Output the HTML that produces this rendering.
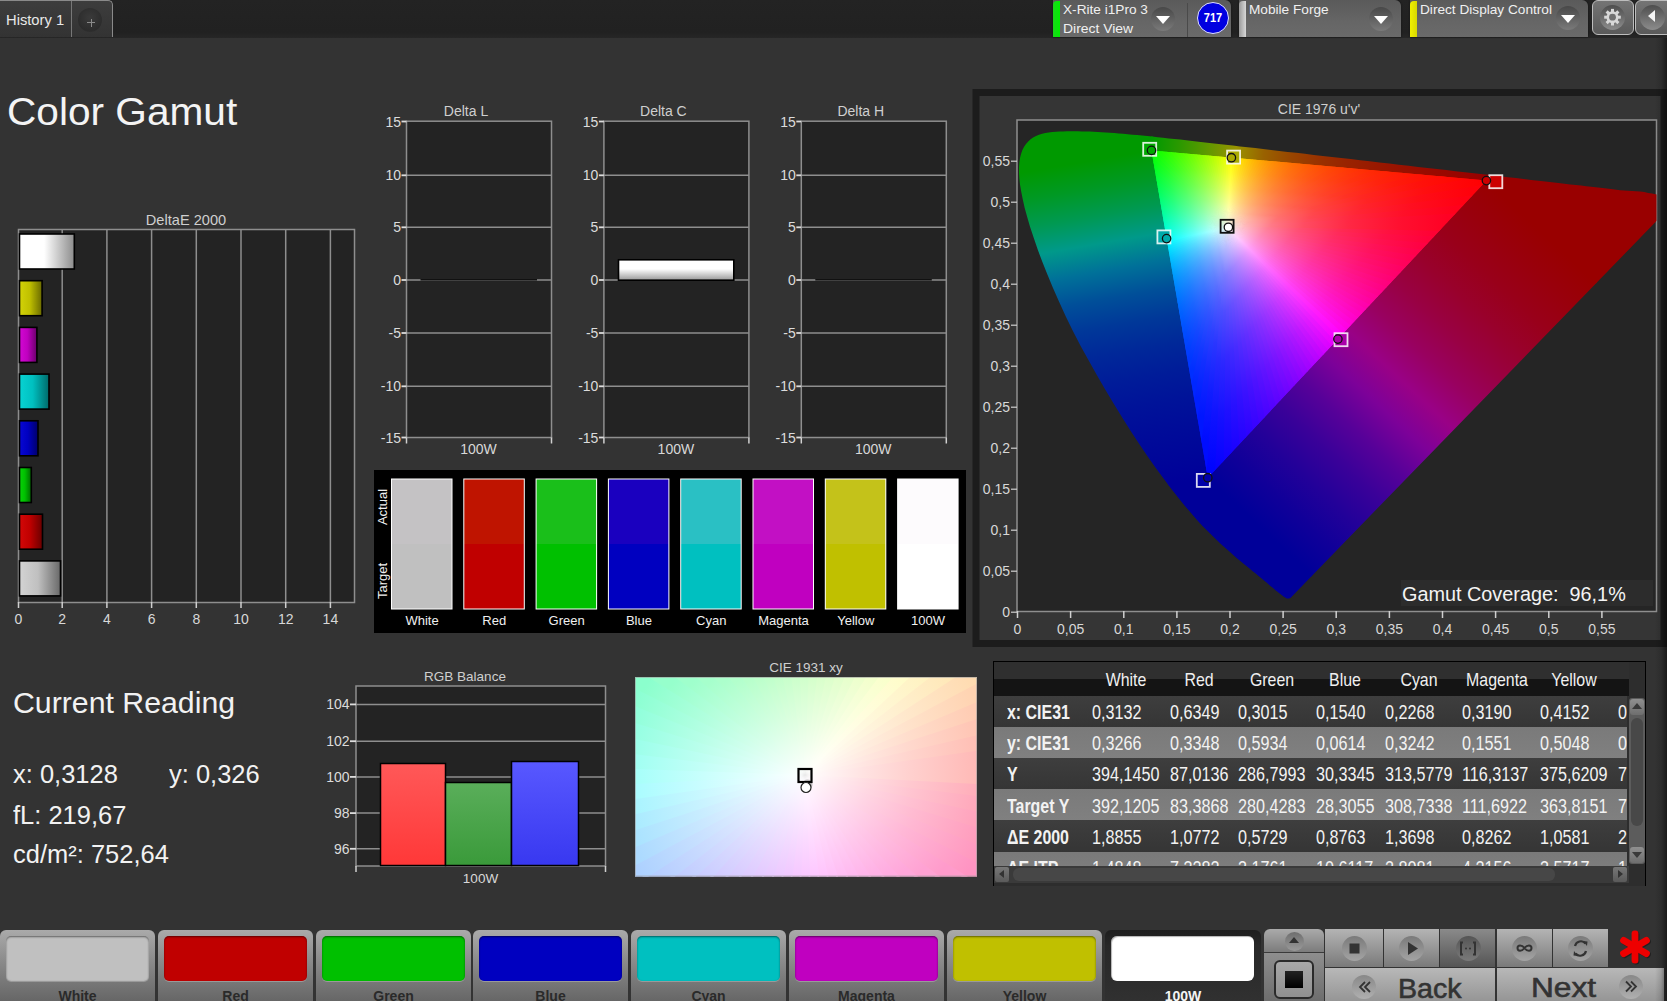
<!DOCTYPE html><html><head><meta charset="utf-8"><style>
*{margin:0;padding:0;box-sizing:border-box}
html,body{width:1667px;height:1001px;overflow:hidden;background:#333;font-family:"Liberation Sans",sans-serif;color:#eee}
.a{position:absolute}
.t{position:absolute;white-space:nowrap;line-height:1}
svg text{font-family:"Liberation Sans",sans-serif}
</style></head><body><div class="a" style="left:0;top:0;width:1667px;height:38px;background:linear-gradient(#232323,#212121 85%,#262626)"></div><div class="a" style="left:0;top:0;width:113px;height:37px;border-radius:0 5px 0 0;background:linear-gradient(#3d3d3d,#333);border-top:1px solid #8a8a8a;border-right:1px solid #8a8a8a"></div><div class="a" style="left:71px;top:1px;width:1px;height:36px;background:#777"></div><div class="a" style="left:78px;top:8px;width:24px;height:24px;border-radius:50%;background:radial-gradient(circle at 50% 40%,#3a3a3a,#2c2c2c 70%,#353535)"></div><div class="t" style="left:87px;top:22px;width:8px;height:1px;background:#8a8a8a"></div><div class="t" style="left:90.5px;top:18.5px;width:1px;height:8px;background:#8a8a8a"></div><div class="t" style="left:5.5px;top:13.3px;font-size:14.1px;color:#e8e8e8;transform:scaleX(1.045);transform-origin:0 0">History 1</div><div class="a" style="left:1053px;top:0;width:178px;height:37px;border-radius:0 6px 0 0;background:linear-gradient(#5a5a5a,#666 60%,#6a6a6a);box-shadow:0 0 2px #111"></div><div class="a" style="left:1053px;top:1px;width:7px;height:36px;border-radius:4px 0 0 0;background:linear-gradient(90deg,#1ad81a,#00f000)"></div><div class="t" style="left:1063px;top:3.3px;font-size:13px;color:#f0f0f0;transform:scaleX(1.05);transform-origin:0 0">X-Rite i1Pro 3</div><div class="t" style="left:1063px;top:22.3px;font-size:13px;color:#f0f0f0;transform:scaleX(1.07);transform-origin:0 0">Direct View</div><div class="a" style="left:1151px;top:7px;width:24px;height:24px;border-radius:50%;background:linear-gradient(#484848,#7a7a7a)"></div><div class="a" style="left:1156px;top:16px;width:0;height:0;border-left:7px solid transparent;border-right:7px solid transparent;border-top:8px solid #fff"></div><div class="a" style="left:1187px;top:3px;width:1px;height:34px;background:#4a4a4a"></div><div class="a" style="left:1197px;top:2px;width:32px;height:32px;border-radius:50%;background:#0000e0;border:1px solid #e0e0ff"></div><div class="t" style="left:1197px;top:12px;width:32px;text-align:center;font-size:12px;font-weight:bold;color:#fff;transform:scaleX(.92)">717</div><div class="a" style="left:1239px;top:0;width:162px;height:37px;border-radius:0 6px 0 0;background:linear-gradient(#5a5a5a,#666 60%,#6a6a6a);box-shadow:0 0 2px #111"></div><div class="a" style="left:1239px;top:1px;width:7px;height:36px;border-radius:4px 0 0 0;background:linear-gradient(90deg,#9a9a9a,#d8d8d8)"></div><div class="t" style="left:1249px;top:3.3px;font-size:13px;color:#f0f0f0;transform:scaleX(1.05);transform-origin:0 0">Mobile Forge</div><div class="a" style="left:1369px;top:7px;width:24px;height:24px;border-radius:50%;background:linear-gradient(#484848,#7a7a7a)"></div><div class="a" style="left:1374px;top:16px;width:0;height:0;border-left:7px solid transparent;border-right:7px solid transparent;border-top:8px solid #fff"></div><div class="a" style="left:1410px;top:0;width:178px;height:37px;border-radius:0 6px 0 0;background:linear-gradient(#5a5a5a,#666 60%,#6a6a6a);box-shadow:0 0 2px #111"></div><div class="a" style="left:1410px;top:1px;width:7px;height:36px;border-radius:4px 0 0 0;background:linear-gradient(90deg,#f0f000,#d8d800)"></div><div class="t" style="left:1420px;top:3.3px;font-size:13px;color:#f0f0f0;transform:scaleX(1.05);transform-origin:0 0">Direct Display Control</div><div class="a" style="left:1556px;top:6px;width:24px;height:24px;border-radius:50%;background:linear-gradient(#484848,#7a7a7a)"></div><div class="a" style="left:1561px;top:15px;width:0;height:0;border-left:7px solid transparent;border-right:7px solid transparent;border-top:8px solid #fff"></div><div class="a" style="left:1592px;top:0;width:42px;height:35px;border-radius:6px;border:1px solid #bdbdbd;background:linear-gradient(#747474,#5a5a5a)"></div><div class="a" style="left:1600px;top:5px;width:25px;height:25px;border-radius:50%;background:linear-gradient(#4e4e4e,#8c8c8c)"></div><svg class="a" style="left:1592px;top:0" width="41" height="35"><g transform="translate(20.5,17.2)" fill="#d8d8d8"><rect x="-1.5" y="-8.3" width="3" height="4" transform="rotate(0)"/><rect x="-1.5" y="-8.3" width="3" height="4" transform="rotate(45)"/><rect x="-1.5" y="-8.3" width="3" height="4" transform="rotate(90)"/><rect x="-1.5" y="-8.3" width="3" height="4" transform="rotate(135)"/><rect x="-1.5" y="-8.3" width="3" height="4" transform="rotate(180)"/><rect x="-1.5" y="-8.3" width="3" height="4" transform="rotate(225)"/><rect x="-1.5" y="-8.3" width="3" height="4" transform="rotate(270)"/><rect x="-1.5" y="-8.3" width="3" height="4" transform="rotate(315)"/><circle r="6"/><circle r="3.4" fill="#707070"/></g></svg><div class="a" style="left:1635px;top:0;width:40px;height:35px;border-radius:6px;border:1px solid #bdbdbd;background:linear-gradient(#747474,#5a5a5a)"></div><div class="a" style="left:1640px;top:5px;width:25px;height:25px;border-radius:50%;background:linear-gradient(#4e4e4e,#8c8c8c)"></div><div class="a" style="left:1648px;top:10px;width:0;height:0;border-top:6.5px solid transparent;border-bottom:6.5px solid transparent;border-right:7.5px solid #f4f4f4"></div><div class="t" style="left:7px;top:93px;font-size:38.5px;color:#f4f4f4;transform:scaleX(1.055);transform-origin:0 0">Color Gamut</div><svg class="a" style="left:0;top:0" width="1667" height="1001"><defs><linearGradient id="db0"><stop offset="0" stop-color="rgb(255, 255, 255)"/><stop offset=".45" stop-color="rgb(255, 255, 255)"/><stop offset="1" stop-color="rgb(140, 140, 140)"/></linearGradient><linearGradient id="db1"><stop offset="0" stop-color="rgb(211, 211, 8)"/><stop offset=".45" stop-color="rgb(192, 192, 0)"/><stop offset="1" stop-color="rgb(105, 105, 0)"/></linearGradient><linearGradient id="db2"><stop offset="0" stop-color="rgb(211, 8, 211)"/><stop offset=".45" stop-color="rgb(192, 0, 192)"/><stop offset="1" stop-color="rgb(105, 0, 105)"/></linearGradient><linearGradient id="db3"><stop offset="0" stop-color="rgb(8, 211, 211)"/><stop offset=".45" stop-color="rgb(0, 192, 192)"/><stop offset="1" stop-color="rgb(0, 105, 105)"/></linearGradient><linearGradient id="db4"><stop offset="0" stop-color="rgb(8, 8, 211)"/><stop offset=".45" stop-color="rgb(0, 0, 192)"/><stop offset="1" stop-color="rgb(0, 0, 105)"/></linearGradient><linearGradient id="db5"><stop offset="0" stop-color="rgb(8, 211, 8)"/><stop offset=".45" stop-color="rgb(0, 192, 0)"/><stop offset="1" stop-color="rgb(0, 105, 0)"/></linearGradient><linearGradient id="db6"><stop offset="0" stop-color="rgb(211, 8, 8)"/><stop offset=".45" stop-color="rgb(192, 0, 0)"/><stop offset="1" stop-color="rgb(105, 0, 0)"/></linearGradient><linearGradient id="db7"><stop offset="0" stop-color="rgb(211, 211, 211)"/><stop offset=".45" stop-color="rgb(192, 192, 192)"/><stop offset="1" stop-color="rgb(105, 105, 105)"/></linearGradient><linearGradient id="dcg" x1="0" y1="0" x2="0" y2="1"><stop offset="0" stop-color="#fff"/><stop offset=".45" stop-color="#fff"/><stop offset="1" stop-color="#999"/></linearGradient><linearGradient id="rb" x1="0" y1="0" x2="0" y2="1"><stop offset="0" stop-color="#ff5858"/><stop offset="1" stop-color="#ff3838"/></linearGradient><linearGradient id="gb" x1="0" y1="0" x2="0" y2="1"><stop offset="0" stop-color="#5aae5a"/><stop offset="1" stop-color="#3a9a3a"/></linearGradient><linearGradient id="bb" x1="0" y1="0" x2="0" y2="1"><stop offset="0" stop-color="#5858ff"/><stop offset="1" stop-color="#3838f0"/></linearGradient></defs><rect x="18.5" y="229.5" width="336" height="373" fill="#232323" stroke="#8e8e8e" stroke-width="1.5"/><line x1="62.2" y1="230" x2="62.2" y2="602" stroke="#8e8e8e" stroke-width="1.5"/><line x1="106.9" y1="230" x2="106.9" y2="602" stroke="#8e8e8e" stroke-width="1.5"/><line x1="151.6" y1="230" x2="151.6" y2="602" stroke="#8e8e8e" stroke-width="1.5"/><line x1="196.3" y1="230" x2="196.3" y2="602" stroke="#8e8e8e" stroke-width="1.5"/><line x1="241" y1="230" x2="241" y2="602" stroke="#8e8e8e" stroke-width="1.5"/><line x1="285.7" y1="230" x2="285.7" y2="602" stroke="#8e8e8e" stroke-width="1.5"/><line x1="330.4" y1="230" x2="330.4" y2="602" stroke="#8e8e8e" stroke-width="1.5"/><line x1="18.5" y1="602" x2="18.5" y2="608" stroke="#d0d0d0" stroke-width="1.5"/><text x="18.5" y="624" font-size="14" fill="#d8d8d8" text-anchor="middle" >0</text><line x1="62.2" y1="602" x2="62.2" y2="608" stroke="#d0d0d0" stroke-width="1.5"/><text x="62.2" y="624" font-size="14" fill="#d8d8d8" text-anchor="middle" >2</text><line x1="106.9" y1="602" x2="106.9" y2="608" stroke="#d0d0d0" stroke-width="1.5"/><text x="106.9" y="624" font-size="14" fill="#d8d8d8" text-anchor="middle" >4</text><line x1="151.6" y1="602" x2="151.6" y2="608" stroke="#d0d0d0" stroke-width="1.5"/><text x="151.6" y="624" font-size="14" fill="#d8d8d8" text-anchor="middle" >6</text><line x1="196.3" y1="602" x2="196.3" y2="608" stroke="#d0d0d0" stroke-width="1.5"/><text x="196.3" y="624" font-size="14" fill="#d8d8d8" text-anchor="middle" >8</text><line x1="241" y1="602" x2="241" y2="608" stroke="#d0d0d0" stroke-width="1.5"/><text x="241" y="624" font-size="14" fill="#d8d8d8" text-anchor="middle" >10</text><line x1="285.7" y1="602" x2="285.7" y2="608" stroke="#d0d0d0" stroke-width="1.5"/><text x="285.7" y="624" font-size="14" fill="#d8d8d8" text-anchor="middle" >12</text><line x1="330.4" y1="602" x2="330.4" y2="608" stroke="#d0d0d0" stroke-width="1.5"/><text x="330.4" y="624" font-size="14" fill="#d8d8d8" text-anchor="middle" >14</text><text x="186" y="225" font-size="14.6" fill="#cfcfcf" text-anchor="middle" >DeltaE 2000</text><rect x="19.5" y="234" width="54.8" height="35" fill="url(#db0)" stroke="#000" stroke-width="1.6"/><rect x="19.5" y="280.7" width="22.6" height="35" fill="url(#db1)" stroke="#000" stroke-width="1.6"/><rect x="19.5" y="327.4" width="17.4" height="35" fill="url(#db2)" stroke="#000" stroke-width="1.6"/><rect x="19.5" y="374.1" width="29.5" height="35" fill="url(#db3)" stroke="#000" stroke-width="1.6"/><rect x="19.5" y="420.8" width="18.5" height="35" fill="url(#db4)" stroke="#000" stroke-width="1.6"/><rect x="19.5" y="467.5" width="11.8" height="35" fill="url(#db5)" stroke="#000" stroke-width="1.6"/><rect x="19.5" y="514.2" width="23" height="35" fill="url(#db6)" stroke="#000" stroke-width="1.6"/><rect x="19.5" y="560.9" width="41" height="35" fill="url(#db7)" stroke="#000" stroke-width="1.6"/><rect x="406.5" y="121.2" width="145" height="316.3" fill="#232323" stroke="#8e8e8e" stroke-width="1.5"/><line x1="401.5" y1="121.5" x2="406.5" y2="121.5" stroke="#dcdcdc" stroke-width="1.8"/><text x="401" y="126.5" font-size="14" fill="#dcdcdc" text-anchor="end" >15</text><line x1="406.5" y1="175.3" x2="551.5" y2="175.3" stroke="#8e8e8e" stroke-width="1.5"/><line x1="401.5" y1="175.3" x2="406.5" y2="175.3" stroke="#dcdcdc" stroke-width="1.8"/><text x="401" y="180.3" font-size="14" fill="#dcdcdc" text-anchor="end" >10</text><line x1="406.5" y1="227.3" x2="551.5" y2="227.3" stroke="#8e8e8e" stroke-width="1.5"/><line x1="401.5" y1="227.3" x2="406.5" y2="227.3" stroke="#dcdcdc" stroke-width="1.8"/><text x="401" y="232.3" font-size="14" fill="#dcdcdc" text-anchor="end" >5</text><line x1="406.5" y1="280" x2="551.5" y2="280" stroke="#8e8e8e" stroke-width="1.5"/><line x1="401.5" y1="280" x2="406.5" y2="280" stroke="#dcdcdc" stroke-width="1.8"/><text x="401" y="285" font-size="14" fill="#dcdcdc" text-anchor="end" >0</text><line x1="406.5" y1="333" x2="551.5" y2="333" stroke="#8e8e8e" stroke-width="1.5"/><line x1="401.5" y1="333" x2="406.5" y2="333" stroke="#dcdcdc" stroke-width="1.8"/><text x="401" y="338" font-size="14" fill="#dcdcdc" text-anchor="end" >-5</text><line x1="406.5" y1="386.3" x2="551.5" y2="386.3" stroke="#8e8e8e" stroke-width="1.5"/><line x1="401.5" y1="386.3" x2="406.5" y2="386.3" stroke="#dcdcdc" stroke-width="1.8"/><text x="401" y="391.3" font-size="14" fill="#dcdcdc" text-anchor="end" >-10</text><line x1="401.5" y1="437.5" x2="406.5" y2="437.5" stroke="#dcdcdc" stroke-width="1.8"/><text x="401" y="442.5" font-size="14" fill="#dcdcdc" text-anchor="end" >-15</text><line x1="406.5" y1="437.5" x2="406.5" y2="443.5" stroke="#d0d0d0" stroke-width="1.5"/><line x1="551.5" y1="437.5" x2="551.5" y2="443.5" stroke="#d0d0d0" stroke-width="1.5"/><text x="466" y="116" font-size="14" fill="#cfcfcf" text-anchor="middle" >Delta L</text><text x="478.5" y="454" font-size="14" fill="#d8d8d8" text-anchor="middle" >100W</text><line x1="420.5" y1="279.8" x2="537" y2="279.8" stroke="#111" stroke-width="1.5"/><rect x="603.9" y="121.2" width="145" height="316.3" fill="#232323" stroke="#8e8e8e" stroke-width="1.5"/><line x1="598.9" y1="121.5" x2="603.9" y2="121.5" stroke="#dcdcdc" stroke-width="1.8"/><text x="598.4" y="126.5" font-size="14" fill="#dcdcdc" text-anchor="end" >15</text><line x1="603.9" y1="175.3" x2="748.9" y2="175.3" stroke="#8e8e8e" stroke-width="1.5"/><line x1="598.9" y1="175.3" x2="603.9" y2="175.3" stroke="#dcdcdc" stroke-width="1.8"/><text x="598.4" y="180.3" font-size="14" fill="#dcdcdc" text-anchor="end" >10</text><line x1="603.9" y1="227.3" x2="748.9" y2="227.3" stroke="#8e8e8e" stroke-width="1.5"/><line x1="598.9" y1="227.3" x2="603.9" y2="227.3" stroke="#dcdcdc" stroke-width="1.8"/><text x="598.4" y="232.3" font-size="14" fill="#dcdcdc" text-anchor="end" >5</text><line x1="603.9" y1="280" x2="748.9" y2="280" stroke="#8e8e8e" stroke-width="1.5"/><line x1="598.9" y1="280" x2="603.9" y2="280" stroke="#dcdcdc" stroke-width="1.8"/><text x="598.4" y="285" font-size="14" fill="#dcdcdc" text-anchor="end" >0</text><line x1="603.9" y1="333" x2="748.9" y2="333" stroke="#8e8e8e" stroke-width="1.5"/><line x1="598.9" y1="333" x2="603.9" y2="333" stroke="#dcdcdc" stroke-width="1.8"/><text x="598.4" y="338" font-size="14" fill="#dcdcdc" text-anchor="end" >-5</text><line x1="603.9" y1="386.3" x2="748.9" y2="386.3" stroke="#8e8e8e" stroke-width="1.5"/><line x1="598.9" y1="386.3" x2="603.9" y2="386.3" stroke="#dcdcdc" stroke-width="1.8"/><text x="598.4" y="391.3" font-size="14" fill="#dcdcdc" text-anchor="end" >-10</text><line x1="598.9" y1="437.5" x2="603.9" y2="437.5" stroke="#dcdcdc" stroke-width="1.8"/><text x="598.4" y="442.5" font-size="14" fill="#dcdcdc" text-anchor="end" >-15</text><line x1="603.9" y1="437.5" x2="603.9" y2="443.5" stroke="#d0d0d0" stroke-width="1.5"/><line x1="748.9" y1="437.5" x2="748.9" y2="443.5" stroke="#d0d0d0" stroke-width="1.5"/><text x="663.4" y="116" font-size="14" fill="#cfcfcf" text-anchor="middle" >Delta C</text><text x="675.9" y="454" font-size="14" fill="#d8d8d8" text-anchor="middle" >100W</text><rect x="618.5" y="259.8" width="115.3" height="20.4" fill="url(#dcg)" stroke="#000" stroke-width="1.6"/><rect x="801.3" y="121.2" width="145" height="316.3" fill="#232323" stroke="#8e8e8e" stroke-width="1.5"/><line x1="796.3" y1="121.5" x2="801.3" y2="121.5" stroke="#dcdcdc" stroke-width="1.8"/><text x="795.8" y="126.5" font-size="14" fill="#dcdcdc" text-anchor="end" >15</text><line x1="801.3" y1="175.3" x2="946.3" y2="175.3" stroke="#8e8e8e" stroke-width="1.5"/><line x1="796.3" y1="175.3" x2="801.3" y2="175.3" stroke="#dcdcdc" stroke-width="1.8"/><text x="795.8" y="180.3" font-size="14" fill="#dcdcdc" text-anchor="end" >10</text><line x1="801.3" y1="227.3" x2="946.3" y2="227.3" stroke="#8e8e8e" stroke-width="1.5"/><line x1="796.3" y1="227.3" x2="801.3" y2="227.3" stroke="#dcdcdc" stroke-width="1.8"/><text x="795.8" y="232.3" font-size="14" fill="#dcdcdc" text-anchor="end" >5</text><line x1="801.3" y1="280" x2="946.3" y2="280" stroke="#8e8e8e" stroke-width="1.5"/><line x1="796.3" y1="280" x2="801.3" y2="280" stroke="#dcdcdc" stroke-width="1.8"/><text x="795.8" y="285" font-size="14" fill="#dcdcdc" text-anchor="end" >0</text><line x1="801.3" y1="333" x2="946.3" y2="333" stroke="#8e8e8e" stroke-width="1.5"/><line x1="796.3" y1="333" x2="801.3" y2="333" stroke="#dcdcdc" stroke-width="1.8"/><text x="795.8" y="338" font-size="14" fill="#dcdcdc" text-anchor="end" >-5</text><line x1="801.3" y1="386.3" x2="946.3" y2="386.3" stroke="#8e8e8e" stroke-width="1.5"/><line x1="796.3" y1="386.3" x2="801.3" y2="386.3" stroke="#dcdcdc" stroke-width="1.8"/><text x="795.8" y="391.3" font-size="14" fill="#dcdcdc" text-anchor="end" >-10</text><line x1="796.3" y1="437.5" x2="801.3" y2="437.5" stroke="#dcdcdc" stroke-width="1.8"/><text x="795.8" y="442.5" font-size="14" fill="#dcdcdc" text-anchor="end" >-15</text><line x1="801.3" y1="437.5" x2="801.3" y2="443.5" stroke="#d0d0d0" stroke-width="1.5"/><line x1="946.3" y1="437.5" x2="946.3" y2="443.5" stroke="#d0d0d0" stroke-width="1.5"/><text x="860.8" y="116" font-size="14" fill="#cfcfcf" text-anchor="middle" >Delta H</text><text x="873.3" y="454" font-size="14" fill="#d8d8d8" text-anchor="middle" >100W</text><line x1="815.3" y1="279.8" x2="931.8" y2="279.8" stroke="#111" stroke-width="1.5"/><rect x="374" y="470" width="592" height="163" fill="#000"/><rect x="391" y="478.5" width="61.5" height="131" fill="#fff"/><rect x="392" y="479.5" width="59.5" height="64.5" fill="rgb(196, 194, 196)"/><rect x="392" y="544" width="59.5" height="64.5" fill="rgb(192, 192, 192)"/><text x="422" y="625" font-size="13" fill="#f0f0f0" text-anchor="middle" >White</text><rect x="463.3" y="478.5" width="61.5" height="131" fill="#fff"/><rect x="464.3" y="479.5" width="59.5" height="64.5" fill="rgb(191, 20, 0)"/><rect x="464.3" y="544" width="59.5" height="64.5" fill="rgb(192, 0, 0)"/><text x="494.3" y="625" font-size="13" fill="#f0f0f0" text-anchor="middle" >Red</text><rect x="535.6" y="478.5" width="61.5" height="131" fill="#fff"/><rect x="536.6" y="479.5" width="59.5" height="64.5" fill="rgb(26, 191, 26)"/><rect x="536.6" y="544" width="59.5" height="64.5" fill="rgb(0, 192, 0)"/><text x="566.6" y="625" font-size="13" fill="#f0f0f0" text-anchor="middle" >Green</text><rect x="607.9" y="478.5" width="61.5" height="131" fill="#fff"/><rect x="608.9" y="479.5" width="59.5" height="64.5" fill="rgb(26, 0, 191)"/><rect x="608.9" y="544" width="59.5" height="64.5" fill="rgb(0, 0, 192)"/><text x="638.9" y="625" font-size="13" fill="#f0f0f0" text-anchor="middle" >Blue</text><rect x="680.2" y="478.5" width="61.5" height="131" fill="#fff"/><rect x="681.2" y="479.5" width="59.5" height="64.5" fill="rgb(42, 192, 196)"/><rect x="681.2" y="544" width="59.5" height="64.5" fill="rgb(0, 192, 192)"/><text x="711.2" y="625" font-size="13" fill="#f0f0f0" text-anchor="middle" >Cyan</text><rect x="752.5" y="478.5" width="61.5" height="131" fill="#fff"/><rect x="753.5" y="479.5" width="59.5" height="64.5" fill="rgb(194, 16, 196)"/><rect x="753.5" y="544" width="59.5" height="64.5" fill="rgb(192, 0, 192)"/><text x="783.5" y="625" font-size="13" fill="#f0f0f0" text-anchor="middle" >Magenta</text><rect x="824.8" y="478.5" width="61.5" height="131" fill="#fff"/><rect x="825.8" y="479.5" width="59.5" height="64.5" fill="rgb(196, 194, 26)"/><rect x="825.8" y="544" width="59.5" height="64.5" fill="rgb(192, 192, 0)"/><text x="855.8" y="625" font-size="13" fill="#f0f0f0" text-anchor="middle" >Yellow</text><rect x="897.1" y="478.5" width="61.5" height="131" fill="#fff"/><rect x="898.1" y="479.5" width="59.5" height="64.5" fill="rgb(253, 251, 253)"/><rect x="898.1" y="544" width="59.5" height="64.5" fill="rgb(255, 255, 255)"/><text x="928.1" y="625" font-size="13" fill="#f0f0f0" text-anchor="middle" >100W</text><text transform="translate(387,507) rotate(-90)" font-size="13" fill="#f0f0f0" text-anchor="middle">Actual</text><text transform="translate(387,581) rotate(-90)" font-size="13" fill="#f0f0f0" text-anchor="middle">Target</text><rect x="976" y="92.5" width="688" height="551" fill="#353535" stroke="#1c1c1c" stroke-width="7"/><rect x="1017" y="120" width="639.5" height="491.5" fill="#252525" stroke="#8e8e8e" stroke-width="1.5"/><defs><clipPath id="cl"><path d="M1290.4 597.9 L1290.3 597.9 L1290.3 597.9 L1290.2 597.9 L1290.2 597.9 L1290.1 598 L1290.1 598.1 L1290 598.1 L1289.9 598.2 L1289.9 598.2 L1289.8 598.2 L1289.7 598.2 L1289.6 598.2 L1289.5 598.2 L1289.4 598.3 L1289.3 598.4 L1289.2 598.5 L1289.1 598.5 L1288.9 598.5 L1288.8 598.5 L1288.6 598.5 L1288.5 598.5 L1288.3 598.5 L1288.1 598.5 L1287.9 598.5 L1287.8 598.5 L1287.6 598.5 L1287.3 598.5 L1287.1 598.5 L1286.7 598.4 L1286.4 598.2 L1286 598 L1285.5 597.7 L1284.9 597.3 L1284.2 596.9 L1283.5 596.4 L1282.7 595.8 L1281.9 595.2 L1281 594.6 L1280.1 593.8 L1279 593 L1277.8 592 L1276.5 591 L1275.1 589.9 L1273.6 588.6 L1272.1 587.3 L1270.4 585.9 L1268.7 584.4 L1266.9 582.8 L1264.9 581.2 L1262.9 579.5 L1260.7 577.7 L1258.3 575.8 L1255.7 573.6 L1253 571.4 L1250.1 569 L1247.1 566.5 L1243.9 563.9 L1240.6 561.2 L1237.2 558.4 L1233.5 555.2 L1229.7 551.8 L1225.7 548.3 L1221.4 544.4 L1217 540.2 L1212.4 535.8 L1207.6 531.1 L1202.5 525.9 L1197 519.9 L1191 513 L1184.5 505.4 L1177.7 497 L1170.6 487.9 L1163.2 478.1 L1155.4 467.5 L1147.5 456.2 L1139.4 444.2 L1131 431.5 L1122.5 418 L1113.9 404 L1105.5 389.9 L1097.1 375.4 L1088.7 360.6 L1080.5 345.7 L1072.9 331 L1065.8 316.6 L1059.2 302.1 L1053 288 L1047.4 274.6 L1042.3 261.8 L1037.7 249.5 L1033.7 237.8 L1030.1 227 L1027.2 217 L1024.7 207.9 L1022.8 199.4 L1021.2 191.6 L1020 184.5 L1019.3 178.1 L1019 172.3 L1019 167 L1019.4 162.1 L1020.1 157.6 L1021.1 153.7 L1022.4 150.1 L1024.1 146.8 L1026 144 L1028.2 141.5 L1030.6 139.3 L1033.1 137.5 L1036 136 L1039 134.8 L1042.1 133.8 L1045.3 133 L1048.7 132.5 L1052.2 132.1 L1055.8 131.8 L1059.4 131.6 L1063.1 131.4 L1066.9 131.3 L1070.7 131.3 L1074.4 131.3 L1078.2 131.3 L1082 131.4 L1085.9 131.5 L1089.7 131.6 L1093.6 131.8 L1097.6 132 L1101.7 132.2 L1105.8 132.5 L1110 132.8 L1114.3 133.1 L1118.7 133.5 L1123.2 133.8 L1127.8 134.2 L1132.5 134.7 L1137.2 135.1 L1142.2 135.6 L1147.2 136.1 L1152.3 136.6 L1157.6 137.2 L1163 137.8 L1168.6 138.4 L1174.3 139 L1180.2 139.6 L1186.2 140.3 L1192.3 141 L1198.6 141.7 L1205.1 142.4 L1211.8 143.2 L1218.6 143.9 L1225.6 144.7 L1232.8 145.5 L1240.1 146.4 L1247.6 147.2 L1255.3 148.1 L1263.1 149 L1271.1 149.9 L1279.3 150.9 L1287.7 151.9 L1296.2 152.8 L1304.9 153.8 L1313.8 154.9 L1322.8 155.9 L1332 157 L1341.2 158 L1350.7 159.1 L1360.2 160.2 L1369.7 161.3 L1379.4 162.4 L1389.2 163.5 L1398.9 164.7 L1408.6 165.8 L1418.1 166.9 L1427.5 168 L1436.9 169 L1446.2 170.1 L1455.5 171.2 L1464.8 172.2 L1473.9 173.3 L1482.8 174.3 L1491.4 175.3 L1499.9 176.3 L1508.1 177.2 L1516 178.1 L1523.7 179 L1531.2 179.9 L1538.4 180.7 L1545.3 181.5 L1552 182.3 L1558.3 183 L1564.4 183.7 L1570.3 184.4 L1575.9 185 L1581.2 185.6 L1586.3 186.2 L1591.2 186.8 L1595.9 187.3 L1600.3 187.8 L1604.6 188.3 L1608.8 188.8 L1612.7 189.3 L1616.5 189.8 L1620.2 190.2 L1624.1 190.6 L1628.1 190.8 L1632.1 191 L1636.2 191.2 L1640.2 191.6 L1644.2 192.1 L1648.2 192.9 L1652 193.6 L1655.5 194.2 L1658.6 194.6 L1661.4 194.9 L1664 195.2 L1666.6 195.5 L1669.2 195.8 L1671.8 196.1 L1674.2 196.3 L1676.1 196.6 L1677.6 196.7 L1678.6 196.8 L1679.3 196.9 L1679.9 197Z"/></clipPath><clipPath id="ct"><path d="M1486.4 180.6 L1151.5 150.4 L1207.8 477.7Z"/></clipPath><clipPath id="cp"><rect x="1017.5" y="120.5" width="639" height="491"/></clipPath><linearGradient id="i0" gradientUnits="userSpaceOnUse" x1="1227.1" y1="226.3" x2="1440" y2="230"><stop offset="0" stop-color="#fbfff5"/><stop offset="0.08" stop-color="#ffbbc0"/><stop offset="0.2" stop-color="#ff7c8d"/><stop offset="0.35" stop-color="#ff4d69"/><stop offset="0.55" stop-color="#ff294c"/><stop offset="0.78" stop-color="#ff1038"/><stop offset="1" stop-color="#ff012c"/></linearGradient><linearGradient id="i1" gradientUnits="userSpaceOnUse" x1="1227.1" y1="226.3" x2="1433.3" y2="237.1"><stop offset="0" stop-color="#fbfff5"/><stop offset="0.08" stop-color="#ffbdc4"/><stop offset="0.2" stop-color="#ff7d93"/><stop offset="0.35" stop-color="#ff4f6f"/><stop offset="0.55" stop-color="#ff2a53"/><stop offset="0.78" stop-color="#ff1140"/><stop offset="1" stop-color="#ff0134"/></linearGradient><linearGradient id="i2" gradientUnits="userSpaceOnUse" x1="1227.1" y1="226.3" x2="1427.1" y2="243.8"><stop offset="0" stop-color="#fbfff5"/><stop offset="0.08" stop-color="#ffbec7"/><stop offset="0.2" stop-color="#ff7f98"/><stop offset="0.35" stop-color="#ff5076"/><stop offset="0.55" stop-color="#ff2b5b"/><stop offset="0.78" stop-color="#ff1147"/><stop offset="1" stop-color="#ff013b"/></linearGradient><linearGradient id="i3" gradientUnits="userSpaceOnUse" x1="1227.1" y1="226.3" x2="1421.1" y2="250.1"><stop offset="0" stop-color="#fbfff5"/><stop offset="0.08" stop-color="#ffc0ca"/><stop offset="0.2" stop-color="#ff819e"/><stop offset="0.35" stop-color="#ff527d"/><stop offset="0.55" stop-color="#ff2c62"/><stop offset="0.78" stop-color="#ff124f"/><stop offset="1" stop-color="#ff0143"/></linearGradient><linearGradient id="i4" gradientUnits="userSpaceOnUse" x1="1227.1" y1="226.3" x2="1415.5" y2="256.2"><stop offset="0" stop-color="#fbfff5"/><stop offset="0.08" stop-color="#ffc1cd"/><stop offset="0.2" stop-color="#ff83a3"/><stop offset="0.35" stop-color="#ff5383"/><stop offset="0.55" stop-color="#ff2d69"/><stop offset="0.78" stop-color="#ff1257"/><stop offset="1" stop-color="#ff014b"/></linearGradient><linearGradient id="i5" gradientUnits="userSpaceOnUse" x1="1227.1" y1="226.3" x2="1410.1" y2="261.9"><stop offset="0" stop-color="#fbfff5"/><stop offset="0.08" stop-color="#ffc2d0"/><stop offset="0.2" stop-color="#ff85a8"/><stop offset="0.35" stop-color="#ff5589"/><stop offset="0.55" stop-color="#ff2e70"/><stop offset="0.78" stop-color="#ff125f"/><stop offset="1" stop-color="#ff0153"/></linearGradient><linearGradient id="i6" gradientUnits="userSpaceOnUse" x1="1227.1" y1="226.3" x2="1405" y2="267.4"><stop offset="0" stop-color="#fbfff5"/><stop offset="0.08" stop-color="#ffc4d3"/><stop offset="0.2" stop-color="#ff86ad"/><stop offset="0.35" stop-color="#ff5690"/><stop offset="0.55" stop-color="#ff2f78"/><stop offset="0.78" stop-color="#ff1366"/><stop offset="1" stop-color="#ff015b"/></linearGradient><linearGradient id="i7" gradientUnits="userSpaceOnUse" x1="1227.1" y1="226.3" x2="1400" y2="272.7"><stop offset="0" stop-color="#fbfff5"/><stop offset="0.08" stop-color="#ffc5d5"/><stop offset="0.2" stop-color="#ff88b2"/><stop offset="0.35" stop-color="#ff5896"/><stop offset="0.55" stop-color="#ff307f"/><stop offset="0.78" stop-color="#ff136e"/><stop offset="1" stop-color="#ff0164"/></linearGradient><linearGradient id="i8" gradientUnits="userSpaceOnUse" x1="1227.1" y1="226.3" x2="1395.3" y2="277.7"><stop offset="0" stop-color="#fbfff5"/><stop offset="0.08" stop-color="#ffc6d8"/><stop offset="0.2" stop-color="#ff89b7"/><stop offset="0.35" stop-color="#ff599c"/><stop offset="0.55" stop-color="#ff3186"/><stop offset="0.78" stop-color="#ff1476"/><stop offset="1" stop-color="#ff016c"/></linearGradient><linearGradient id="i9" gradientUnits="userSpaceOnUse" x1="1227.1" y1="226.3" x2="1390.7" y2="282.6"><stop offset="0" stop-color="#fbfff5"/><stop offset="0.08" stop-color="#ffc7da"/><stop offset="0.2" stop-color="#ff8bbb"/><stop offset="0.35" stop-color="#ff5ba3"/><stop offset="0.55" stop-color="#ff328e"/><stop offset="0.78" stop-color="#ff147e"/><stop offset="1" stop-color="#ff0174"/></linearGradient><linearGradient id="i10" gradientUnits="userSpaceOnUse" x1="1227.1" y1="226.3" x2="1386.2" y2="287.4"><stop offset="0" stop-color="#fbfff5"/><stop offset="0.08" stop-color="#ffc8dd"/><stop offset="0.2" stop-color="#ff8dc0"/><stop offset="0.35" stop-color="#ff5ca9"/><stop offset="0.55" stop-color="#ff3395"/><stop offset="0.78" stop-color="#ff1586"/><stop offset="1" stop-color="#ff017d"/></linearGradient><linearGradient id="i11" gradientUnits="userSpaceOnUse" x1="1227.1" y1="226.3" x2="1381.9" y2="292"><stop offset="0" stop-color="#fbfff5"/><stop offset="0.08" stop-color="#ffc9df"/><stop offset="0.2" stop-color="#ff8ec5"/><stop offset="0.35" stop-color="#ff5eaf"/><stop offset="0.55" stop-color="#ff349c"/><stop offset="0.78" stop-color="#ff158f"/><stop offset="1" stop-color="#ff0185"/></linearGradient><linearGradient id="i12" gradientUnits="userSpaceOnUse" x1="1227.1" y1="226.3" x2="1377.6" y2="296.5"><stop offset="0" stop-color="#fbfff5"/><stop offset="0.08" stop-color="#ffcae2"/><stop offset="0.2" stop-color="#ff90ca"/><stop offset="0.35" stop-color="#ff5fb5"/><stop offset="0.55" stop-color="#ff35a4"/><stop offset="0.78" stop-color="#ff1697"/><stop offset="1" stop-color="#ff018e"/></linearGradient><linearGradient id="i13" gradientUnits="userSpaceOnUse" x1="1227.1" y1="226.3" x2="1373.5" y2="300.9"><stop offset="0" stop-color="#fbfff5"/><stop offset="0.08" stop-color="#ffcce4"/><stop offset="0.2" stop-color="#ff91ce"/><stop offset="0.35" stop-color="#ff61bc"/><stop offset="0.55" stop-color="#ff36ac"/><stop offset="0.78" stop-color="#ff16a0"/><stop offset="1" stop-color="#ff0198"/></linearGradient><linearGradient id="i14" gradientUnits="userSpaceOnUse" x1="1227.1" y1="226.3" x2="1369.5" y2="305.2"><stop offset="0" stop-color="#fbfff5"/><stop offset="0.08" stop-color="#ffcde7"/><stop offset="0.2" stop-color="#ff93d3"/><stop offset="0.35" stop-color="#ff62c2"/><stop offset="0.55" stop-color="#ff37b4"/><stop offset="0.78" stop-color="#ff17a8"/><stop offset="1" stop-color="#ff01a1"/></linearGradient><linearGradient id="i15" gradientUnits="userSpaceOnUse" x1="1227.1" y1="226.3" x2="1365.5" y2="309.5"><stop offset="0" stop-color="#fbfff5"/><stop offset="0.08" stop-color="#ffcee9"/><stop offset="0.2" stop-color="#ff95d8"/><stop offset="0.35" stop-color="#ff64c9"/><stop offset="0.55" stop-color="#ff38bc"/><stop offset="0.78" stop-color="#ff17b2"/><stop offset="1" stop-color="#ff01ab"/></linearGradient><linearGradient id="i16" gradientUnits="userSpaceOnUse" x1="1227.1" y1="226.3" x2="1361.6" y2="313.7"><stop offset="0" stop-color="#fbfff5"/><stop offset="0.08" stop-color="#ffcfeb"/><stop offset="0.2" stop-color="#ff96dc"/><stop offset="0.35" stop-color="#ff65cf"/><stop offset="0.55" stop-color="#ff3ac4"/><stop offset="0.78" stop-color="#ff18bb"/><stop offset="1" stop-color="#ff01b5"/></linearGradient><linearGradient id="i17" gradientUnits="userSpaceOnUse" x1="1227.1" y1="226.3" x2="1357.7" y2="317.8"><stop offset="0" stop-color="#fbfff5"/><stop offset="0.08" stop-color="#ffd0ee"/><stop offset="0.2" stop-color="#ff98e1"/><stop offset="0.35" stop-color="#ff67d6"/><stop offset="0.55" stop-color="#ff3bcc"/><stop offset="0.78" stop-color="#ff18c5"/><stop offset="1" stop-color="#ff01bf"/></linearGradient><linearGradient id="i18" gradientUnits="userSpaceOnUse" x1="1227.1" y1="226.3" x2="1353.9" y2="321.9"><stop offset="0" stop-color="#fbfff5"/><stop offset="0.08" stop-color="#ffd1f0"/><stop offset="0.2" stop-color="#ff99e6"/><stop offset="0.35" stop-color="#ff69dd"/><stop offset="0.55" stop-color="#ff3cd5"/><stop offset="0.78" stop-color="#ff19cf"/><stop offset="1" stop-color="#ff01ca"/></linearGradient><linearGradient id="i19" gradientUnits="userSpaceOnUse" x1="1227.1" y1="226.3" x2="1350.1" y2="325.9"><stop offset="0" stop-color="#fbfff5"/><stop offset="0.08" stop-color="#ffd2f3"/><stop offset="0.2" stop-color="#ff9beb"/><stop offset="0.35" stop-color="#ff6ae4"/><stop offset="0.55" stop-color="#ff3dde"/><stop offset="0.78" stop-color="#ff1ad9"/><stop offset="1" stop-color="#ff01d6"/></linearGradient><linearGradient id="i20" gradientUnits="userSpaceOnUse" x1="1227.1" y1="226.3" x2="1346.3" y2="330"><stop offset="0" stop-color="#fbfff5"/><stop offset="0.08" stop-color="#ffd3f5"/><stop offset="0.2" stop-color="#ff9df0"/><stop offset="0.35" stop-color="#ff6ceb"/><stop offset="0.55" stop-color="#ff3ee7"/><stop offset="0.78" stop-color="#ff1ae4"/><stop offset="1" stop-color="#ff01e2"/></linearGradient><linearGradient id="i21" gradientUnits="userSpaceOnUse" x1="1227.1" y1="226.3" x2="1342.5" y2="334"><stop offset="0" stop-color="#fbfff5"/><stop offset="0.08" stop-color="#ffd4f7"/><stop offset="0.2" stop-color="#ff9ef5"/><stop offset="0.35" stop-color="#ff6ef3"/><stop offset="0.55" stop-color="#ff40f1"/><stop offset="0.78" stop-color="#ff1bef"/><stop offset="1" stop-color="#ff01ee"/></linearGradient><linearGradient id="i22" gradientUnits="userSpaceOnUse" x1="1227.1" y1="226.3" x2="1338.8" y2="338"><stop offset="0" stop-color="#fbfff5"/><stop offset="0.08" stop-color="#ffd5fa"/><stop offset="0.2" stop-color="#ffa0fa"/><stop offset="0.35" stop-color="#ff6ffb"/><stop offset="0.55" stop-color="#ff41fb"/><stop offset="0.78" stop-color="#ff1cfb"/><stop offset="1" stop-color="#ff01fc"/></linearGradient><linearGradient id="i23" gradientUnits="userSpaceOnUse" x1="1227.1" y1="226.3" x2="1335" y2="342"><stop offset="0" stop-color="#fbfff5"/><stop offset="0.08" stop-color="#ffd6fc"/><stop offset="0.2" stop-color="#fea2ff"/><stop offset="0.35" stop-color="#fb70ff"/><stop offset="0.55" stop-color="#f841ff"/><stop offset="0.78" stop-color="#f61bff"/><stop offset="1" stop-color="#f501ff"/></linearGradient><linearGradient id="i24" gradientUnits="userSpaceOnUse" x1="1227.1" y1="226.3" x2="1331.2" y2="346.1"><stop offset="0" stop-color="#fbfff5"/><stop offset="0.08" stop-color="#ffd7ff"/><stop offset="0.2" stop-color="#f9a0ff"/><stop offset="0.35" stop-color="#f46eff"/><stop offset="0.55" stop-color="#ee40ff"/><stop offset="0.78" stop-color="#ea1bff"/><stop offset="1" stop-color="#e701ff"/></linearGradient><linearGradient id="i25" gradientUnits="userSpaceOnUse" x1="1227.1" y1="226.3" x2="1327.4" y2="350.2"><stop offset="0" stop-color="#fbfff5"/><stop offset="0.08" stop-color="#fdd7ff"/><stop offset="0.2" stop-color="#f49fff"/><stop offset="0.35" stop-color="#ec6dff"/><stop offset="0.55" stop-color="#e53eff"/><stop offset="0.78" stop-color="#df1aff"/><stop offset="1" stop-color="#db01ff"/></linearGradient><linearGradient id="i26" gradientUnits="userSpaceOnUse" x1="1227.1" y1="226.3" x2="1323.5" y2="354.3"><stop offset="0" stop-color="#fbfff5"/><stop offset="0.08" stop-color="#fad6ff"/><stop offset="0.2" stop-color="#ef9dff"/><stop offset="0.35" stop-color="#e46bff"/><stop offset="0.55" stop-color="#db3dff"/><stop offset="0.78" stop-color="#d41aff"/><stop offset="1" stop-color="#cf01ff"/></linearGradient><linearGradient id="i27" gradientUnits="userSpaceOnUse" x1="1227.1" y1="226.3" x2="1319.6" y2="358.4"><stop offset="0" stop-color="#fbfff5"/><stop offset="0.08" stop-color="#f8d5ff"/><stop offset="0.2" stop-color="#e99bff"/><stop offset="0.35" stop-color="#dd69ff"/><stop offset="0.55" stop-color="#d23cff"/><stop offset="0.78" stop-color="#c919ff"/><stop offset="1" stop-color="#c301ff"/></linearGradient><linearGradient id="i28" gradientUnits="userSpaceOnUse" x1="1227.1" y1="226.3" x2="1315.6" y2="362.7"><stop offset="0" stop-color="#fbfff5"/><stop offset="0.08" stop-color="#f5d4ff"/><stop offset="0.2" stop-color="#e49aff"/><stop offset="0.35" stop-color="#d668ff"/><stop offset="0.55" stop-color="#c93bff"/><stop offset="0.78" stop-color="#be18ff"/><stop offset="1" stop-color="#b801ff"/></linearGradient><linearGradient id="i29" gradientUnits="userSpaceOnUse" x1="1227.1" y1="226.3" x2="1311.6" y2="367"><stop offset="0" stop-color="#fbfff5"/><stop offset="0.08" stop-color="#f3d3ff"/><stop offset="0.2" stop-color="#df98ff"/><stop offset="0.35" stop-color="#cf66ff"/><stop offset="0.55" stop-color="#c03aff"/><stop offset="0.78" stop-color="#b418ff"/><stop offset="1" stop-color="#ad01ff"/></linearGradient><linearGradient id="i30" gradientUnits="userSpaceOnUse" x1="1227.1" y1="226.3" x2="1307.5" y2="371.4"><stop offset="0" stop-color="#fbfff5"/><stop offset="0.08" stop-color="#f0d2ff"/><stop offset="0.2" stop-color="#da97ff"/><stop offset="0.35" stop-color="#c765ff"/><stop offset="0.55" stop-color="#b739ff"/><stop offset="0.78" stop-color="#aa17ff"/><stop offset="1" stop-color="#a201ff"/></linearGradient><linearGradient id="i31" gradientUnits="userSpaceOnUse" x1="1227.1" y1="226.3" x2="1303.3" y2="375.8"><stop offset="0" stop-color="#fbfff5"/><stop offset="0.08" stop-color="#eed1ff"/><stop offset="0.2" stop-color="#d595ff"/><stop offset="0.35" stop-color="#c064ff"/><stop offset="0.55" stop-color="#ae38ff"/><stop offset="0.78" stop-color="#a117ff"/><stop offset="1" stop-color="#9701ff"/></linearGradient><linearGradient id="i32" gradientUnits="userSpaceOnUse" x1="1227.1" y1="226.3" x2="1299" y2="380.4"><stop offset="0" stop-color="#fbfff5"/><stop offset="0.08" stop-color="#ebd0ff"/><stop offset="0.2" stop-color="#d094ff"/><stop offset="0.35" stop-color="#b962ff"/><stop offset="0.55" stop-color="#a637ff"/><stop offset="0.78" stop-color="#9716ff"/><stop offset="1" stop-color="#8d01ff"/></linearGradient><linearGradient id="i33" gradientUnits="userSpaceOnUse" x1="1227.1" y1="226.3" x2="1294.5" y2="385.2"><stop offset="0" stop-color="#fbfff5"/><stop offset="0.08" stop-color="#e8ceff"/><stop offset="0.2" stop-color="#cb92ff"/><stop offset="0.35" stop-color="#b261ff"/><stop offset="0.55" stop-color="#9d36ff"/><stop offset="0.78" stop-color="#8e16ff"/><stop offset="1" stop-color="#8301ff"/></linearGradient><linearGradient id="i34" gradientUnits="userSpaceOnUse" x1="1227.1" y1="226.3" x2="1289.9" y2="390.1"><stop offset="0" stop-color="#fbfff5"/><stop offset="0.08" stop-color="#e5cdff"/><stop offset="0.2" stop-color="#c591ff"/><stop offset="0.35" stop-color="#ab5fff"/><stop offset="0.55" stop-color="#9535ff"/><stop offset="0.78" stop-color="#8415ff"/><stop offset="1" stop-color="#7901ff"/></linearGradient><linearGradient id="i35" gradientUnits="userSpaceOnUse" x1="1227.1" y1="226.3" x2="1285.2" y2="395.1"><stop offset="0" stop-color="#fbfff5"/><stop offset="0.08" stop-color="#e3ccff"/><stop offset="0.2" stop-color="#c08fff"/><stop offset="0.35" stop-color="#a45eff"/><stop offset="0.55" stop-color="#8c34ff"/><stop offset="0.78" stop-color="#7b15ff"/><stop offset="1" stop-color="#7001ff"/></linearGradient><linearGradient id="i36" gradientUnits="userSpaceOnUse" x1="1227.1" y1="226.3" x2="1280.3" y2="400.4"><stop offset="0" stop-color="#fbfff5"/><stop offset="0.08" stop-color="#e0cbff"/><stop offset="0.2" stop-color="#bb8dff"/><stop offset="0.35" stop-color="#9d5cff"/><stop offset="0.55" stop-color="#8433ff"/><stop offset="0.78" stop-color="#7215ff"/><stop offset="1" stop-color="#6601ff"/></linearGradient><linearGradient id="i37" gradientUnits="userSpaceOnUse" x1="1227.1" y1="226.3" x2="1275.2" y2="405.8"><stop offset="0" stop-color="#fbfff5"/><stop offset="0.08" stop-color="#ddcaff"/><stop offset="0.2" stop-color="#b58cff"/><stop offset="0.35" stop-color="#965bff"/><stop offset="0.55" stop-color="#7c32ff"/><stop offset="0.78" stop-color="#6914ff"/><stop offset="1" stop-color="#5d01ff"/></linearGradient><linearGradient id="i38" gradientUnits="userSpaceOnUse" x1="1227.1" y1="226.3" x2="1269.8" y2="411.5"><stop offset="0" stop-color="#fbfff5"/><stop offset="0.08" stop-color="#dac9ff"/><stop offset="0.2" stop-color="#b08aff"/><stop offset="0.35" stop-color="#8f59ff"/><stop offset="0.55" stop-color="#7331ff"/><stop offset="0.78" stop-color="#6014ff"/><stop offset="1" stop-color="#5301ff"/></linearGradient><linearGradient id="i39" gradientUnits="userSpaceOnUse" x1="1227.1" y1="226.3" x2="1264.2" y2="417.5"><stop offset="0" stop-color="#fbfff5"/><stop offset="0.08" stop-color="#d6c7ff"/><stop offset="0.2" stop-color="#aa88ff"/><stop offset="0.35" stop-color="#8758ff"/><stop offset="0.55" stop-color="#6b30ff"/><stop offset="0.78" stop-color="#5713ff"/><stop offset="1" stop-color="#4a01ff"/></linearGradient><linearGradient id="i40" gradientUnits="userSpaceOnUse" x1="1227.1" y1="226.3" x2="1258.4" y2="423.8"><stop offset="0" stop-color="#fbfff5"/><stop offset="0.08" stop-color="#d3c6ff"/><stop offset="0.2" stop-color="#a487ff"/><stop offset="0.35" stop-color="#8056ff"/><stop offset="0.55" stop-color="#622fff"/><stop offset="0.78" stop-color="#4e13ff"/><stop offset="1" stop-color="#4001ff"/></linearGradient><linearGradient id="i41" gradientUnits="userSpaceOnUse" x1="1227.1" y1="226.3" x2="1252.1" y2="430.4"><stop offset="0" stop-color="#fbfff5"/><stop offset="0.08" stop-color="#d0c5ff"/><stop offset="0.2" stop-color="#9e85ff"/><stop offset="0.35" stop-color="#7855ff"/><stop offset="0.55" stop-color="#5a2eff"/><stop offset="0.78" stop-color="#4412ff"/><stop offset="1" stop-color="#3701ff"/></linearGradient><linearGradient id="i42" gradientUnits="userSpaceOnUse" x1="1227.1" y1="226.3" x2="1245.6" y2="437.4"><stop offset="0" stop-color="#fbfff5"/><stop offset="0.08" stop-color="#ccc3ff"/><stop offset="0.2" stop-color="#9883ff"/><stop offset="0.35" stop-color="#7053ff"/><stop offset="0.55" stop-color="#512dff"/><stop offset="0.78" stop-color="#3b12ff"/><stop offset="1" stop-color="#2d01ff"/></linearGradient><linearGradient id="i43" gradientUnits="userSpaceOnUse" x1="1227.1" y1="226.3" x2="1238.5" y2="444.9"><stop offset="0" stop-color="#fbfff5"/><stop offset="0.08" stop-color="#c8c2ff"/><stop offset="0.2" stop-color="#9181ff"/><stop offset="0.35" stop-color="#6851ff"/><stop offset="0.55" stop-color="#482cff"/><stop offset="0.78" stop-color="#3211ff"/><stop offset="1" stop-color="#2401ff"/></linearGradient><linearGradient id="i44" gradientUnits="userSpaceOnUse" x1="1227.1" y1="226.3" x2="1231" y2="452.9"><stop offset="0" stop-color="#fbfff5"/><stop offset="0.08" stop-color="#c4c0ff"/><stop offset="0.2" stop-color="#8b7fff"/><stop offset="0.35" stop-color="#6050ff"/><stop offset="0.55" stop-color="#3f2aff"/><stop offset="0.78" stop-color="#2911ff"/><stop offset="1" stop-color="#1a01ff"/></linearGradient><linearGradient id="i45" gradientUnits="userSpaceOnUse" x1="1227.1" y1="226.3" x2="1223" y2="461.5"><stop offset="0" stop-color="#fbfff5"/><stop offset="0.08" stop-color="#c0bfff"/><stop offset="0.2" stop-color="#847dff"/><stop offset="0.35" stop-color="#584eff"/><stop offset="0.55" stop-color="#3629ff"/><stop offset="0.78" stop-color="#1f10ff"/><stop offset="1" stop-color="#1101ff"/></linearGradient><linearGradient id="i46" gradientUnits="userSpaceOnUse" x1="1227.1" y1="226.3" x2="1214.3" y2="470.8"><stop offset="0" stop-color="#fbfff5"/><stop offset="0.08" stop-color="#bcbdff"/><stop offset="0.2" stop-color="#7c7bff"/><stop offset="0.35" stop-color="#4f4cff"/><stop offset="0.55" stop-color="#2d28ff"/><stop offset="0.78" stop-color="#1510ff"/><stop offset="1" stop-color="#0701ff"/></linearGradient><linearGradient id="i47" gradientUnits="userSpaceOnUse" x1="1227.1" y1="226.3" x2="1206" y2="467.4"><stop offset="0" stop-color="#fbfff5"/><stop offset="0.08" stop-color="#babeff"/><stop offset="0.2" stop-color="#797dff"/><stop offset="0.35" stop-color="#4b4fff"/><stop offset="0.55" stop-color="#272bff"/><stop offset="0.78" stop-color="#0f13ff"/><stop offset="1" stop-color="#0004ff"/></linearGradient><linearGradient id="i48" gradientUnits="userSpaceOnUse" x1="1227.1" y1="226.3" x2="1201" y2="438.5"><stop offset="0" stop-color="#fbfff5"/><stop offset="0.08" stop-color="#bfc6ff"/><stop offset="0.2" stop-color="#7f88ff"/><stop offset="0.35" stop-color="#505bff"/><stop offset="0.55" stop-color="#2a36ff"/><stop offset="0.78" stop-color="#101dff"/><stop offset="1" stop-color="#000dff"/></linearGradient><linearGradient id="i49" gradientUnits="userSpaceOnUse" x1="1227.1" y1="226.3" x2="1197.1" y2="415.6"><stop offset="0" stop-color="#fbfff5"/><stop offset="0.08" stop-color="#c3ccff"/><stop offset="0.2" stop-color="#8592ff"/><stop offset="0.35" stop-color="#5565ff"/><stop offset="0.55" stop-color="#2e41ff"/><stop offset="0.78" stop-color="#1227ff"/><stop offset="1" stop-color="#0016ff"/></linearGradient><linearGradient id="i50" gradientUnits="userSpaceOnUse" x1="1227.1" y1="226.3" x2="1193.9" y2="397"><stop offset="0" stop-color="#fbfff5"/><stop offset="0.08" stop-color="#c7d1ff"/><stop offset="0.2" stop-color="#8a9bff"/><stop offset="0.35" stop-color="#596fff"/><stop offset="0.55" stop-color="#304bff"/><stop offset="0.78" stop-color="#1330ff"/><stop offset="1" stop-color="#001fff"/></linearGradient><linearGradient id="i51" gradientUnits="userSpaceOnUse" x1="1227.1" y1="226.3" x2="1191.3" y2="381.6"><stop offset="0" stop-color="#fbfff5"/><stop offset="0.08" stop-color="#cad6ff"/><stop offset="0.2" stop-color="#8ea2ff"/><stop offset="0.35" stop-color="#5d78ff"/><stop offset="0.55" stop-color="#3354ff"/><stop offset="0.78" stop-color="#1439ff"/><stop offset="1" stop-color="#0027ff"/></linearGradient><linearGradient id="i52" gradientUnits="userSpaceOnUse" x1="1227.1" y1="226.3" x2="1189" y2="368.5"><stop offset="0" stop-color="#fbfff5"/><stop offset="0.08" stop-color="#cddaff"/><stop offset="0.2" stop-color="#92a9ff"/><stop offset="0.35" stop-color="#6080ff"/><stop offset="0.55" stop-color="#355cff"/><stop offset="0.78" stop-color="#1541ff"/><stop offset="1" stop-color="#002fff"/></linearGradient><linearGradient id="i53" gradientUnits="userSpaceOnUse" x1="1227.1" y1="226.3" x2="1187.1" y2="357.2"><stop offset="0" stop-color="#fbfff5"/><stop offset="0.08" stop-color="#cfddff"/><stop offset="0.2" stop-color="#95afff"/><stop offset="0.35" stop-color="#6487ff"/><stop offset="0.55" stop-color="#3864ff"/><stop offset="0.78" stop-color="#1649ff"/><stop offset="1" stop-color="#0037ff"/></linearGradient><linearGradient id="i54" gradientUnits="userSpaceOnUse" x1="1227.1" y1="226.3" x2="1185.4" y2="347.4"><stop offset="0" stop-color="#fbfff5"/><stop offset="0.08" stop-color="#d1e1ff"/><stop offset="0.2" stop-color="#98b5ff"/><stop offset="0.35" stop-color="#678eff"/><stop offset="0.55" stop-color="#3a6bff"/><stop offset="0.78" stop-color="#1751ff"/><stop offset="1" stop-color="#003eff"/></linearGradient><linearGradient id="i55" gradientUnits="userSpaceOnUse" x1="1227.1" y1="226.3" x2="1183.9" y2="338.8"><stop offset="0" stop-color="#fbfff5"/><stop offset="0.08" stop-color="#d3e3ff"/><stop offset="0.2" stop-color="#9bbaff"/><stop offset="0.35" stop-color="#6995ff"/><stop offset="0.55" stop-color="#3c73ff"/><stop offset="0.78" stop-color="#1858ff"/><stop offset="1" stop-color="#0045ff"/></linearGradient><linearGradient id="i56" gradientUnits="userSpaceOnUse" x1="1227.1" y1="226.3" x2="1182.6" y2="331.2"><stop offset="0" stop-color="#fbfff5"/><stop offset="0.08" stop-color="#d4e6ff"/><stop offset="0.2" stop-color="#9ebeff"/><stop offset="0.35" stop-color="#6c9bff"/><stop offset="0.55" stop-color="#3e79ff"/><stop offset="0.78" stop-color="#195fff"/><stop offset="1" stop-color="#004cff"/></linearGradient><linearGradient id="i57" gradientUnits="userSpaceOnUse" x1="1227.1" y1="226.3" x2="1181.4" y2="324.3"><stop offset="0" stop-color="#fbfff5"/><stop offset="0.08" stop-color="#d6e8ff"/><stop offset="0.2" stop-color="#a0c3ff"/><stop offset="0.35" stop-color="#6fa0ff"/><stop offset="0.55" stop-color="#4080ff"/><stop offset="0.78" stop-color="#1a65ff"/><stop offset="1" stop-color="#0053ff"/></linearGradient><linearGradient id="i58" gradientUnits="userSpaceOnUse" x1="1227.1" y1="226.3" x2="1180.3" y2="318.1"><stop offset="0" stop-color="#fbfff5"/><stop offset="0.08" stop-color="#d7eaff"/><stop offset="0.2" stop-color="#a2c7ff"/><stop offset="0.35" stop-color="#71a6ff"/><stop offset="0.55" stop-color="#4286ff"/><stop offset="0.78" stop-color="#1b6cff"/><stop offset="1" stop-color="#005aff"/></linearGradient><linearGradient id="i59" gradientUnits="userSpaceOnUse" x1="1227.1" y1="226.3" x2="1179.4" y2="312.4"><stop offset="0" stop-color="#fbfff5"/><stop offset="0.08" stop-color="#d9ecff"/><stop offset="0.2" stop-color="#a4cbff"/><stop offset="0.35" stop-color="#73abff"/><stop offset="0.55" stop-color="#438cff"/><stop offset="0.78" stop-color="#1c72ff"/><stop offset="1" stop-color="#0060ff"/></linearGradient><linearGradient id="i60" gradientUnits="userSpaceOnUse" x1="1227.1" y1="226.3" x2="1178.5" y2="307.2"><stop offset="0" stop-color="#fbfff5"/><stop offset="0.08" stop-color="#daeeff"/><stop offset="0.2" stop-color="#a6ceff"/><stop offset="0.35" stop-color="#75b0ff"/><stop offset="0.55" stop-color="#4591ff"/><stop offset="0.78" stop-color="#1d78ff"/><stop offset="1" stop-color="#0066ff"/></linearGradient><linearGradient id="i61" gradientUnits="userSpaceOnUse" x1="1227.1" y1="226.3" x2="1177.7" y2="302.4"><stop offset="0" stop-color="#fbfff5"/><stop offset="0.08" stop-color="#dbf0ff"/><stop offset="0.2" stop-color="#a8d1ff"/><stop offset="0.35" stop-color="#77b4ff"/><stop offset="0.55" stop-color="#4797ff"/><stop offset="0.78" stop-color="#1d7eff"/><stop offset="1" stop-color="#006dff"/></linearGradient><linearGradient id="i62" gradientUnits="userSpaceOnUse" x1="1227.1" y1="226.3" x2="1176.9" y2="298"><stop offset="0" stop-color="#fbfff5"/><stop offset="0.08" stop-color="#dcf1ff"/><stop offset="0.2" stop-color="#aad5ff"/><stop offset="0.35" stop-color="#79b9ff"/><stop offset="0.55" stop-color="#489cff"/><stop offset="0.78" stop-color="#1e84ff"/><stop offset="1" stop-color="#0073ff"/></linearGradient><linearGradient id="i63" gradientUnits="userSpaceOnUse" x1="1227.1" y1="226.3" x2="1176.2" y2="293.9"><stop offset="0" stop-color="#fbfff5"/><stop offset="0.08" stop-color="#ddf3ff"/><stop offset="0.2" stop-color="#acd8ff"/><stop offset="0.35" stop-color="#7bbdff"/><stop offset="0.55" stop-color="#4aa1ff"/><stop offset="0.78" stop-color="#1f8aff"/><stop offset="1" stop-color="#0079ff"/></linearGradient><linearGradient id="i64" gradientUnits="userSpaceOnUse" x1="1227.1" y1="226.3" x2="1175.5" y2="290"><stop offset="0" stop-color="#fbfff5"/><stop offset="0.08" stop-color="#def4ff"/><stop offset="0.2" stop-color="#addbff"/><stop offset="0.35" stop-color="#7dc1ff"/><stop offset="0.55" stop-color="#4ba7ff"/><stop offset="0.78" stop-color="#2090ff"/><stop offset="1" stop-color="#007fff"/></linearGradient><linearGradient id="i65" gradientUnits="userSpaceOnUse" x1="1227.1" y1="226.3" x2="1174.9" y2="286.4"><stop offset="0" stop-color="#fbfff5"/><stop offset="0.08" stop-color="#dff6ff"/><stop offset="0.2" stop-color="#afddff"/><stop offset="0.35" stop-color="#7fc5ff"/><stop offset="0.55" stop-color="#4cabff"/><stop offset="0.78" stop-color="#2095ff"/><stop offset="1" stop-color="#0085ff"/></linearGradient><linearGradient id="i66" gradientUnits="userSpaceOnUse" x1="1227.1" y1="226.3" x2="1174.3" y2="282.9"><stop offset="0" stop-color="#fbfff5"/><stop offset="0.08" stop-color="#e0f7ff"/><stop offset="0.2" stop-color="#b0e0ff"/><stop offset="0.35" stop-color="#80c9ff"/><stop offset="0.55" stop-color="#4eb0ff"/><stop offset="0.78" stop-color="#219bff"/><stop offset="1" stop-color="#008aff"/></linearGradient><linearGradient id="i67" gradientUnits="userSpaceOnUse" x1="1227.1" y1="226.3" x2="1173.7" y2="279.7"><stop offset="0" stop-color="#fbfff5"/><stop offset="0.08" stop-color="#e0f8ff"/><stop offset="0.2" stop-color="#b2e3ff"/><stop offset="0.35" stop-color="#82ccff"/><stop offset="0.55" stop-color="#4fb5ff"/><stop offset="0.78" stop-color="#22a0ff"/><stop offset="1" stop-color="#0090ff"/></linearGradient><linearGradient id="i68" gradientUnits="userSpaceOnUse" x1="1227.1" y1="226.3" x2="1173.2" y2="276.6"><stop offset="0" stop-color="#fbfff5"/><stop offset="0.08" stop-color="#e1f9ff"/><stop offset="0.2" stop-color="#b3e5ff"/><stop offset="0.35" stop-color="#84d0ff"/><stop offset="0.55" stop-color="#51baff"/><stop offset="0.78" stop-color="#23a6ff"/><stop offset="1" stop-color="#0096ff"/></linearGradient><linearGradient id="i69" gradientUnits="userSpaceOnUse" x1="1227.1" y1="226.3" x2="1172.7" y2="273.6"><stop offset="0" stop-color="#fbfff5"/><stop offset="0.08" stop-color="#e2faff"/><stop offset="0.2" stop-color="#b5e7ff"/><stop offset="0.35" stop-color="#85d4ff"/><stop offset="0.55" stop-color="#52beff"/><stop offset="0.78" stop-color="#23abff"/><stop offset="1" stop-color="#009cff"/></linearGradient><linearGradient id="i70" gradientUnits="userSpaceOnUse" x1="1227.1" y1="226.3" x2="1172.2" y2="270.8"><stop offset="0" stop-color="#fbfff5"/><stop offset="0.08" stop-color="#e3fbff"/><stop offset="0.2" stop-color="#b6eaff"/><stop offset="0.35" stop-color="#87d7ff"/><stop offset="0.55" stop-color="#53c3ff"/><stop offset="0.78" stop-color="#24b0ff"/><stop offset="1" stop-color="#00a2ff"/></linearGradient><linearGradient id="i71" gradientUnits="userSpaceOnUse" x1="1227.1" y1="226.3" x2="1171.7" y2="268"><stop offset="0" stop-color="#fbfff5"/><stop offset="0.08" stop-color="#e3fcff"/><stop offset="0.2" stop-color="#b7ecff"/><stop offset="0.35" stop-color="#88dbff"/><stop offset="0.55" stop-color="#55c8ff"/><stop offset="0.78" stop-color="#25b6ff"/><stop offset="1" stop-color="#00a8ff"/></linearGradient><linearGradient id="i72" gradientUnits="userSpaceOnUse" x1="1227.1" y1="226.3" x2="1171.3" y2="265.4"><stop offset="0" stop-color="#fbfff5"/><stop offset="0.08" stop-color="#e4fdff"/><stop offset="0.2" stop-color="#b8eeff"/><stop offset="0.35" stop-color="#8adeff"/><stop offset="0.55" stop-color="#56ccff"/><stop offset="0.78" stop-color="#26bbff"/><stop offset="1" stop-color="#00aeff"/></linearGradient><linearGradient id="i73" gradientUnits="userSpaceOnUse" x1="1227.1" y1="226.3" x2="1170.9" y2="262.8"><stop offset="0" stop-color="#fbfff5"/><stop offset="0.08" stop-color="#e5feff"/><stop offset="0.2" stop-color="#baf1ff"/><stop offset="0.35" stop-color="#8be1ff"/><stop offset="0.55" stop-color="#57d1ff"/><stop offset="0.78" stop-color="#26c1ff"/><stop offset="1" stop-color="#00b4ff"/></linearGradient><linearGradient id="i74" gradientUnits="userSpaceOnUse" x1="1227.1" y1="226.3" x2="1170.4" y2="260.4"><stop offset="0" stop-color="#fbfff5"/><stop offset="0.08" stop-color="#e5ffff"/><stop offset="0.2" stop-color="#bbf3ff"/><stop offset="0.35" stop-color="#8de5ff"/><stop offset="0.55" stop-color="#59d5ff"/><stop offset="0.78" stop-color="#27c6ff"/><stop offset="1" stop-color="#00baff"/></linearGradient><linearGradient id="i75" gradientUnits="userSpaceOnUse" x1="1227.1" y1="226.3" x2="1170" y2="258"><stop offset="0" stop-color="#fbfff5"/><stop offset="0.08" stop-color="#e5fffe"/><stop offset="0.2" stop-color="#bcf5ff"/><stop offset="0.35" stop-color="#8ee8ff"/><stop offset="0.55" stop-color="#5adaff"/><stop offset="0.78" stop-color="#28ccff"/><stop offset="1" stop-color="#00c1ff"/></linearGradient><linearGradient id="i76" gradientUnits="userSpaceOnUse" x1="1227.1" y1="226.3" x2="1169.6" y2="255.6"><stop offset="0" stop-color="#fbfff5"/><stop offset="0.08" stop-color="#e4fffd"/><stop offset="0.2" stop-color="#bdf7ff"/><stop offset="0.35" stop-color="#90ebff"/><stop offset="0.55" stop-color="#5bdeff"/><stop offset="0.78" stop-color="#29d2ff"/><stop offset="1" stop-color="#00c7ff"/></linearGradient><linearGradient id="i77" gradientUnits="userSpaceOnUse" x1="1227.1" y1="226.3" x2="1169.2" y2="253.3"><stop offset="0" stop-color="#fbfff5"/><stop offset="0.08" stop-color="#e4fffc"/><stop offset="0.2" stop-color="#bef9ff"/><stop offset="0.35" stop-color="#91efff"/><stop offset="0.55" stop-color="#5de3ff"/><stop offset="0.78" stop-color="#29d7ff"/><stop offset="1" stop-color="#00ceff"/></linearGradient><linearGradient id="i78" gradientUnits="userSpaceOnUse" x1="1227.1" y1="226.3" x2="1168.8" y2="251.1"><stop offset="0" stop-color="#fbfff5"/><stop offset="0.08" stop-color="#e4fffb"/><stop offset="0.2" stop-color="#bffbff"/><stop offset="0.35" stop-color="#92f2ff"/><stop offset="0.55" stop-color="#5ee8ff"/><stop offset="0.78" stop-color="#2addff"/><stop offset="1" stop-color="#00d5ff"/></linearGradient><linearGradient id="i79" gradientUnits="userSpaceOnUse" x1="1227.1" y1="226.3" x2="1168.5" y2="248.8"><stop offset="0" stop-color="#fbfff5"/><stop offset="0.08" stop-color="#e4fffa"/><stop offset="0.2" stop-color="#c1fdff"/><stop offset="0.35" stop-color="#94f5ff"/><stop offset="0.55" stop-color="#5fecff"/><stop offset="0.78" stop-color="#2be3ff"/><stop offset="1" stop-color="#00dcff"/></linearGradient><linearGradient id="i80" gradientUnits="userSpaceOnUse" x1="1227.1" y1="226.3" x2="1168.1" y2="246.6"><stop offset="0" stop-color="#fbfff5"/><stop offset="0.08" stop-color="#e4fff9"/><stop offset="0.2" stop-color="#c2ffff"/><stop offset="0.35" stop-color="#95f9ff"/><stop offset="0.55" stop-color="#61f1ff"/><stop offset="0.78" stop-color="#2ce9ff"/><stop offset="1" stop-color="#00e3ff"/></linearGradient><linearGradient id="i81" gradientUnits="userSpaceOnUse" x1="1227.1" y1="226.3" x2="1167.7" y2="244.5"><stop offset="0" stop-color="#fbfff5"/><stop offset="0.08" stop-color="#e3fff8"/><stop offset="0.2" stop-color="#c1fffd"/><stop offset="0.35" stop-color="#97fcff"/><stop offset="0.55" stop-color="#62f6ff"/><stop offset="0.78" stop-color="#2df0ff"/><stop offset="1" stop-color="#00eaff"/></linearGradient><linearGradient id="i82" gradientUnits="userSpaceOnUse" x1="1227.1" y1="226.3" x2="1167.3" y2="242.3"><stop offset="0" stop-color="#fbfff5"/><stop offset="0.08" stop-color="#e3fff8"/><stop offset="0.2" stop-color="#c1fffb"/><stop offset="0.35" stop-color="#98ffff"/><stop offset="0.55" stop-color="#64fbff"/><stop offset="0.78" stop-color="#2df6ff"/><stop offset="1" stop-color="#00f2ff"/></linearGradient><linearGradient id="i83" gradientUnits="userSpaceOnUse" x1="1227.1" y1="226.3" x2="1167" y2="240.2"><stop offset="0" stop-color="#fbfff5"/><stop offset="0.08" stop-color="#e3fff7"/><stop offset="0.2" stop-color="#c0fff9"/><stop offset="0.35" stop-color="#98fffb"/><stop offset="0.55" stop-color="#65fffe"/><stop offset="0.78" stop-color="#2efdff"/><stop offset="1" stop-color="#00faff"/></linearGradient><linearGradient id="i84" gradientUnits="userSpaceOnUse" x1="1227.1" y1="226.3" x2="1166.6" y2="238.1"><stop offset="0" stop-color="#fbfff5"/><stop offset="0.08" stop-color="#e3fff6"/><stop offset="0.2" stop-color="#c0fff7"/><stop offset="0.35" stop-color="#97fff8"/><stop offset="0.55" stop-color="#64fff9"/><stop offset="0.78" stop-color="#2efffa"/><stop offset="1" stop-color="#00fffb"/></linearGradient><linearGradient id="i85" gradientUnits="userSpaceOnUse" x1="1227.1" y1="226.3" x2="1166.2" y2="236"><stop offset="0" stop-color="#fbfff5"/><stop offset="0.08" stop-color="#e3fff5"/><stop offset="0.2" stop-color="#c0fff5"/><stop offset="0.35" stop-color="#96fff5"/><stop offset="0.55" stop-color="#64fff4"/><stop offset="0.78" stop-color="#2efff4"/><stop offset="1" stop-color="#00fff3"/></linearGradient><linearGradient id="i86" gradientUnits="userSpaceOnUse" x1="1227.1" y1="226.3" x2="1165.9" y2="233.8"><stop offset="0" stop-color="#fbfff5"/><stop offset="0.08" stop-color="#e2fff4"/><stop offset="0.2" stop-color="#bffff3"/><stop offset="0.35" stop-color="#96fff1"/><stop offset="0.55" stop-color="#63ffef"/><stop offset="0.78" stop-color="#2effed"/><stop offset="1" stop-color="#00ffeb"/></linearGradient><linearGradient id="i87" gradientUnits="userSpaceOnUse" x1="1227.1" y1="226.3" x2="1165.5" y2="231.7"><stop offset="0" stop-color="#fbfff5"/><stop offset="0.08" stop-color="#e2fff4"/><stop offset="0.2" stop-color="#bffff1"/><stop offset="0.35" stop-color="#95ffee"/><stop offset="0.55" stop-color="#63ffea"/><stop offset="0.78" stop-color="#2dffe6"/><stop offset="1" stop-color="#00ffe3"/></linearGradient><linearGradient id="i88" gradientUnits="userSpaceOnUse" x1="1227.1" y1="226.3" x2="1165.1" y2="229.6"><stop offset="0" stop-color="#fbfff5"/><stop offset="0.08" stop-color="#e2fff3"/><stop offset="0.2" stop-color="#beffef"/><stop offset="0.35" stop-color="#95ffeb"/><stop offset="0.55" stop-color="#62ffe5"/><stop offset="0.78" stop-color="#2dffe0"/><stop offset="1" stop-color="#00ffdb"/></linearGradient><linearGradient id="i89" gradientUnits="userSpaceOnUse" x1="1227.1" y1="226.3" x2="1164.8" y2="227.4"><stop offset="0" stop-color="#fbfff5"/><stop offset="0.08" stop-color="#e2fff2"/><stop offset="0.2" stop-color="#beffed"/><stop offset="0.35" stop-color="#94ffe7"/><stop offset="0.55" stop-color="#62ffe0"/><stop offset="0.78" stop-color="#2dffd9"/><stop offset="1" stop-color="#00ffd3"/></linearGradient><linearGradient id="i90" gradientUnits="userSpaceOnUse" x1="1227.1" y1="226.3" x2="1164.4" y2="225.2"><stop offset="0" stop-color="#fbfff5"/><stop offset="0.08" stop-color="#e2fff1"/><stop offset="0.2" stop-color="#beffeb"/><stop offset="0.35" stop-color="#94ffe4"/><stop offset="0.55" stop-color="#61ffdb"/><stop offset="0.78" stop-color="#2cffd3"/><stop offset="1" stop-color="#00ffcb"/></linearGradient><linearGradient id="i91" gradientUnits="userSpaceOnUse" x1="1227.1" y1="226.3" x2="1164" y2="223"><stop offset="0" stop-color="#fbfff5"/><stop offset="0.08" stop-color="#e2fff0"/><stop offset="0.2" stop-color="#bdffe9"/><stop offset="0.35" stop-color="#93ffe1"/><stop offset="0.55" stop-color="#60ffd7"/><stop offset="0.78" stop-color="#2cffcc"/><stop offset="1" stop-color="#00ffc3"/></linearGradient><linearGradient id="i92" gradientUnits="userSpaceOnUse" x1="1227.1" y1="226.3" x2="1163.6" y2="220.8"><stop offset="0" stop-color="#fbfff5"/><stop offset="0.08" stop-color="#e1fff0"/><stop offset="0.2" stop-color="#bdffe7"/><stop offset="0.35" stop-color="#93ffdd"/><stop offset="0.55" stop-color="#60ffd2"/><stop offset="0.78" stop-color="#2cffc6"/><stop offset="1" stop-color="#00ffbb"/></linearGradient><linearGradient id="i93" gradientUnits="userSpaceOnUse" x1="1227.1" y1="226.3" x2="1163.2" y2="218.5"><stop offset="0" stop-color="#fbfff5"/><stop offset="0.08" stop-color="#e1ffef"/><stop offset="0.2" stop-color="#bcffe5"/><stop offset="0.35" stop-color="#92ffda"/><stop offset="0.55" stop-color="#5fffcd"/><stop offset="0.78" stop-color="#2cffbf"/><stop offset="1" stop-color="#00ffb4"/></linearGradient><linearGradient id="i94" gradientUnits="userSpaceOnUse" x1="1227.1" y1="226.3" x2="1162.8" y2="216.1"><stop offset="0" stop-color="#fbfff5"/><stop offset="0.08" stop-color="#e1ffee"/><stop offset="0.2" stop-color="#bcffe3"/><stop offset="0.35" stop-color="#92ffd7"/><stop offset="0.55" stop-color="#5fffc8"/><stop offset="0.78" stop-color="#2bffb9"/><stop offset="1" stop-color="#00ffac"/></linearGradient><linearGradient id="i95" gradientUnits="userSpaceOnUse" x1="1227.1" y1="226.3" x2="1162.4" y2="213.8"><stop offset="0" stop-color="#fbfff5"/><stop offset="0.08" stop-color="#e1ffed"/><stop offset="0.2" stop-color="#bcffe1"/><stop offset="0.35" stop-color="#91ffd3"/><stop offset="0.55" stop-color="#5effc3"/><stop offset="0.78" stop-color="#2bffb2"/><stop offset="1" stop-color="#00ffa4"/></linearGradient><linearGradient id="i96" gradientUnits="userSpaceOnUse" x1="1227.1" y1="226.3" x2="1162" y2="211.3"><stop offset="0" stop-color="#fbfff5"/><stop offset="0.08" stop-color="#e0ffec"/><stop offset="0.2" stop-color="#bbffdf"/><stop offset="0.35" stop-color="#91ffd0"/><stop offset="0.55" stop-color="#5effbd"/><stop offset="0.78" stop-color="#2bffab"/><stop offset="1" stop-color="#00ff9c"/></linearGradient><linearGradient id="i97" gradientUnits="userSpaceOnUse" x1="1227.1" y1="226.3" x2="1161.6" y2="208.8"><stop offset="0" stop-color="#fbfff5"/><stop offset="0.08" stop-color="#e0ffeb"/><stop offset="0.2" stop-color="#bbffdc"/><stop offset="0.35" stop-color="#90ffcc"/><stop offset="0.55" stop-color="#5dffb8"/><stop offset="0.78" stop-color="#2affa4"/><stop offset="1" stop-color="#00ff94"/></linearGradient><linearGradient id="i98" gradientUnits="userSpaceOnUse" x1="1227.1" y1="226.3" x2="1161.1" y2="206.2"><stop offset="0" stop-color="#fbfff5"/><stop offset="0.08" stop-color="#e0ffea"/><stop offset="0.2" stop-color="#baffda"/><stop offset="0.35" stop-color="#8fffc8"/><stop offset="0.55" stop-color="#5dffb3"/><stop offset="0.78" stop-color="#2aff9d"/><stop offset="1" stop-color="#00ff8c"/></linearGradient><linearGradient id="i99" gradientUnits="userSpaceOnUse" x1="1227.1" y1="226.3" x2="1160.6" y2="203.4"><stop offset="0" stop-color="#fbfff5"/><stop offset="0.08" stop-color="#e0ffe9"/><stop offset="0.2" stop-color="#baffd8"/><stop offset="0.35" stop-color="#8fffc4"/><stop offset="0.55" stop-color="#5cffad"/><stop offset="0.78" stop-color="#2aff96"/><stop offset="1" stop-color="#00ff83"/></linearGradient><linearGradient id="i100" gradientUnits="userSpaceOnUse" x1="1227.1" y1="226.3" x2="1160.2" y2="200.6"><stop offset="0" stop-color="#fbfff5"/><stop offset="0.08" stop-color="#e0ffe8"/><stop offset="0.2" stop-color="#b9ffd5"/><stop offset="0.35" stop-color="#8effc0"/><stop offset="0.55" stop-color="#5cffa8"/><stop offset="0.78" stop-color="#29ff8f"/><stop offset="1" stop-color="#00ff7b"/></linearGradient><linearGradient id="i101" gradientUnits="userSpaceOnUse" x1="1227.1" y1="226.3" x2="1159.7" y2="197.7"><stop offset="0" stop-color="#fbfff5"/><stop offset="0.08" stop-color="#dfffe7"/><stop offset="0.2" stop-color="#b9ffd3"/><stop offset="0.35" stop-color="#8effbc"/><stop offset="0.55" stop-color="#5bffa2"/><stop offset="0.78" stop-color="#29ff88"/><stop offset="1" stop-color="#00ff72"/></linearGradient><linearGradient id="i102" gradientUnits="userSpaceOnUse" x1="1227.1" y1="226.3" x2="1159.1" y2="194.6"><stop offset="0" stop-color="#fbfff5"/><stop offset="0.08" stop-color="#dfffe6"/><stop offset="0.2" stop-color="#b8ffd0"/><stop offset="0.35" stop-color="#8dffb8"/><stop offset="0.55" stop-color="#5aff9c"/><stop offset="0.78" stop-color="#28ff80"/><stop offset="1" stop-color="#00ff69"/></linearGradient><linearGradient id="i103" gradientUnits="userSpaceOnUse" x1="1227.1" y1="226.3" x2="1158.6" y2="191.4"><stop offset="0" stop-color="#fbfff5"/><stop offset="0.08" stop-color="#dfffe5"/><stop offset="0.2" stop-color="#b8ffce"/><stop offset="0.35" stop-color="#8cffb4"/><stop offset="0.55" stop-color="#5aff96"/><stop offset="0.78" stop-color="#28ff78"/><stop offset="1" stop-color="#00ff60"/></linearGradient><linearGradient id="i104" gradientUnits="userSpaceOnUse" x1="1227.1" y1="226.3" x2="1158" y2="188"><stop offset="0" stop-color="#fbfff5"/><stop offset="0.08" stop-color="#deffe3"/><stop offset="0.2" stop-color="#b7ffcb"/><stop offset="0.35" stop-color="#8cffaf"/><stop offset="0.55" stop-color="#59ff8f"/><stop offset="0.78" stop-color="#28ff70"/><stop offset="1" stop-color="#00ff57"/></linearGradient><linearGradient id="i105" gradientUnits="userSpaceOnUse" x1="1227.1" y1="226.3" x2="1157.4" y2="184.4"><stop offset="0" stop-color="#fbfff5"/><stop offset="0.08" stop-color="#deffe2"/><stop offset="0.2" stop-color="#b7ffc8"/><stop offset="0.35" stop-color="#8bffaa"/><stop offset="0.55" stop-color="#58ff89"/><stop offset="0.78" stop-color="#27ff68"/><stop offset="1" stop-color="#00ff4d"/></linearGradient><linearGradient id="i106" gradientUnits="userSpaceOnUse" x1="1227.1" y1="226.3" x2="1156.7" y2="180.6"><stop offset="0" stop-color="#fbfff5"/><stop offset="0.08" stop-color="#deffe1"/><stop offset="0.2" stop-color="#b6ffc4"/><stop offset="0.35" stop-color="#8affa5"/><stop offset="0.55" stop-color="#58ff82"/><stop offset="0.78" stop-color="#27ff5f"/><stop offset="1" stop-color="#00ff43"/></linearGradient><linearGradient id="i107" gradientUnits="userSpaceOnUse" x1="1227.1" y1="226.3" x2="1156" y2="176.6"><stop offset="0" stop-color="#fbfff5"/><stop offset="0.08" stop-color="#ddffdf"/><stop offset="0.2" stop-color="#b5ffc1"/><stop offset="0.35" stop-color="#89ffa0"/><stop offset="0.55" stop-color="#57ff7a"/><stop offset="0.78" stop-color="#26ff56"/><stop offset="1" stop-color="#00ff39"/></linearGradient><linearGradient id="i108" gradientUnits="userSpaceOnUse" x1="1227.1" y1="226.3" x2="1155.3" y2="172.2"><stop offset="0" stop-color="#fbfff5"/><stop offset="0.08" stop-color="#ddffde"/><stop offset="0.2" stop-color="#b5ffbe"/><stop offset="0.35" stop-color="#88ff9a"/><stop offset="0.55" stop-color="#56ff73"/><stop offset="0.78" stop-color="#26ff4d"/><stop offset="1" stop-color="#00ff2e"/></linearGradient><linearGradient id="i109" gradientUnits="userSpaceOnUse" x1="1227.1" y1="226.3" x2="1154.5" y2="167.5"><stop offset="0" stop-color="#fbfff5"/><stop offset="0.08" stop-color="#ddffdc"/><stop offset="0.2" stop-color="#b4ffba"/><stop offset="0.35" stop-color="#87ff94"/><stop offset="0.55" stop-color="#55ff6b"/><stop offset="0.78" stop-color="#26ff43"/><stop offset="1" stop-color="#00ff23"/></linearGradient><linearGradient id="i110" gradientUnits="userSpaceOnUse" x1="1227.1" y1="226.3" x2="1153.6" y2="162.4"><stop offset="0" stop-color="#fbfff5"/><stop offset="0.08" stop-color="#dcffda"/><stop offset="0.2" stop-color="#b3ffb6"/><stop offset="0.35" stop-color="#86ff8e"/><stop offset="0.55" stop-color="#54ff62"/><stop offset="0.78" stop-color="#25ff38"/><stop offset="1" stop-color="#00ff17"/></linearGradient><linearGradient id="i111" gradientUnits="userSpaceOnUse" x1="1227.1" y1="226.3" x2="1152.7" y2="156.9"><stop offset="0" stop-color="#fbfff5"/><stop offset="0.08" stop-color="#dcffd8"/><stop offset="0.2" stop-color="#b2ffb1"/><stop offset="0.35" stop-color="#85ff87"/><stop offset="0.55" stop-color="#53ff59"/><stop offset="0.78" stop-color="#24ff2d"/><stop offset="1" stop-color="#00ff0a"/></linearGradient><linearGradient id="i112" gradientUnits="userSpaceOnUse" x1="1227.1" y1="226.3" x2="1151.6" y2="150.8"><stop offset="0" stop-color="#fbfff5"/><stop offset="0.08" stop-color="#dbffd6"/><stop offset="0.2" stop-color="#b1ffac"/><stop offset="0.35" stop-color="#84ff80"/><stop offset="0.55" stop-color="#52ff4f"/><stop offset="0.78" stop-color="#24ff21"/><stop offset="1" stop-color="#00ff00"/></linearGradient><linearGradient id="i113" gradientUnits="userSpaceOnUse" x1="1227.1" y1="226.3" x2="1156.7" y2="150.8"><stop offset="0" stop-color="#fbfff5"/><stop offset="0.08" stop-color="#ddffd6"/><stop offset="0.2" stop-color="#b5ffad"/><stop offset="0.35" stop-color="#8bff80"/><stop offset="0.55" stop-color="#5bff4f"/><stop offset="0.78" stop-color="#2fff21"/><stop offset="1" stop-color="#0cff00"/></linearGradient><linearGradient id="i114" gradientUnits="userSpaceOnUse" x1="1227.1" y1="226.3" x2="1161.9" y2="151.3"><stop offset="0" stop-color="#fbfff5"/><stop offset="0.08" stop-color="#dfffd7"/><stop offset="0.2" stop-color="#baffae"/><stop offset="0.35" stop-color="#92ff81"/><stop offset="0.55" stop-color="#65ff50"/><stop offset="0.78" stop-color="#3aff21"/><stop offset="1" stop-color="#19ff00"/></linearGradient><linearGradient id="i115" gradientUnits="userSpaceOnUse" x1="1227.1" y1="226.3" x2="1166.7" y2="151.7"><stop offset="0" stop-color="#fbfff5"/><stop offset="0.08" stop-color="#e1ffd7"/><stop offset="0.2" stop-color="#beffae"/><stop offset="0.35" stop-color="#98ff82"/><stop offset="0.55" stop-color="#6eff51"/><stop offset="0.78" stop-color="#45ff21"/><stop offset="1" stop-color="#25ff00"/></linearGradient><linearGradient id="i116" gradientUnits="userSpaceOnUse" x1="1227.1" y1="226.3" x2="1171.2" y2="152.2"><stop offset="0" stop-color="#fbfff5"/><stop offset="0.08" stop-color="#e3ffd7"/><stop offset="0.2" stop-color="#c2ffaf"/><stop offset="0.35" stop-color="#9eff83"/><stop offset="0.55" stop-color="#76ff51"/><stop offset="0.78" stop-color="#50ff22"/><stop offset="1" stop-color="#31ff00"/></linearGradient><linearGradient id="i117" gradientUnits="userSpaceOnUse" x1="1227.1" y1="226.3" x2="1175.4" y2="152.5"><stop offset="0" stop-color="#fbfff5"/><stop offset="0.08" stop-color="#e4ffd8"/><stop offset="0.2" stop-color="#c6ffb0"/><stop offset="0.35" stop-color="#a4ff84"/><stop offset="0.55" stop-color="#7eff52"/><stop offset="0.78" stop-color="#5aff22"/><stop offset="1" stop-color="#3dff00"/></linearGradient><linearGradient id="i118" gradientUnits="userSpaceOnUse" x1="1227.1" y1="226.3" x2="1179.4" y2="152.9"><stop offset="0" stop-color="#fbfff5"/><stop offset="0.08" stop-color="#e6ffd8"/><stop offset="0.2" stop-color="#c9ffb0"/><stop offset="0.35" stop-color="#aaff85"/><stop offset="0.55" stop-color="#86ff53"/><stop offset="0.78" stop-color="#64ff23"/><stop offset="1" stop-color="#48ff00"/></linearGradient><linearGradient id="i119" gradientUnits="userSpaceOnUse" x1="1227.1" y1="226.3" x2="1183.2" y2="153.2"><stop offset="0" stop-color="#fbfff5"/><stop offset="0.08" stop-color="#e7ffd8"/><stop offset="0.2" stop-color="#cdffb1"/><stop offset="0.35" stop-color="#afff85"/><stop offset="0.55" stop-color="#8eff53"/><stop offset="0.78" stop-color="#6dff23"/><stop offset="1" stop-color="#52ff00"/></linearGradient><linearGradient id="i120" gradientUnits="userSpaceOnUse" x1="1227.1" y1="226.3" x2="1186.8" y2="153.6"><stop offset="0" stop-color="#fbfff5"/><stop offset="0.08" stop-color="#e9ffd9"/><stop offset="0.2" stop-color="#d0ffb1"/><stop offset="0.35" stop-color="#b5ff86"/><stop offset="0.55" stop-color="#95ff54"/><stop offset="0.78" stop-color="#76ff23"/><stop offset="1" stop-color="#5dff00"/></linearGradient><linearGradient id="i121" gradientUnits="userSpaceOnUse" x1="1227.1" y1="226.3" x2="1190.2" y2="153.9"><stop offset="0" stop-color="#fbfff5"/><stop offset="0.08" stop-color="#eaffd9"/><stop offset="0.2" stop-color="#d3ffb2"/><stop offset="0.35" stop-color="#baff87"/><stop offset="0.55" stop-color="#9cff55"/><stop offset="0.78" stop-color="#7fff24"/><stop offset="1" stop-color="#67ff00"/></linearGradient><linearGradient id="i122" gradientUnits="userSpaceOnUse" x1="1227.1" y1="226.3" x2="1193.4" y2="154.2"><stop offset="0" stop-color="#fbfff5"/><stop offset="0.08" stop-color="#ecffd9"/><stop offset="0.2" stop-color="#d6ffb3"/><stop offset="0.35" stop-color="#beff87"/><stop offset="0.55" stop-color="#a3ff55"/><stop offset="0.78" stop-color="#87ff24"/><stop offset="1" stop-color="#71ff00"/></linearGradient><linearGradient id="i123" gradientUnits="userSpaceOnUse" x1="1227.1" y1="226.3" x2="1196.6" y2="154.4"><stop offset="0" stop-color="#fbfff5"/><stop offset="0.08" stop-color="#edffda"/><stop offset="0.2" stop-color="#d9ffb3"/><stop offset="0.35" stop-color="#c3ff88"/><stop offset="0.55" stop-color="#a9ff56"/><stop offset="0.78" stop-color="#90ff24"/><stop offset="1" stop-color="#7bff00"/></linearGradient><linearGradient id="i124" gradientUnits="userSpaceOnUse" x1="1227.1" y1="226.3" x2="1199.6" y2="154.7"><stop offset="0" stop-color="#fbfff5"/><stop offset="0.08" stop-color="#eeffda"/><stop offset="0.2" stop-color="#dcffb4"/><stop offset="0.35" stop-color="#c8ff89"/><stop offset="0.55" stop-color="#b0ff56"/><stop offset="0.78" stop-color="#98ff25"/><stop offset="1" stop-color="#85ff00"/></linearGradient><linearGradient id="i125" gradientUnits="userSpaceOnUse" x1="1227.1" y1="226.3" x2="1202.5" y2="155"><stop offset="0" stop-color="#fbfff5"/><stop offset="0.08" stop-color="#efffda"/><stop offset="0.2" stop-color="#dfffb4"/><stop offset="0.35" stop-color="#ccff89"/><stop offset="0.55" stop-color="#b6ff57"/><stop offset="0.78" stop-color="#a0ff25"/><stop offset="1" stop-color="#8eff00"/></linearGradient><linearGradient id="i126" gradientUnits="userSpaceOnUse" x1="1227.1" y1="226.3" x2="1205.4" y2="155.2"><stop offset="0" stop-color="#fbfff5"/><stop offset="0.08" stop-color="#f0ffda"/><stop offset="0.2" stop-color="#e1ffb5"/><stop offset="0.35" stop-color="#d0ff8a"/><stop offset="0.55" stop-color="#bcff57"/><stop offset="0.78" stop-color="#a8ff25"/><stop offset="1" stop-color="#98ff00"/></linearGradient><linearGradient id="i127" gradientUnits="userSpaceOnUse" x1="1227.1" y1="226.3" x2="1208.1" y2="155.5"><stop offset="0" stop-color="#fbfff5"/><stop offset="0.08" stop-color="#f1ffdb"/><stop offset="0.2" stop-color="#e4ffb5"/><stop offset="0.35" stop-color="#d5ff8a"/><stop offset="0.55" stop-color="#c2ff58"/><stop offset="0.78" stop-color="#b0ff26"/><stop offset="1" stop-color="#a1ff00"/></linearGradient><linearGradient id="i128" gradientUnits="userSpaceOnUse" x1="1227.1" y1="226.3" x2="1210.8" y2="155.7"><stop offset="0" stop-color="#fbfff5"/><stop offset="0.08" stop-color="#f2ffdb"/><stop offset="0.2" stop-color="#e6ffb5"/><stop offset="0.35" stop-color="#d9ff8b"/><stop offset="0.55" stop-color="#c8ff59"/><stop offset="0.78" stop-color="#b8ff26"/><stop offset="1" stop-color="#aaff00"/></linearGradient><linearGradient id="i129" gradientUnits="userSpaceOnUse" x1="1227.1" y1="226.3" x2="1213.4" y2="156"><stop offset="0" stop-color="#fbfff5"/><stop offset="0.08" stop-color="#f4ffdb"/><stop offset="0.2" stop-color="#e9ffb6"/><stop offset="0.35" stop-color="#ddff8c"/><stop offset="0.55" stop-color="#ceff59"/><stop offset="0.78" stop-color="#c0ff26"/><stop offset="1" stop-color="#b3ff00"/></linearGradient><linearGradient id="i130" gradientUnits="userSpaceOnUse" x1="1227.1" y1="226.3" x2="1216" y2="156.2"><stop offset="0" stop-color="#fbfff5"/><stop offset="0.08" stop-color="#f5ffdb"/><stop offset="0.2" stop-color="#ebffb6"/><stop offset="0.35" stop-color="#e1ff8c"/><stop offset="0.55" stop-color="#d4ff5a"/><stop offset="0.78" stop-color="#c7ff26"/><stop offset="1" stop-color="#bdff00"/></linearGradient><linearGradient id="i131" gradientUnits="userSpaceOnUse" x1="1227.1" y1="226.3" x2="1218.5" y2="156.4"><stop offset="0" stop-color="#fbfff5"/><stop offset="0.08" stop-color="#f6ffdb"/><stop offset="0.2" stop-color="#eeffb7"/><stop offset="0.35" stop-color="#e5ff8d"/><stop offset="0.55" stop-color="#daff5a"/><stop offset="0.78" stop-color="#cfff27"/><stop offset="1" stop-color="#c6ff00"/></linearGradient><linearGradient id="i132" gradientUnits="userSpaceOnUse" x1="1227.1" y1="226.3" x2="1221" y2="156.6"><stop offset="0" stop-color="#fbfff5"/><stop offset="0.08" stop-color="#f7ffdc"/><stop offset="0.2" stop-color="#f0ffb7"/><stop offset="0.35" stop-color="#e9ff8d"/><stop offset="0.55" stop-color="#e0ff5b"/><stop offset="0.78" stop-color="#d7ff27"/><stop offset="1" stop-color="#cfff00"/></linearGradient><linearGradient id="i133" gradientUnits="userSpaceOnUse" x1="1227.1" y1="226.3" x2="1223.5" y2="156.9"><stop offset="0" stop-color="#fbfff5"/><stop offset="0.08" stop-color="#f8ffdc"/><stop offset="0.2" stop-color="#f3ffb8"/><stop offset="0.35" stop-color="#edff8e"/><stop offset="0.55" stop-color="#e6ff5b"/><stop offset="0.78" stop-color="#dfff27"/><stop offset="1" stop-color="#d9ff00"/></linearGradient><linearGradient id="i134" gradientUnits="userSpaceOnUse" x1="1227.1" y1="226.3" x2="1225.9" y2="157.1"><stop offset="0" stop-color="#fbfff5"/><stop offset="0.08" stop-color="#f9ffdc"/><stop offset="0.2" stop-color="#f5ffb8"/><stop offset="0.35" stop-color="#f1ff8e"/><stop offset="0.55" stop-color="#ecff5c"/><stop offset="0.78" stop-color="#e6ff28"/><stop offset="1" stop-color="#e2ff00"/></linearGradient><linearGradient id="i135" gradientUnits="userSpaceOnUse" x1="1227.1" y1="226.3" x2="1228.3" y2="157.3"><stop offset="0" stop-color="#fbfff5"/><stop offset="0.08" stop-color="#faffdc"/><stop offset="0.2" stop-color="#f7ffb8"/><stop offset="0.35" stop-color="#f5ff8f"/><stop offset="0.55" stop-color="#f2ff5c"/><stop offset="0.78" stop-color="#eeff28"/><stop offset="1" stop-color="#ebff00"/></linearGradient><linearGradient id="i136" gradientUnits="userSpaceOnUse" x1="1227.1" y1="226.3" x2="1230.7" y2="157.5"><stop offset="0" stop-color="#fbfff5"/><stop offset="0.08" stop-color="#fbffdc"/><stop offset="0.2" stop-color="#faffb9"/><stop offset="0.35" stop-color="#f9ff8f"/><stop offset="0.55" stop-color="#f7ff5d"/><stop offset="0.78" stop-color="#f6ff28"/><stop offset="1" stop-color="#f5ff00"/></linearGradient><linearGradient id="i137" gradientUnits="userSpaceOnUse" x1="1227.1" y1="226.3" x2="1233.1" y2="157.7"><stop offset="0" stop-color="#fbfff5"/><stop offset="0.08" stop-color="#fbffdd"/><stop offset="0.2" stop-color="#fcffb9"/><stop offset="0.35" stop-color="#fdff90"/><stop offset="0.55" stop-color="#fdff5d"/><stop offset="0.78" stop-color="#feff29"/><stop offset="1" stop-color="#ffff00"/></linearGradient><linearGradient id="i138" gradientUnits="userSpaceOnUse" x1="1227.1" y1="226.3" x2="1235.5" y2="158"><stop offset="0" stop-color="#fbfff5"/><stop offset="0.08" stop-color="#fcffdd"/><stop offset="0.2" stop-color="#feffba"/><stop offset="0.35" stop-color="#fffd8f"/><stop offset="0.55" stop-color="#fffb5c"/><stop offset="0.78" stop-color="#fff828"/><stop offset="1" stop-color="#fff500"/></linearGradient><linearGradient id="i139" gradientUnits="userSpaceOnUse" x1="1227.1" y1="226.3" x2="1237.9" y2="158.2"><stop offset="0" stop-color="#fbfff5"/><stop offset="0.08" stop-color="#fdffdd"/><stop offset="0.2" stop-color="#fffdb9"/><stop offset="0.35" stop-color="#fff98e"/><stop offset="0.55" stop-color="#fff55b"/><stop offset="0.78" stop-color="#fff027"/><stop offset="1" stop-color="#ffec00"/></linearGradient><linearGradient id="i140" gradientUnits="userSpaceOnUse" x1="1227.1" y1="226.3" x2="1240.3" y2="158.4"><stop offset="0" stop-color="#fbfff5"/><stop offset="0.08" stop-color="#feffdd"/><stop offset="0.2" stop-color="#fffbb7"/><stop offset="0.35" stop-color="#fff68c"/><stop offset="0.55" stop-color="#ffef59"/><stop offset="0.78" stop-color="#ffe926"/><stop offset="1" stop-color="#ffe400"/></linearGradient><linearGradient id="i141" gradientUnits="userSpaceOnUse" x1="1227.1" y1="226.3" x2="1242.7" y2="158.6"><stop offset="0" stop-color="#fbfff5"/><stop offset="0.08" stop-color="#ffffdd"/><stop offset="0.2" stop-color="#fff9b6"/><stop offset="0.35" stop-color="#fff28b"/><stop offset="0.55" stop-color="#ffea57"/><stop offset="0.78" stop-color="#ffe225"/><stop offset="1" stop-color="#ffdb00"/></linearGradient><linearGradient id="i142" gradientUnits="userSpaceOnUse" x1="1227.1" y1="226.3" x2="1245.2" y2="158.8"><stop offset="0" stop-color="#fbfff5"/><stop offset="0.08" stop-color="#fffedc"/><stop offset="0.2" stop-color="#fff6b5"/><stop offset="0.35" stop-color="#ffee89"/><stop offset="0.55" stop-color="#ffe456"/><stop offset="0.78" stop-color="#ffdb24"/><stop offset="1" stop-color="#ffd400"/></linearGradient><linearGradient id="i143" gradientUnits="userSpaceOnUse" x1="1227.1" y1="226.3" x2="1247.7" y2="159"><stop offset="0" stop-color="#fbfff5"/><stop offset="0.08" stop-color="#fffddc"/><stop offset="0.2" stop-color="#fff4b4"/><stop offset="0.35" stop-color="#ffea87"/><stop offset="0.55" stop-color="#ffdf55"/><stop offset="0.78" stop-color="#ffd523"/><stop offset="1" stop-color="#ffcc00"/></linearGradient><linearGradient id="i144" gradientUnits="userSpaceOnUse" x1="1227.1" y1="226.3" x2="1250.2" y2="159.3"><stop offset="0" stop-color="#fbfff5"/><stop offset="0.08" stop-color="#fffcdb"/><stop offset="0.2" stop-color="#fff2b2"/><stop offset="0.35" stop-color="#ffe786"/><stop offset="0.55" stop-color="#ffda53"/><stop offset="0.78" stop-color="#ffce23"/><stop offset="1" stop-color="#ffc500"/></linearGradient><linearGradient id="i145" gradientUnits="userSpaceOnUse" x1="1227.1" y1="226.3" x2="1252.7" y2="159.5"><stop offset="0" stop-color="#fbfff5"/><stop offset="0.08" stop-color="#fffada"/><stop offset="0.2" stop-color="#ffefb1"/><stop offset="0.35" stop-color="#ffe384"/><stop offset="0.55" stop-color="#ffd552"/><stop offset="0.78" stop-color="#ffc822"/><stop offset="1" stop-color="#ffbe00"/></linearGradient><linearGradient id="i146" gradientUnits="userSpaceOnUse" x1="1227.1" y1="226.3" x2="1255.4" y2="159.7"><stop offset="0" stop-color="#fbfff5"/><stop offset="0.08" stop-color="#fff9da"/><stop offset="0.2" stop-color="#ffedb0"/><stop offset="0.35" stop-color="#ffdf83"/><stop offset="0.55" stop-color="#ffd050"/><stop offset="0.78" stop-color="#ffc221"/><stop offset="1" stop-color="#ffb700"/></linearGradient><linearGradient id="i147" gradientUnits="userSpaceOnUse" x1="1227.1" y1="226.3" x2="1258" y2="160"><stop offset="0" stop-color="#fbfff5"/><stop offset="0.08" stop-color="#fff8d9"/><stop offset="0.2" stop-color="#ffeaae"/><stop offset="0.35" stop-color="#ffdc81"/><stop offset="0.55" stop-color="#ffcb4f"/><stop offset="0.78" stop-color="#ffbc20"/><stop offset="1" stop-color="#ffb000"/></linearGradient><linearGradient id="i148" gradientUnits="userSpaceOnUse" x1="1227.1" y1="226.3" x2="1260.8" y2="160.2"><stop offset="0" stop-color="#fbfff5"/><stop offset="0.08" stop-color="#fff7d8"/><stop offset="0.2" stop-color="#ffe8ad"/><stop offset="0.35" stop-color="#ffd87f"/><stop offset="0.55" stop-color="#ffc64e"/><stop offset="0.78" stop-color="#ffb620"/><stop offset="1" stop-color="#ffaa00"/></linearGradient><linearGradient id="i149" gradientUnits="userSpaceOnUse" x1="1227.1" y1="226.3" x2="1263.6" y2="160.5"><stop offset="0" stop-color="#fbfff5"/><stop offset="0.08" stop-color="#fff6d8"/><stop offset="0.2" stop-color="#ffe6ac"/><stop offset="0.35" stop-color="#ffd47e"/><stop offset="0.55" stop-color="#ffc24c"/><stop offset="0.78" stop-color="#ffb11f"/><stop offset="1" stop-color="#ffa300"/></linearGradient><linearGradient id="i150" gradientUnits="userSpaceOnUse" x1="1227.1" y1="226.3" x2="1266.5" y2="160.7"><stop offset="0" stop-color="#fbfff5"/><stop offset="0.08" stop-color="#fff5d7"/><stop offset="0.2" stop-color="#ffe3aa"/><stop offset="0.35" stop-color="#ffd17c"/><stop offset="0.55" stop-color="#ffbd4b"/><stop offset="0.78" stop-color="#ffab1e"/><stop offset="1" stop-color="#ff9d00"/></linearGradient><linearGradient id="i151" gradientUnits="userSpaceOnUse" x1="1227.1" y1="226.3" x2="1269.5" y2="161"><stop offset="0" stop-color="#fbfff5"/><stop offset="0.08" stop-color="#fff4d6"/><stop offset="0.2" stop-color="#ffe1a9"/><stop offset="0.35" stop-color="#ffcd7b"/><stop offset="0.55" stop-color="#ffb84a"/><stop offset="0.78" stop-color="#ffa51e"/><stop offset="1" stop-color="#ff9700"/></linearGradient><linearGradient id="i152" gradientUnits="userSpaceOnUse" x1="1227.1" y1="226.3" x2="1272.6" y2="161.3"><stop offset="0" stop-color="#fbfff5"/><stop offset="0.08" stop-color="#fff3d5"/><stop offset="0.2" stop-color="#ffdea8"/><stop offset="0.35" stop-color="#ffc979"/><stop offset="0.55" stop-color="#ffb348"/><stop offset="0.78" stop-color="#ffa01d"/><stop offset="1" stop-color="#ff9100"/></linearGradient><linearGradient id="i153" gradientUnits="userSpaceOnUse" x1="1227.1" y1="226.3" x2="1275.9" y2="161.6"><stop offset="0" stop-color="#fbfff5"/><stop offset="0.08" stop-color="#fff1d4"/><stop offset="0.2" stop-color="#ffdca6"/><stop offset="0.35" stop-color="#ffc578"/><stop offset="0.55" stop-color="#ffae47"/><stop offset="0.78" stop-color="#ff9a1c"/><stop offset="1" stop-color="#ff8b00"/></linearGradient><linearGradient id="i154" gradientUnits="userSpaceOnUse" x1="1227.1" y1="226.3" x2="1279.3" y2="161.9"><stop offset="0" stop-color="#fbfff5"/><stop offset="0.08" stop-color="#fff0d4"/><stop offset="0.2" stop-color="#ffd9a5"/><stop offset="0.35" stop-color="#ffc276"/><stop offset="0.55" stop-color="#ffaa46"/><stop offset="0.78" stop-color="#ff951c"/><stop offset="1" stop-color="#ff8500"/></linearGradient><linearGradient id="i155" gradientUnits="userSpaceOnUse" x1="1227.1" y1="226.3" x2="1282.8" y2="162.2"><stop offset="0" stop-color="#fbfff5"/><stop offset="0.08" stop-color="#ffefd3"/><stop offset="0.2" stop-color="#ffd6a3"/><stop offset="0.35" stop-color="#ffbe74"/><stop offset="0.55" stop-color="#ffa544"/><stop offset="0.78" stop-color="#ff8f1b"/><stop offset="1" stop-color="#ff8000"/></linearGradient><linearGradient id="i156" gradientUnits="userSpaceOnUse" x1="1227.1" y1="226.3" x2="1286.6" y2="162.6"><stop offset="0" stop-color="#fbfff5"/><stop offset="0.08" stop-color="#ffedd2"/><stop offset="0.2" stop-color="#ffd3a2"/><stop offset="0.35" stop-color="#ffba72"/><stop offset="0.55" stop-color="#ffa043"/><stop offset="0.78" stop-color="#ff8a1a"/><stop offset="1" stop-color="#ff7a00"/></linearGradient><linearGradient id="i157" gradientUnits="userSpaceOnUse" x1="1227.1" y1="226.3" x2="1290.5" y2="162.9"><stop offset="0" stop-color="#fbfff5"/><stop offset="0.08" stop-color="#ffecd1"/><stop offset="0.2" stop-color="#ffd0a0"/><stop offset="0.35" stop-color="#ffb671"/><stop offset="0.55" stop-color="#ff9b42"/><stop offset="0.78" stop-color="#ff841a"/><stop offset="1" stop-color="#ff7400"/></linearGradient><linearGradient id="i158" gradientUnits="userSpaceOnUse" x1="1227.1" y1="226.3" x2="1294.7" y2="163.3"><stop offset="0" stop-color="#fbfff5"/><stop offset="0.08" stop-color="#ffebd0"/><stop offset="0.2" stop-color="#ffcd9e"/><stop offset="0.35" stop-color="#ffb16f"/><stop offset="0.55" stop-color="#ff9640"/><stop offset="0.78" stop-color="#ff7f19"/><stop offset="1" stop-color="#ff6e00"/></linearGradient><linearGradient id="i159" gradientUnits="userSpaceOnUse" x1="1227.1" y1="226.3" x2="1299.2" y2="163.7"><stop offset="0" stop-color="#fbfff5"/><stop offset="0.08" stop-color="#ffe9cf"/><stop offset="0.2" stop-color="#ffca9d"/><stop offset="0.35" stop-color="#ffad6d"/><stop offset="0.55" stop-color="#ff913f"/><stop offset="0.78" stop-color="#ff7918"/><stop offset="1" stop-color="#ff6800"/></linearGradient><linearGradient id="i160" gradientUnits="userSpaceOnUse" x1="1227.1" y1="226.3" x2="1303.9" y2="164.1"><stop offset="0" stop-color="#fbfff5"/><stop offset="0.08" stop-color="#ffe7ce"/><stop offset="0.2" stop-color="#ffc79b"/><stop offset="0.35" stop-color="#ffa86b"/><stop offset="0.55" stop-color="#ff8b3d"/><stop offset="0.78" stop-color="#ff7318"/><stop offset="1" stop-color="#ff6300"/></linearGradient><linearGradient id="i161" gradientUnits="userSpaceOnUse" x1="1227.1" y1="226.3" x2="1309" y2="164.6"><stop offset="0" stop-color="#fbfff5"/><stop offset="0.08" stop-color="#ffe5cd"/><stop offset="0.2" stop-color="#ffc399"/><stop offset="0.35" stop-color="#ffa469"/><stop offset="0.55" stop-color="#ff863c"/><stop offset="0.78" stop-color="#ff6e17"/><stop offset="1" stop-color="#ff5d00"/></linearGradient><linearGradient id="i162" gradientUnits="userSpaceOnUse" x1="1227.1" y1="226.3" x2="1314.6" y2="165.1"><stop offset="0" stop-color="#fbfff5"/><stop offset="0.08" stop-color="#ffe3cb"/><stop offset="0.2" stop-color="#ffc097"/><stop offset="0.35" stop-color="#ff9f67"/><stop offset="0.55" stop-color="#ff803a"/><stop offset="0.78" stop-color="#ff6816"/><stop offset="1" stop-color="#ff5700"/></linearGradient><linearGradient id="i163" gradientUnits="userSpaceOnUse" x1="1227.1" y1="226.3" x2="1320.6" y2="165.6"><stop offset="0" stop-color="#fbfff5"/><stop offset="0.08" stop-color="#ffe1ca"/><stop offset="0.2" stop-color="#ffbc95"/><stop offset="0.35" stop-color="#ff9a65"/><stop offset="0.55" stop-color="#ff7b39"/><stop offset="0.78" stop-color="#ff6216"/><stop offset="1" stop-color="#ff5100"/></linearGradient><linearGradient id="i164" gradientUnits="userSpaceOnUse" x1="1227.1" y1="226.3" x2="1327.1" y2="166.2"><stop offset="0" stop-color="#fbfff5"/><stop offset="0.08" stop-color="#ffdfc8"/><stop offset="0.2" stop-color="#ffb892"/><stop offset="0.35" stop-color="#ff9563"/><stop offset="0.55" stop-color="#ff7537"/><stop offset="0.78" stop-color="#ff5c15"/><stop offset="1" stop-color="#ff4b00"/></linearGradient><linearGradient id="i165" gradientUnits="userSpaceOnUse" x1="1227.1" y1="226.3" x2="1334.4" y2="166.9"><stop offset="0" stop-color="#fbfff5"/><stop offset="0.08" stop-color="#ffddc7"/><stop offset="0.2" stop-color="#ffb390"/><stop offset="0.35" stop-color="#ff8f60"/><stop offset="0.55" stop-color="#ff6f35"/><stop offset="0.78" stop-color="#ff5614"/><stop offset="1" stop-color="#ff4500"/></linearGradient><linearGradient id="i166" gradientUnits="userSpaceOnUse" x1="1227.1" y1="226.3" x2="1342.4" y2="167.6"><stop offset="0" stop-color="#fbfff5"/><stop offset="0.08" stop-color="#ffdac5"/><stop offset="0.2" stop-color="#ffae8d"/><stop offset="0.35" stop-color="#ff895e"/><stop offset="0.55" stop-color="#ff6834"/><stop offset="0.78" stop-color="#ff4f13"/><stop offset="1" stop-color="#ff3e00"/></linearGradient><linearGradient id="i167" gradientUnits="userSpaceOnUse" x1="1227.1" y1="226.3" x2="1351.3" y2="168.4"><stop offset="0" stop-color="#fbfff5"/><stop offset="0.08" stop-color="#ffd7c3"/><stop offset="0.2" stop-color="#ffa98a"/><stop offset="0.35" stop-color="#ff835b"/><stop offset="0.55" stop-color="#ff6232"/><stop offset="0.78" stop-color="#ff4913"/><stop offset="1" stop-color="#ff3800"/></linearGradient><linearGradient id="i168" gradientUnits="userSpaceOnUse" x1="1227.1" y1="226.3" x2="1361.4" y2="169.3"><stop offset="0" stop-color="#fbfff5"/><stop offset="0.08" stop-color="#ffd4c1"/><stop offset="0.2" stop-color="#ffa487"/><stop offset="0.35" stop-color="#ff7d58"/><stop offset="0.55" stop-color="#ff5b30"/><stop offset="0.78" stop-color="#ff4212"/><stop offset="1" stop-color="#ff3100"/></linearGradient><linearGradient id="i169" gradientUnits="userSpaceOnUse" x1="1227.1" y1="226.3" x2="1372.9" y2="170.3"><stop offset="0" stop-color="#fbfff5"/><stop offset="0.08" stop-color="#ffd0bf"/><stop offset="0.2" stop-color="#ff9e84"/><stop offset="0.35" stop-color="#ff7655"/><stop offset="0.55" stop-color="#ff542e"/><stop offset="0.78" stop-color="#ff3b11"/><stop offset="1" stop-color="#ff2a00"/></linearGradient><linearGradient id="i170" gradientUnits="userSpaceOnUse" x1="1227.1" y1="226.3" x2="1386.2" y2="171.5"><stop offset="0" stop-color="#fbfff5"/><stop offset="0.08" stop-color="#ffccbc"/><stop offset="0.2" stop-color="#ff9781"/><stop offset="0.35" stop-color="#ff6e52"/><stop offset="0.55" stop-color="#ff4c2c"/><stop offset="0.78" stop-color="#ff3310"/><stop offset="1" stop-color="#ff2300"/></linearGradient><linearGradient id="i171" gradientUnits="userSpaceOnUse" x1="1227.1" y1="226.3" x2="1401.7" y2="172.9"><stop offset="0" stop-color="#fbfff5"/><stop offset="0.08" stop-color="#ffc8b9"/><stop offset="0.2" stop-color="#ff907d"/><stop offset="0.35" stop-color="#ff664f"/><stop offset="0.55" stop-color="#ff4429"/><stop offset="0.78" stop-color="#ff2c0f"/><stop offset="1" stop-color="#ff1c00"/></linearGradient><linearGradient id="i172" gradientUnits="userSpaceOnUse" x1="1227.1" y1="226.3" x2="1420.2" y2="174.6"><stop offset="0" stop-color="#fbfff5"/><stop offset="0.08" stop-color="#ffc3b6"/><stop offset="0.2" stop-color="#ff8878"/><stop offset="0.35" stop-color="#ff5d4b"/><stop offset="0.55" stop-color="#ff3b27"/><stop offset="0.78" stop-color="#ff240e"/><stop offset="1" stop-color="#ff1500"/></linearGradient><linearGradient id="i173" gradientUnits="userSpaceOnUse" x1="1227.1" y1="226.3" x2="1442.5" y2="176.6"><stop offset="0" stop-color="#fbfff5"/><stop offset="0.08" stop-color="#ffbdb2"/><stop offset="0.2" stop-color="#ff7f73"/><stop offset="0.35" stop-color="#ff5447"/><stop offset="0.55" stop-color="#ff3224"/><stop offset="0.78" stop-color="#ff1b0d"/><stop offset="1" stop-color="#ff0d00"/></linearGradient><linearGradient id="i174" gradientUnits="userSpaceOnUse" x1="1227.1" y1="226.3" x2="1470.1" y2="179.1"><stop offset="0" stop-color="#fbfff5"/><stop offset="0.08" stop-color="#ffb6ad"/><stop offset="0.2" stop-color="#ff756e"/><stop offset="0.35" stop-color="#ff4942"/><stop offset="0.55" stop-color="#ff2822"/><stop offset="0.78" stop-color="#ff120c"/><stop offset="1" stop-color="#ff0500"/></linearGradient><linearGradient id="i175" gradientUnits="userSpaceOnUse" x1="1227.1" y1="226.3" x2="1481.2" y2="186.1"><stop offset="0" stop-color="#fbfff5"/><stop offset="0.08" stop-color="#ffb3ad"/><stop offset="0.2" stop-color="#ff716e"/><stop offset="0.35" stop-color="#ff4544"/><stop offset="0.55" stop-color="#ff2425"/><stop offset="0.78" stop-color="#ff0e10"/><stop offset="1" stop-color="#ff0103"/></linearGradient><linearGradient id="i176" gradientUnits="userSpaceOnUse" x1="1227.1" y1="226.3" x2="1471.6" y2="196.3"><stop offset="0" stop-color="#fbfff5"/><stop offset="0.08" stop-color="#ffb5b1"/><stop offset="0.2" stop-color="#ff7375"/><stop offset="0.35" stop-color="#ff474c"/><stop offset="0.55" stop-color="#ff252d"/><stop offset="0.78" stop-color="#ff0e18"/><stop offset="1" stop-color="#ff010b"/></linearGradient><linearGradient id="i177" gradientUnits="userSpaceOnUse" x1="1227.1" y1="226.3" x2="1462.8" y2="205.7"><stop offset="0" stop-color="#fbfff5"/><stop offset="0.08" stop-color="#ffb6b5"/><stop offset="0.2" stop-color="#ff767b"/><stop offset="0.35" stop-color="#ff4853"/><stop offset="0.55" stop-color="#ff2635"/><stop offset="0.78" stop-color="#ff0f20"/><stop offset="1" stop-color="#ff0113"/></linearGradient><linearGradient id="i178" gradientUnits="userSpaceOnUse" x1="1227.1" y1="226.3" x2="1454.6" y2="214.4"><stop offset="0" stop-color="#fbfff5"/><stop offset="0.08" stop-color="#ffb8b9"/><stop offset="0.2" stop-color="#ff7882"/><stop offset="0.35" stop-color="#ff4a5b"/><stop offset="0.55" stop-color="#ff273d"/><stop offset="0.78" stop-color="#ff0f28"/><stop offset="1" stop-color="#ff011c"/></linearGradient><linearGradient id="i179" gradientUnits="userSpaceOnUse" x1="1227.1" y1="226.3" x2="1447.1" y2="222.5"><stop offset="0" stop-color="#fbfff5"/><stop offset="0.08" stop-color="#ffbabd"/><stop offset="0.2" stop-color="#ff7a88"/><stop offset="0.35" stop-color="#ff4c62"/><stop offset="0.55" stop-color="#ff2844"/><stop offset="0.78" stop-color="#ff1030"/><stop offset="1" stop-color="#ff0124"/></linearGradient><linearGradient id="e0" gradientUnits="userSpaceOnUse" x1="1486.4" y1="180.6" x2="1151.5" y2="150.4"><stop offset="0" stop-color="#990000"/><stop offset="0.083" stop-color="#990500"/><stop offset="0.167" stop-color="#990a00"/><stop offset="0.25" stop-color="#991100"/><stop offset="0.333" stop-color="#991900"/><stop offset="0.417" stop-color="#992300"/><stop offset="0.5" stop-color="#993100"/><stop offset="0.583" stop-color="#994500"/><stop offset="0.667" stop-color="#996200"/><stop offset="0.75" stop-color="#999300"/><stop offset="0.833" stop-color="#609900"/><stop offset="0.917" stop-color="#2c9900"/><stop offset="1" stop-color="#009900"/></linearGradient><linearGradient id="e1" gradientUnits="userSpaceOnUse" x1="1151.5" y1="150.4" x2="1207.8" y2="477.7"><stop offset="0" stop-color="#009900"/><stop offset="0.083" stop-color="#009924"/><stop offset="0.167" stop-color="#009952"/><stop offset="0.25" stop-color="#00998a"/><stop offset="0.333" stop-color="#007199"/><stop offset="0.417" stop-color="#004f99"/><stop offset="0.5" stop-color="#003899"/><stop offset="0.583" stop-color="#002899"/><stop offset="0.667" stop-color="#001c99"/><stop offset="0.75" stop-color="#001399"/><stop offset="0.833" stop-color="#000c99"/><stop offset="0.917" stop-color="#000699"/><stop offset="1" stop-color="#000099"/></linearGradient><linearGradient id="e2" gradientUnits="userSpaceOnUse" x1="1207.8" y1="477.7" x2="1486.4" y2="180.6"><stop offset="0" stop-color="#000099"/><stop offset="0.083" stop-color="#100099"/><stop offset="0.167" stop-color="#230199"/><stop offset="0.25" stop-color="#3a0199"/><stop offset="0.333" stop-color="#570199"/><stop offset="0.417" stop-color="#7d0199"/><stop offset="0.5" stop-color="#990186"/><stop offset="0.583" stop-color="#990160"/><stop offset="0.667" stop-color="#990143"/><stop offset="0.75" stop-color="#99012c"/><stop offset="0.833" stop-color="#99001a"/><stop offset="0.917" stop-color="#99000c"/><stop offset="1" stop-color="#990000"/></linearGradient></defs>
<g clip-path="url(#cp)"><g clip-path="url(#cl)"><polygon points="1486.4 180.6 2580.7 1206.5 2715.3 -287.5 1621 -1313.4" fill="#990000"/><polygon points="1151.5 150.4 1286.2 -1343.6 -192.1 -1089.5 -326.8 404.4" fill="#009900"/><polygon points="1207.8 477.7 -270.5 731.8 823.8 1757.7 2302.1 1503.6" fill="#000099"/><polygon points="1487.5 181.7 1150.2 151.3 1284.9 -1342.7 1622.1 -1312.3" fill="url(#e0)"/><polygon points="1152.3 149 1209 478.7 -269.4 732.8 -326 403.1" fill="url(#e1)"/><polygon points="1206.2 477.9 1486.4 179 2580.7 1204.9 2300.5 1503.8" fill="url(#e2)"/><g clip-path="url(#ct)"><polygon points="1227.1 226.3 1577.7 219 1577.2 245.9" fill="url(#i0)"/><polygon points="1227.1 226.3 1567.5 231.1 1566.1 257.2" fill="url(#i1)"/><polygon points="1227.1 226.3 1557.9 242.5 1555.6 267.8" fill="url(#i2)"/><polygon points="1227.1 226.3 1548.7 253.3 1545.7 277.9" fill="url(#i3)"/><polygon points="1227.1 226.3 1540 263.6 1536.3 287.5" fill="url(#i4)"/><polygon points="1227.1 226.3 1531.8 273.5 1527.2 296.7" fill="url(#i5)"/><polygon points="1227.1 226.3 1523.8 282.9 1518.6 305.5" fill="url(#i6)"/><polygon points="1227.1 226.3 1516.2 292 1510.3 314" fill="url(#i7)"/><polygon points="1227.1 226.3 1508.8 300.8 1502.2 322.1" fill="url(#i8)"/><polygon points="1227.1 226.3 1501.6 309.2 1494.5 330" fill="url(#i9)"/><polygon points="1227.1 226.3 1494.7 317.4 1486.9 337.7" fill="url(#i10)"/><polygon points="1227.1 226.3 1487.9 325.4 1479.6 345.1" fill="url(#i11)"/><polygon points="1227.1 226.3 1481.3 333.2 1472.4 352.4" fill="url(#i12)"/><polygon points="1227.1 226.3 1474.8 340.8 1465.3 359.5" fill="url(#i13)"/><polygon points="1227.1 226.3 1468.5 348.3 1458.4 366.4" fill="url(#i14)"/><polygon points="1227.1 226.3 1462.2 355.6 1451.6 373.3" fill="url(#i15)"/><polygon points="1227.1 226.3 1456.1 362.8 1444.9 380" fill="url(#i16)"/><polygon points="1227.1 226.3 1449.9 369.9 1438.3 386.6" fill="url(#i17)"/><polygon points="1227.1 226.3 1443.9 377 1431.7 393.2" fill="url(#i18)"/><polygon points="1227.1 226.3 1437.9 384 1425.1 399.7" fill="url(#i19)"/><polygon points="1227.1 226.3 1431.8 390.9 1418.6 406.2" fill="url(#i20)"/><polygon points="1227.1 226.3 1425.8 397.9 1412.1 412.6" fill="url(#i21)"/><polygon points="1227.1 226.3 1419.8 404.8 1405.6 419.1" fill="url(#i22)"/><polygon points="1227.1 226.3 1413.8 411.7 1399 425.5" fill="url(#i23)"/><polygon points="1227.1 226.3 1407.7 418.7 1392.4 432" fill="url(#i24)"/><polygon points="1227.1 226.3 1401.6 425.7 1385.8 438.5" fill="url(#i25)"/><polygon points="1227.1 226.3 1395.4 432.7 1379.1 445" fill="url(#i26)"/><polygon points="1227.1 226.3 1389.2 439.8 1372.3 451.6" fill="url(#i27)"/><polygon points="1227.1 226.3 1382.8 447 1365.4 458.3" fill="url(#i28)"/><polygon points="1227.1 226.3 1376.3 454.4 1358.4 465.1" fill="url(#i29)"/><polygon points="1227.1 226.3 1369.7 461.8 1351.2 472.1" fill="url(#i30)"/><polygon points="1227.1 226.3 1363 469.4 1343.9 479.1" fill="url(#i31)"/><polygon points="1227.1 226.3 1356 477.2 1336.4 486.4" fill="url(#i32)"/><polygon points="1227.1 226.3 1348.9 485.2 1328.7 493.8" fill="url(#i33)"/><polygon points="1227.1 226.3 1341.6 493.4 1320.8 501.4" fill="url(#i34)"/><polygon points="1227.1 226.3 1334 501.9 1312.5 509.3" fill="url(#i35)"/><polygon points="1227.1 226.3 1326.1 510.7 1304 517.5" fill="url(#i36)"/><polygon points="1227.1 226.3 1318 519.9 1295.2 526" fill="url(#i37)"/><polygon points="1227.1 226.3 1309.4 529.4 1285.9 534.8" fill="url(#i38)"/><polygon points="1227.1 226.3 1300.5 539.4 1276.3 544.1" fill="url(#i39)"/><polygon points="1227.1 226.3 1291.2 549.9 1266.1 553.8" fill="url(#i40)"/><polygon points="1227.1 226.3 1281.3 560.9 1255.5 564.1" fill="url(#i41)"/><polygon points="1227.1 226.3 1270.8 572.6 1244.1 574.9" fill="url(#i42)"/><polygon points="1227.1 226.3 1259.7 585 1232.1 586.5" fill="url(#i43)"/><polygon points="1227.1 226.3 1247.9 598.3 1219.3 598.8" fill="url(#i44)"/><polygon points="1227.1 226.3 1235.2 612.5 1205.5 612" fill="url(#i45)"/><polygon points="1227.1 226.3 1221.5 627.9 1190.7 626.3" fill="url(#i46)"/><polygon points="1227.1 226.3 1207.7 623 1177.3 620.3" fill="url(#i47)"/><polygon points="1227.1 226.3 1197.6 577.1 1170.8 573.8" fill="url(#i48)"/><polygon points="1227.1 226.3 1189.6 540.7 1165.6 536.9" fill="url(#i49)"/><polygon points="1227.1 226.3 1183 511.1 1161.3 506.9" fill="url(#i50)"/><polygon points="1227.1 226.3 1177.5 486.5 1157.6 482" fill="url(#i51)"/><polygon points="1227.1 226.3 1172.7 465.7 1154.5 460.8" fill="url(#i52)"/><polygon points="1227.1 226.3 1168.6 447.7 1151.8 442.6" fill="url(#i53)"/><polygon points="1227.1 226.3 1165 432.1 1149.4 426.7" fill="url(#i54)"/><polygon points="1227.1 226.3 1161.7 418.3 1147.2 412.7" fill="url(#i55)"/><polygon points="1227.1 226.3 1158.8 406 1145.3 400.2" fill="url(#i56)"/><polygon points="1227.1 226.3 1156.2 395 1143.5 389" fill="url(#i57)"/><polygon points="1227.1 226.3 1153.8 385 1141.8 378.9" fill="url(#i58)"/><polygon points="1227.1 226.3 1151.6 375.8 1140.3 369.6" fill="url(#i59)"/><polygon points="1227.1 226.3 1149.5 367.4 1138.9 361.1" fill="url(#i60)"/><polygon points="1227.1 226.3 1147.6 359.7 1137.6 353.2" fill="url(#i61)"/><polygon points="1227.1 226.3 1145.8 352.4 1136.4 345.8" fill="url(#i62)"/><polygon points="1227.1 226.3 1144.2 345.7 1135.2 339" fill="url(#i63)"/><polygon points="1227.1 226.3 1142.6 339.3 1134.1 332.5" fill="url(#i64)"/><polygon points="1227.1 226.3 1141.1 333.3 1133.1 326.4" fill="url(#i65)"/><polygon points="1227.1 226.3 1139.6 327.6 1132.1 320.6" fill="url(#i66)"/><polygon points="1227.1 226.3 1138.3 322.2 1131.2 315.1" fill="url(#i67)"/><polygon points="1227.1 226.3 1137 317.1 1130.3 309.9" fill="url(#i68)"/><polygon points="1227.1 226.3 1135.8 312.1 1129.4 304.8" fill="url(#i69)"/><polygon points="1227.1 226.3 1134.6 307.3 1128.6 300" fill="url(#i70)"/><polygon points="1227.1 226.3 1133.4 302.7 1127.8 295.3" fill="url(#i71)"/><polygon points="1227.1 226.3 1132.3 298.3 1127.1 290.8" fill="url(#i72)"/><polygon points="1227.1 226.3 1131.3 293.9 1126.3 286.4" fill="url(#i73)"/><polygon points="1227.1 226.3 1130.2 289.7 1125.6 282.1" fill="url(#i74)"/><polygon points="1227.1 226.3 1129.2 285.6 1125 277.9" fill="url(#i75)"/><polygon points="1227.1 226.3 1128.3 281.6 1124.3 273.8" fill="url(#i76)"/><polygon points="1227.1 226.3 1127.3 277.6 1123.7 269.8" fill="url(#i77)"/><polygon points="1227.1 226.3 1126.4 273.7 1123.1 265.8" fill="url(#i78)"/><polygon points="1227.1 226.3 1125.5 269.9 1122.5 261.9" fill="url(#i79)"/><polygon points="1227.1 226.3 1124.7 266.1 1121.9 258.1" fill="url(#i80)"/><polygon points="1227.1 226.3 1123.8 262.3 1121.4 254.3" fill="url(#i81)"/><polygon points="1227.1 226.3 1123 258.6 1120.8 250.5" fill="url(#i82)"/><polygon points="1227.1 226.3 1122.2 254.8 1120.3 246.7" fill="url(#i83)"/><polygon points="1227.1 226.3 1121.4 251.1 1119.8 242.9" fill="url(#i84)"/><polygon points="1227.1 226.3 1120.6 247.4 1119.3 239.2" fill="url(#i85)"/><polygon points="1227.1 226.3 1119.8 243.7 1118.8 235.4" fill="url(#i86)"/><polygon points="1227.1 226.3 1119 240 1118.3 231.6" fill="url(#i87)"/><polygon points="1227.1 226.3 1118.3 236.2 1117.8 227.9" fill="url(#i88)"/><polygon points="1227.1 226.3 1117.5 232.5 1117.4 224" fill="url(#i89)"/><polygon points="1227.1 226.3 1116.8 228.6 1116.9 220.2" fill="url(#i90)"/><polygon points="1227.1 226.3 1116 224.8 1116.5 216.3" fill="url(#i91)"/><polygon points="1227.1 226.3 1115.3 220.9 1116 212.3" fill="url(#i92)"/><polygon points="1227.1 226.3 1114.5 216.9 1115.6 208.3" fill="url(#i93)"/><polygon points="1227.1 226.3 1113.8 212.8 1115.2 204.2" fill="url(#i94)"/><polygon points="1227.1 226.3 1113 208.7 1114.7 200" fill="url(#i95)"/><polygon points="1227.1 226.3 1112.3 204.4 1114.3 195.7" fill="url(#i96)"/><polygon points="1227.1 226.3 1111.5 200.1 1113.8 191.3" fill="url(#i97)"/><polygon points="1227.1 226.3 1110.7 195.6 1113.4 186.7" fill="url(#i98)"/><polygon points="1227.1 226.3 1109.9 190.9 1112.9 182.1" fill="url(#i99)"/><polygon points="1227.1 226.3 1109 186.1 1112.5 177.2" fill="url(#i100)"/><polygon points="1227.1 226.3 1108.2 181.2 1112 172.2" fill="url(#i101)"/><polygon points="1227.1 226.3 1107.3 176 1111.5 166.9" fill="url(#i102)"/><polygon points="1227.1 226.3 1106.3 170.5 1111 161.4" fill="url(#i103)"/><polygon points="1227.1 226.3 1105.3 164.8 1110.4 155.7" fill="url(#i104)"/><polygon points="1227.1 226.3 1104.3 158.8 1109.8 149.6" fill="url(#i105)"/><polygon points="1227.1 226.3 1103.2 152.5 1109.2 143.2" fill="url(#i106)"/><polygon points="1227.1 226.3 1102 145.7 1108.6 136.4" fill="url(#i107)"/><polygon points="1227.1 226.3 1100.7 138.5 1107.9 129.1" fill="url(#i108)"/><polygon points="1227.1 226.3 1099.4 130.8 1107.1 121.3" fill="url(#i109)"/><polygon points="1227.1 226.3 1097.9 122.4 1106.2 112.8" fill="url(#i110)"/><polygon points="1227.1 226.3 1096.2 113.4 1105.3 103.7" fill="url(#i111)"/><polygon points="1227.1 226.3 1094.4 103.5 1104.2 93.7" fill="url(#i112)"/><polygon points="1227.1 226.3 1102.8 102.9 1112.7 93.8" fill="url(#i113)"/><polygon points="1227.1 226.3 1111.4 103.1 1121.2 94.6" fill="url(#i114)"/><polygon points="1227.1 226.3 1119.4 103.3 1129.1 95.4" fill="url(#i115)"/><polygon points="1227.1 226.3 1126.9 103.4 1136.6 96.1" fill="url(#i116)"/><polygon points="1227.1 226.3 1133.9 103.6 1143.6 96.8" fill="url(#i117)"/><polygon points="1227.1 226.3 1140.6 103.7 1150.2 97.4" fill="url(#i118)"/><polygon points="1227.1 226.3 1146.9 103.8 1156.5 98" fill="url(#i119)"/><polygon points="1227.1 226.3 1153 103.9 1162.6 98.6" fill="url(#i120)"/><polygon points="1227.1 226.3 1158.7 104 1168.3 99.1" fill="url(#i121)"/><polygon points="1227.1 226.3 1164.3 104.1 1173.8 99.7" fill="url(#i122)"/><polygon points="1227.1 226.3 1169.6 104.2 1179.2 100.2" fill="url(#i123)"/><polygon points="1227.1 226.3 1174.8 104.3 1184.3 100.7" fill="url(#i124)"/><polygon points="1227.1 226.3 1179.8 104.4 1189.3 101.2" fill="url(#i125)"/><polygon points="1227.1 226.3 1184.7 104.6 1194.2 101.7" fill="url(#i126)"/><polygon points="1227.1 226.3 1189.4 104.7 1198.9 102.1" fill="url(#i127)"/><polygon points="1227.1 226.3 1194.1 104.8 1203.5 102.6" fill="url(#i128)"/><polygon points="1227.1 226.3 1198.6 104.9 1208 103.1" fill="url(#i129)"/><polygon points="1227.1 226.3 1203.1 105.1 1212.5 103.6" fill="url(#i130)"/><polygon points="1227.1 226.3 1207.5 105.2 1216.8 104.1" fill="url(#i131)"/><polygon points="1227.1 226.3 1211.8 105.4 1221.1 104.6" fill="url(#i132)"/><polygon points="1227.1 226.3 1216.1 105.5 1225.4 105" fill="url(#i133)"/><polygon points="1227.1 226.3 1220.4 105.7 1229.6 105.5" fill="url(#i134)"/><polygon points="1227.1 226.3 1224.6 105.9 1233.8 106.1" fill="url(#i135)"/><polygon points="1227.1 226.3 1228.8 106.1 1238 106.6" fill="url(#i136)"/><polygon points="1227.1 226.3 1233 106.3 1242.2 107.1" fill="url(#i137)"/><polygon points="1227.1 226.3 1237.2 106.5 1246.3 107.6" fill="url(#i138)"/><polygon points="1227.1 226.3 1241.4 106.8 1250.5 108.2" fill="url(#i139)"/><polygon points="1227.1 226.3 1245.6 107 1254.7 108.8" fill="url(#i140)"/><polygon points="1227.1 226.3 1249.8 107.3 1258.9 109.4" fill="url(#i141)"/><polygon points="1227.1 226.3 1254.1 107.5 1263.1 110" fill="url(#i142)"/><polygon points="1227.1 226.3 1258.4 107.8 1267.4 110.6" fill="url(#i143)"/><polygon points="1227.1 226.3 1262.8 108.1 1271.7 111.2" fill="url(#i144)"/><polygon points="1227.1 226.3 1267.2 108.5 1276.1 111.9" fill="url(#i145)"/><polygon points="1227.1 226.3 1271.7 108.8 1280.6 112.6" fill="url(#i146)"/><polygon points="1227.1 226.3 1276.4 109.1 1285.2 113.3" fill="url(#i147)"/><polygon points="1227.1 226.3 1281.1 109.5 1289.9 114" fill="url(#i148)"/><polygon points="1227.1 226.3 1285.9 109.9 1294.7 114.7" fill="url(#i149)"/><polygon points="1227.1 226.3 1290.9 110.3 1299.6 115.5" fill="url(#i150)"/><polygon points="1227.1 226.3 1296 110.7 1304.7 116.3" fill="url(#i151)"/><polygon points="1227.1 226.3 1301.3 111.2 1309.9 117.2" fill="url(#i152)"/><polygon points="1227.1 226.3 1306.8 111.6 1315.4 118.1" fill="url(#i153)"/><polygon points="1227.1 226.3 1312.5 112.1 1321.1 119" fill="url(#i154)"/><polygon points="1227.1 226.3 1318.5 112.6 1327 120" fill="url(#i155)"/><polygon points="1227.1 226.3 1324.8 113.1 1333.2 121" fill="url(#i156)"/><polygon points="1227.1 226.3 1331.4 113.7 1339.7 122" fill="url(#i157)"/><polygon points="1227.1 226.3 1338.4 114.3 1346.6 123.2" fill="url(#i158)"/><polygon points="1227.1 226.3 1345.7 114.9 1353.9 124.3" fill="url(#i159)"/><polygon points="1227.1 226.3 1353.6 115.6 1361.7 125.6" fill="url(#i160)"/><polygon points="1227.1 226.3 1362.1 116.3 1370.1 126.9" fill="url(#i161)"/><polygon points="1227.1 226.3 1371.1 117 1379.1 128.4" fill="url(#i162)"/><polygon points="1227.1 226.3 1381 117.8 1388.9 129.9" fill="url(#i163)"/><polygon points="1227.1 226.3 1391.7 118.6 1399.5 131.5" fill="url(#i164)"/><polygon points="1227.1 226.3 1403.5 119.5 1411.2 133.3" fill="url(#i165)"/><polygon points="1227.1 226.3 1416.5 120.5 1424.1 135.3" fill="url(#i166)"/><polygon points="1227.1 226.3 1431.1 121.5 1438.5 137.5" fill="url(#i167)"/><polygon points="1227.1 226.3 1447.4 122.6 1454.7 139.9" fill="url(#i168)"/><polygon points="1227.1 226.3 1466 123.9 1473.2 142.6" fill="url(#i169)"/><polygon points="1227.1 226.3 1487.5 125.3 1494.4 145.6" fill="url(#i170)"/><polygon points="1227.1 226.3 1512.5 127 1519.2 149.1" fill="url(#i171)"/><polygon points="1227.1 226.3 1542.1 128.8 1548.7 153.3" fill="url(#i172)"/><polygon points="1227.1 226.3 1578 131 1584.3 158.2" fill="url(#i173)"/><polygon points="1227.1 226.3 1622.4 133.6 1628.3 164.2" fill="url(#i174)"/><polygon points="1227.1 226.3 1640.7 144.4 1645.7 176.4" fill="url(#i175)"/><polygon points="1227.1 226.3 1626 161.7 1629.8 192.5" fill="url(#i176)"/><polygon points="1227.1 226.3 1612.6 177.6 1615.2 207.3" fill="url(#i177)"/><polygon points="1227.1 226.3 1600.1 192.4 1601.6 221.1" fill="url(#i178)"/><polygon points="1227.1 226.3 1588.5 206.1 1589 233.9" fill="url(#i179)"/></g></g></g><line x1="1011" y1="612.2" x2="1017" y2="612.2" stroke="#d0d0d0" stroke-width="1.2"/><text x="1010" y="617.2" font-size="14" fill="#d8d8d8" text-anchor="end" >0</text><line x1="1011" y1="571.2" x2="1017" y2="571.2" stroke="#d0d0d0" stroke-width="1.2"/><text x="1010" y="576.2" font-size="14" fill="#d8d8d8" text-anchor="end" >0,05</text><line x1="1011" y1="530.2" x2="1017" y2="530.2" stroke="#d0d0d0" stroke-width="1.2"/><text x="1010" y="535.2" font-size="14" fill="#d8d8d8" text-anchor="end" >0,1</text><line x1="1011" y1="489.2" x2="1017" y2="489.2" stroke="#d0d0d0" stroke-width="1.2"/><text x="1010" y="494.2" font-size="14" fill="#d8d8d8" text-anchor="end" >0,15</text><line x1="1011" y1="448.2" x2="1017" y2="448.2" stroke="#d0d0d0" stroke-width="1.2"/><text x="1010" y="453.2" font-size="14" fill="#d8d8d8" text-anchor="end" >0,2</text><line x1="1011" y1="407.2" x2="1017" y2="407.2" stroke="#d0d0d0" stroke-width="1.2"/><text x="1010" y="412.2" font-size="14" fill="#d8d8d8" text-anchor="end" >0,25</text><line x1="1011" y1="366.2" x2="1017" y2="366.2" stroke="#d0d0d0" stroke-width="1.2"/><text x="1010" y="371.2" font-size="14" fill="#d8d8d8" text-anchor="end" >0,3</text><line x1="1011" y1="325.2" x2="1017" y2="325.2" stroke="#d0d0d0" stroke-width="1.2"/><text x="1010" y="330.2" font-size="14" fill="#d8d8d8" text-anchor="end" >0,35</text><line x1="1011" y1="284.2" x2="1017" y2="284.2" stroke="#d0d0d0" stroke-width="1.2"/><text x="1010" y="289.2" font-size="14" fill="#d8d8d8" text-anchor="end" >0,4</text><line x1="1011" y1="243.2" x2="1017" y2="243.2" stroke="#d0d0d0" stroke-width="1.2"/><text x="1010" y="248.2" font-size="14" fill="#d8d8d8" text-anchor="end" >0,45</text><line x1="1011" y1="202.2" x2="1017" y2="202.2" stroke="#d0d0d0" stroke-width="1.2"/><text x="1010" y="207.2" font-size="14" fill="#d8d8d8" text-anchor="end" >0,5</text><line x1="1011" y1="161.2" x2="1017" y2="161.2" stroke="#d0d0d0" stroke-width="1.2"/><text x="1010" y="166.2" font-size="14" fill="#d8d8d8" text-anchor="end" >0,55</text><line x1="1017.5" y1="611" x2="1017.5" y2="618" stroke="#d0d0d0" stroke-width="1.5"/><text x="1017.5" y="634" font-size="14" fill="#d8d8d8" text-anchor="middle" >0</text><line x1="1070.6" y1="611" x2="1070.6" y2="618" stroke="#d0d0d0" stroke-width="1.5"/><text x="1070.6" y="634" font-size="14" fill="#d8d8d8" text-anchor="middle" >0,05</text><line x1="1123.8" y1="611" x2="1123.8" y2="618" stroke="#d0d0d0" stroke-width="1.5"/><text x="1123.8" y="634" font-size="14" fill="#d8d8d8" text-anchor="middle" >0,1</text><line x1="1176.9" y1="611" x2="1176.9" y2="618" stroke="#d0d0d0" stroke-width="1.5"/><text x="1176.9" y="634" font-size="14" fill="#d8d8d8" text-anchor="middle" >0,15</text><line x1="1230" y1="611" x2="1230" y2="618" stroke="#d0d0d0" stroke-width="1.5"/><text x="1230" y="634" font-size="14" fill="#d8d8d8" text-anchor="middle" >0,2</text><line x1="1283.1" y1="611" x2="1283.1" y2="618" stroke="#d0d0d0" stroke-width="1.5"/><text x="1283.1" y="634" font-size="14" fill="#d8d8d8" text-anchor="middle" >0,25</text><line x1="1336.2" y1="611" x2="1336.2" y2="618" stroke="#d0d0d0" stroke-width="1.5"/><text x="1336.2" y="634" font-size="14" fill="#d8d8d8" text-anchor="middle" >0,3</text><line x1="1389.4" y1="611" x2="1389.4" y2="618" stroke="#d0d0d0" stroke-width="1.5"/><text x="1389.4" y="634" font-size="14" fill="#d8d8d8" text-anchor="middle" >0,35</text><line x1="1442.5" y1="611" x2="1442.5" y2="618" stroke="#d0d0d0" stroke-width="1.5"/><text x="1442.5" y="634" font-size="14" fill="#d8d8d8" text-anchor="middle" >0,4</text><line x1="1495.6" y1="611" x2="1495.6" y2="618" stroke="#d0d0d0" stroke-width="1.5"/><text x="1495.6" y="634" font-size="14" fill="#d8d8d8" text-anchor="middle" >0,45</text><line x1="1548.8" y1="611" x2="1548.8" y2="618" stroke="#d0d0d0" stroke-width="1.5"/><text x="1548.8" y="634" font-size="14" fill="#d8d8d8" text-anchor="middle" >0,5</text><line x1="1601.9" y1="611" x2="1601.9" y2="618" stroke="#d0d0d0" stroke-width="1.5"/><text x="1601.9" y="634" font-size="14" fill="#d8d8d8" text-anchor="middle" >0,55</text><text x="1319" y="114" font-size="14" fill="#cfcfcf" text-anchor="middle" >CIE 1976 u'v'</text><rect x="1401" y="580" width="252" height="26" fill="#2c2c2c"/><text x="1402" y="601" font-size="19.5" fill="#f4f4f4" text-anchor="start" transform="translate(1402,0) scale(1.018,1) translate(-1402,0)">Gamut Coverage:&#160; 96,1%</text><rect x="1489.3" y="175.2" width="13" height="13" fill="#c00" stroke="rgba(255,255,255,.85)" stroke-width="1.8"/><circle cx="1486.4" cy="180.6" r="4.2" fill="#c00" stroke="#111" stroke-width="1.3"/><rect x="1143.2" y="142.8" width="13" height="13" fill="#0a0" stroke="rgba(255,255,255,.85)" stroke-width="1.8"/><circle cx="1151.5" cy="150.4" r="4.2" fill="#0a0" stroke="#111" stroke-width="1.3"/><rect x="1196.8" y="473.9" width="13" height="13" fill="#00a" stroke="rgba(255,255,255,.85)" stroke-width="1.8"/><circle cx="1207.8" cy="477.7" r="4.2" fill="#00a" stroke="#111" stroke-width="1.3"/><rect x="1157.4" y="230.4" width="13" height="13" fill="#0aa" stroke="rgba(255,255,255,.85)" stroke-width="1.8"/><circle cx="1166.6" cy="238.6" r="4.2" fill="#0aa" stroke="#111" stroke-width="1.3"/><rect x="1334.5" y="333.2" width="13" height="13" fill="#a0a" stroke="rgba(255,255,255,.85)" stroke-width="1.8"/><circle cx="1337.9" cy="339.1" r="4.2" fill="#a0a" stroke="#111" stroke-width="1.3"/><rect x="1227.1" y="150.6" width="13" height="13" fill="#aa0" stroke="rgba(255,255,255,.85)" stroke-width="1.8"/><circle cx="1231.4" cy="157.7" r="4.2" fill="#aa0" stroke="#111" stroke-width="1.3"/><rect x="1220.6" y="219.8" width="13" height="13" fill="none" stroke="#111" stroke-width="1.8"/><circle cx="1228.4" cy="227.3" r="4.2" fill="#fff" stroke="#111" stroke-width="1.3"/><rect x="356" y="686" width="249.5" height="180" fill="#232323" stroke="#8e8e8e" stroke-width="1.5"/><line x1="356" y1="704.4" x2="605.5" y2="704.4" stroke="#8e8e8e" stroke-width="1.5"/><line x1="350" y1="704.4" x2="356" y2="704.4" stroke="#dcdcdc" stroke-width="1.8"/><text x="349.5" y="709.4" font-size="14" fill="#dcdcdc" text-anchor="end" >104</text><line x1="356" y1="741.2" x2="605.5" y2="741.2" stroke="#8e8e8e" stroke-width="1.5"/><line x1="350" y1="741.2" x2="356" y2="741.2" stroke="#dcdcdc" stroke-width="1.8"/><text x="349.5" y="746.2" font-size="14" fill="#dcdcdc" text-anchor="end" >102</text><line x1="356" y1="776.9" x2="605.5" y2="776.9" stroke="#8e8e8e" stroke-width="1.5"/><line x1="350" y1="776.9" x2="356" y2="776.9" stroke="#dcdcdc" stroke-width="1.8"/><text x="349.5" y="781.9" font-size="14" fill="#dcdcdc" text-anchor="end" >100</text><line x1="356" y1="813.1" x2="605.5" y2="813.1" stroke="#8e8e8e" stroke-width="1.5"/><line x1="350" y1="813.1" x2="356" y2="813.1" stroke="#dcdcdc" stroke-width="1.8"/><text x="349.5" y="818.1" font-size="14" fill="#dcdcdc" text-anchor="end" >98</text><line x1="356" y1="848.8" x2="605.5" y2="848.8" stroke="#8e8e8e" stroke-width="1.5"/><line x1="350" y1="848.8" x2="356" y2="848.8" stroke="#dcdcdc" stroke-width="1.8"/><text x="349.5" y="853.8" font-size="14" fill="#dcdcdc" text-anchor="end" >96</text><line x1="356" y1="866" x2="356" y2="872" stroke="#d0d0d0" stroke-width="1.5"/><line x1="605.5" y1="866" x2="605.5" y2="872" stroke="#d0d0d0" stroke-width="1.5"/><text x="465" y="681" font-size="13.5" fill="#cfcfcf" text-anchor="middle" >RGB Balance</text><text x="480.5" y="883" font-size="13.5" fill="#d8d8d8" text-anchor="middle" >100W</text><rect x="380.5" y="763.5" width="65" height="102" fill="url(#rb)" stroke="#000" stroke-width="1.5"/><rect x="445.5" y="782.5" width="66" height="83" fill="url(#gb)" stroke="#000" stroke-width="1.5"/><rect x="511.5" y="761.5" width="67" height="104" fill="url(#bb)" stroke="#000" stroke-width="1.5"/></svg><div class="t" style="left:12.5px;top:687.6px;font-size:29.5px;color:#f2f2f2;transform:scaleX(1.026);transform-origin:0 0">Current Reading</div><div class="t" style="left:12.5px;top:761.5px;font-size:25px;color:#f2f2f2;transform:scaleX(1.02);transform-origin:0 0">x: 0,3128</div><div class="t" style="left:169px;top:761.5px;font-size:25px;color:#f2f2f2;transform:scaleX(1.02);transform-origin:0 0">y: 0,326</div><div class="t" style="left:12.5px;top:803px;font-size:25px;color:#f2f2f2;transform:scaleX(1.02);transform-origin:0 0">fL: 219,67</div><div class="t" style="left:12.5px;top:842.4px;font-size:25px;color:#f2f2f2;transform:scaleX(1.02);transform-origin:0 0">cd/m²: 752,64</div><svg class="a" style="left:0;top:0" width="1667" height="1001"><defs><clipPath id="xyc"><rect x="635" y="677" width="342" height="199.5"/></clipPath><linearGradient id="x0" gradientUnits="userSpaceOnUse" x1="805" y1="775" x2="977" y2="782.5"><stop offset="0" stop-color="#ffffff"/><stop offset="0.15" stop-color="#fff1f2"/><stop offset="0.35" stop-color="#ffe0e2"/><stop offset="0.6" stop-color="#ffcdd0"/><stop offset="1" stop-color="#ffb3b7"/></linearGradient><linearGradient id="x1" gradientUnits="userSpaceOnUse" x1="805" y1="775" x2="977" y2="797.6"><stop offset="0" stop-color="#ffffff"/><stop offset="0.15" stop-color="#fff0f2"/><stop offset="0.35" stop-color="#ffdde2"/><stop offset="0.6" stop-color="#ffc9d0"/><stop offset="1" stop-color="#ffadb9"/></linearGradient><linearGradient id="x2" gradientUnits="userSpaceOnUse" x1="805" y1="775" x2="977" y2="813.1"><stop offset="0" stop-color="#ffffff"/><stop offset="0.15" stop-color="#ffeef2"/><stop offset="0.35" stop-color="#ffdbe2"/><stop offset="0.6" stop-color="#ffc5d1"/><stop offset="1" stop-color="#ffa7ba"/></linearGradient><linearGradient id="x3" gradientUnits="userSpaceOnUse" x1="805" y1="775" x2="977" y2="829.2"><stop offset="0" stop-color="#ffffff"/><stop offset="0.15" stop-color="#ffedf2"/><stop offset="0.35" stop-color="#ffd8e3"/><stop offset="0.6" stop-color="#ffc1d2"/><stop offset="1" stop-color="#ffa1bb"/></linearGradient><linearGradient id="x4" gradientUnits="userSpaceOnUse" x1="805" y1="775" x2="977" y2="846.2"><stop offset="0" stop-color="#ffffff"/><stop offset="0.15" stop-color="#ffecf2"/><stop offset="0.35" stop-color="#ffd5e3"/><stop offset="0.6" stop-color="#ffbcd2"/><stop offset="1" stop-color="#ff9bbc"/></linearGradient><linearGradient id="x5" gradientUnits="userSpaceOnUse" x1="805" y1="775" x2="977" y2="864.5"><stop offset="0" stop-color="#ffffff"/><stop offset="0.15" stop-color="#ffeaf2"/><stop offset="0.35" stop-color="#ffd2e3"/><stop offset="0.6" stop-color="#ffb8d3"/><stop offset="1" stop-color="#ff95bd"/></linearGradient><linearGradient id="x6" gradientUnits="userSpaceOnUse" x1="805" y1="775" x2="964.3" y2="876.5"><stop offset="0" stop-color="#ffffff"/><stop offset="0.15" stop-color="#ffeaf3"/><stop offset="0.35" stop-color="#ffd2e5"/><stop offset="0.6" stop-color="#ffb7d6"/><stop offset="1" stop-color="#ff94c2"/></linearGradient><linearGradient id="x7" gradientUnits="userSpaceOnUse" x1="805" y1="775" x2="937.3" y2="876.5"><stop offset="0" stop-color="#ffffff"/><stop offset="0.15" stop-color="#ffecf5"/><stop offset="0.35" stop-color="#ffd6ea"/><stop offset="0.6" stop-color="#ffbddd"/><stop offset="1" stop-color="#ff9bcb"/></linearGradient><linearGradient id="x8" gradientUnits="userSpaceOnUse" x1="805" y1="775" x2="915.8" y2="876.5"><stop offset="0" stop-color="#ffffff"/><stop offset="0.15" stop-color="#ffeef7"/><stop offset="0.35" stop-color="#ffd9ed"/><stop offset="0.6" stop-color="#ffc2e2"/><stop offset="1" stop-color="#ffa2d3"/></linearGradient><linearGradient id="x9" gradientUnits="userSpaceOnUse" x1="805" y1="775" x2="898" y2="876.5"><stop offset="0" stop-color="#ffffff"/><stop offset="0.15" stop-color="#ffeff8"/><stop offset="0.35" stop-color="#ffdcf0"/><stop offset="0.6" stop-color="#ffc6e7"/><stop offset="1" stop-color="#ffa7da"/></linearGradient><linearGradient id="x10" gradientUnits="userSpaceOnUse" x1="805" y1="775" x2="882.9" y2="876.5"><stop offset="0" stop-color="#ffffff"/><stop offset="0.15" stop-color="#fff0f9"/><stop offset="0.35" stop-color="#ffdef3"/><stop offset="0.6" stop-color="#ffcaeb"/><stop offset="1" stop-color="#fface0"/></linearGradient><linearGradient id="x11" gradientUnits="userSpaceOnUse" x1="805" y1="775" x2="869.7" y2="876.5"><stop offset="0" stop-color="#ffffff"/><stop offset="0.15" stop-color="#fff1fa"/><stop offset="0.35" stop-color="#ffe0f5"/><stop offset="0.6" stop-color="#ffcdee"/><stop offset="1" stop-color="#ffb1e5"/></linearGradient><linearGradient id="x12" gradientUnits="userSpaceOnUse" x1="805" y1="775" x2="857.8" y2="876.5"><stop offset="0" stop-color="#ffffff"/><stop offset="0.15" stop-color="#fff2fb"/><stop offset="0.35" stop-color="#ffe2f7"/><stop offset="0.6" stop-color="#ffd0f2"/><stop offset="1" stop-color="#ffb5ea"/></linearGradient><linearGradient id="x13" gradientUnits="userSpaceOnUse" x1="805" y1="775" x2="847" y2="876.5"><stop offset="0" stop-color="#ffffff"/><stop offset="0.15" stop-color="#fff3fc"/><stop offset="0.35" stop-color="#ffe4f9"/><stop offset="0.6" stop-color="#ffd3f5"/><stop offset="1" stop-color="#ffb9ef"/></linearGradient><linearGradient id="x14" gradientUnits="userSpaceOnUse" x1="805" y1="775" x2="837" y2="876.5"><stop offset="0" stop-color="#ffffff"/><stop offset="0.15" stop-color="#fff4fd"/><stop offset="0.35" stop-color="#ffe6fb"/><stop offset="0.6" stop-color="#ffd5f8"/><stop offset="1" stop-color="#ffbdf3"/></linearGradient><linearGradient id="x15" gradientUnits="userSpaceOnUse" x1="805" y1="775" x2="827.5" y2="876.5"><stop offset="0" stop-color="#ffffff"/><stop offset="0.15" stop-color="#fff5fe"/><stop offset="0.35" stop-color="#ffe7fc"/><stop offset="0.6" stop-color="#ffd8fa"/><stop offset="1" stop-color="#ffc1f8"/></linearGradient><linearGradient id="x16" gradientUnits="userSpaceOnUse" x1="805" y1="775" x2="818.4" y2="876.5"><stop offset="0" stop-color="#ffffff"/><stop offset="0.15" stop-color="#fff5ff"/><stop offset="0.35" stop-color="#ffe9fe"/><stop offset="0.6" stop-color="#ffdafd"/><stop offset="1" stop-color="#ffc4fc"/></linearGradient><linearGradient id="x17" gradientUnits="userSpaceOnUse" x1="805" y1="775" x2="809.4" y2="876.5"><stop offset="0" stop-color="#ffffff"/><stop offset="0.15" stop-color="#fff6ff"/><stop offset="0.35" stop-color="#feeaff"/><stop offset="0.6" stop-color="#fedcff"/><stop offset="1" stop-color="#fdc7ff"/></linearGradient><linearGradient id="x18" gradientUnits="userSpaceOnUse" x1="805" y1="775" x2="800.6" y2="876.5"><stop offset="0" stop-color="#ffffff"/><stop offset="0.15" stop-color="#fef6ff"/><stop offset="0.35" stop-color="#fdeaff"/><stop offset="0.6" stop-color="#fbdcff"/><stop offset="1" stop-color="#f9c7ff"/></linearGradient><linearGradient id="x19" gradientUnits="userSpaceOnUse" x1="805" y1="775" x2="791.6" y2="876.5"><stop offset="0" stop-color="#ffffff"/><stop offset="0.15" stop-color="#fdf6ff"/><stop offset="0.35" stop-color="#fbeaff"/><stop offset="0.6" stop-color="#f9dcff"/><stop offset="1" stop-color="#f5c7ff"/></linearGradient><linearGradient id="x20" gradientUnits="userSpaceOnUse" x1="805" y1="775" x2="782.5" y2="876.5"><stop offset="0" stop-color="#ffffff"/><stop offset="0.15" stop-color="#fdf6ff"/><stop offset="0.35" stop-color="#faeaff"/><stop offset="0.6" stop-color="#f6dcff"/><stop offset="1" stop-color="#f0c7ff"/></linearGradient><linearGradient id="x21" gradientUnits="userSpaceOnUse" x1="805" y1="775" x2="773" y2="876.5"><stop offset="0" stop-color="#ffffff"/><stop offset="0.15" stop-color="#fcf6ff"/><stop offset="0.35" stop-color="#f8eaff"/><stop offset="0.6" stop-color="#f3dcff"/><stop offset="1" stop-color="#ecc8ff"/></linearGradient><linearGradient id="x22" gradientUnits="userSpaceOnUse" x1="805" y1="775" x2="763" y2="876.5"><stop offset="0" stop-color="#ffffff"/><stop offset="0.15" stop-color="#fbf6ff"/><stop offset="0.35" stop-color="#f6eaff"/><stop offset="0.6" stop-color="#f0ddff"/><stop offset="1" stop-color="#e7c8ff"/></linearGradient><linearGradient id="x23" gradientUnits="userSpaceOnUse" x1="805" y1="775" x2="752.2" y2="876.5"><stop offset="0" stop-color="#ffffff"/><stop offset="0.15" stop-color="#faf6ff"/><stop offset="0.35" stop-color="#f4eaff"/><stop offset="0.6" stop-color="#edddff"/><stop offset="1" stop-color="#e2c8ff"/></linearGradient><linearGradient id="x24" gradientUnits="userSpaceOnUse" x1="805" y1="775" x2="740.3" y2="876.5"><stop offset="0" stop-color="#ffffff"/><stop offset="0.15" stop-color="#f9f6ff"/><stop offset="0.35" stop-color="#f2eaff"/><stop offset="0.6" stop-color="#e9ddff"/><stop offset="1" stop-color="#dcc9ff"/></linearGradient><linearGradient id="x25" gradientUnits="userSpaceOnUse" x1="805" y1="775" x2="727.1" y2="876.5"><stop offset="0" stop-color="#ffffff"/><stop offset="0.15" stop-color="#f8f6ff"/><stop offset="0.35" stop-color="#f0ebff"/><stop offset="0.6" stop-color="#e5ddff"/><stop offset="1" stop-color="#d6c9ff"/></linearGradient><linearGradient id="x26" gradientUnits="userSpaceOnUse" x1="805" y1="775" x2="712" y2="876.5"><stop offset="0" stop-color="#ffffff"/><stop offset="0.15" stop-color="#f7f6ff"/><stop offset="0.35" stop-color="#edebff"/><stop offset="0.6" stop-color="#e1ddff"/><stop offset="1" stop-color="#cfc9ff"/></linearGradient><linearGradient id="x27" gradientUnits="userSpaceOnUse" x1="805" y1="775" x2="694.2" y2="876.5"><stop offset="0" stop-color="#ffffff"/><stop offset="0.15" stop-color="#f6f6ff"/><stop offset="0.35" stop-color="#eaebff"/><stop offset="0.6" stop-color="#dcddff"/><stop offset="1" stop-color="#c7caff"/></linearGradient><linearGradient id="x28" gradientUnits="userSpaceOnUse" x1="805" y1="775" x2="672.7" y2="876.5"><stop offset="0" stop-color="#ffffff"/><stop offset="0.15" stop-color="#f4f6ff"/><stop offset="0.35" stop-color="#e6ebff"/><stop offset="0.6" stop-color="#d5deff"/><stop offset="1" stop-color="#becaff"/></linearGradient><linearGradient id="x29" gradientUnits="userSpaceOnUse" x1="805" y1="775" x2="645.7" y2="876.5"><stop offset="0" stop-color="#ffffff"/><stop offset="0.15" stop-color="#f2f6ff"/><stop offset="0.35" stop-color="#e1ebff"/><stop offset="0.6" stop-color="#cedeff"/><stop offset="1" stop-color="#b2cbff"/></linearGradient><linearGradient id="x30" gradientUnits="userSpaceOnUse" x1="805" y1="775" x2="635" y2="863.5"><stop offset="0" stop-color="#ffffff"/><stop offset="0.15" stop-color="#f1f7ff"/><stop offset="0.35" stop-color="#dfedff"/><stop offset="0.6" stop-color="#cbe2ff"/><stop offset="1" stop-color="#add1ff"/></linearGradient><linearGradient id="x31" gradientUnits="userSpaceOnUse" x1="805" y1="775" x2="635" y2="845.4"><stop offset="0" stop-color="#ffffff"/><stop offset="0.15" stop-color="#f1f9ff"/><stop offset="0.35" stop-color="#dff1ff"/><stop offset="0.6" stop-color="#cbe8ff"/><stop offset="1" stop-color="#acdaff"/></linearGradient><linearGradient id="x32" gradientUnits="userSpaceOnUse" x1="805" y1="775" x2="635" y2="828.6"><stop offset="0" stop-color="#ffffff"/><stop offset="0.15" stop-color="#f1faff"/><stop offset="0.35" stop-color="#dff4ff"/><stop offset="0.6" stop-color="#caedff"/><stop offset="1" stop-color="#abe3ff"/></linearGradient><linearGradient id="x33" gradientUnits="userSpaceOnUse" x1="805" y1="775" x2="635" y2="812.7"><stop offset="0" stop-color="#ffffff"/><stop offset="0.15" stop-color="#f1fcff"/><stop offset="0.35" stop-color="#dff8ff"/><stop offset="0.6" stop-color="#caf3ff"/><stop offset="1" stop-color="#abebff"/></linearGradient><linearGradient id="x34" gradientUnits="userSpaceOnUse" x1="805" y1="775" x2="635" y2="797.4"><stop offset="0" stop-color="#ffffff"/><stop offset="0.15" stop-color="#f1fdff"/><stop offset="0.35" stop-color="#e0fbff"/><stop offset="0.6" stop-color="#caf8ff"/><stop offset="1" stop-color="#aaf4ff"/></linearGradient><linearGradient id="x35" gradientUnits="userSpaceOnUse" x1="805" y1="775" x2="635" y2="782.4"><stop offset="0" stop-color="#ffffff"/><stop offset="0.15" stop-color="#f1feff"/><stop offset="0.35" stop-color="#e0feff"/><stop offset="0.6" stop-color="#cafdff"/><stop offset="1" stop-color="#aafcff"/></linearGradient><linearGradient id="x36" gradientUnits="userSpaceOnUse" x1="805" y1="775" x2="635" y2="767.6"><stop offset="0" stop-color="#ffffff"/><stop offset="0.15" stop-color="#f1fffe"/><stop offset="0.35" stop-color="#defffd"/><stop offset="0.6" stop-color="#c8fffc"/><stop offset="1" stop-color="#a6fffa"/></linearGradient><linearGradient id="x37" gradientUnits="userSpaceOnUse" x1="805" y1="775" x2="635" y2="752.6"><stop offset="0" stop-color="#ffffff"/><stop offset="0.15" stop-color="#effffd"/><stop offset="0.35" stop-color="#dbfffa"/><stop offset="0.6" stop-color="#c3fff7"/><stop offset="1" stop-color="#a0fff2"/></linearGradient><linearGradient id="x38" gradientUnits="userSpaceOnUse" x1="805" y1="775" x2="635" y2="737.3"><stop offset="0" stop-color="#ffffff"/><stop offset="0.15" stop-color="#eefffb"/><stop offset="0.35" stop-color="#d9fff7"/><stop offset="0.6" stop-color="#bffff2"/><stop offset="1" stop-color="#9affea"/></linearGradient><linearGradient id="x39" gradientUnits="userSpaceOnUse" x1="805" y1="775" x2="635" y2="721.4"><stop offset="0" stop-color="#ffffff"/><stop offset="0.15" stop-color="#edfffa"/><stop offset="0.35" stop-color="#d6fff4"/><stop offset="0.6" stop-color="#bbffec"/><stop offset="1" stop-color="#94ffe2"/></linearGradient><linearGradient id="x40" gradientUnits="userSpaceOnUse" x1="805" y1="775" x2="635" y2="704.6"><stop offset="0" stop-color="#ffffff"/><stop offset="0.15" stop-color="#ecfff9"/><stop offset="0.35" stop-color="#d3fff1"/><stop offset="0.6" stop-color="#b7ffe7"/><stop offset="1" stop-color="#8effda"/></linearGradient><linearGradient id="x41" gradientUnits="userSpaceOnUse" x1="805" y1="775" x2="635" y2="686.5"><stop offset="0" stop-color="#ffffff"/><stop offset="0.15" stop-color="#eafff7"/><stop offset="0.35" stop-color="#d0ffed"/><stop offset="0.6" stop-color="#b2ffe2"/><stop offset="1" stop-color="#88ffd1"/></linearGradient><linearGradient id="x42" gradientUnits="userSpaceOnUse" x1="805" y1="775" x2="651.2" y2="677"><stop offset="0" stop-color="#ffffff"/><stop offset="0.15" stop-color="#ebfff6"/><stop offset="0.35" stop-color="#d1ffeb"/><stop offset="0.6" stop-color="#b4ffdf"/><stop offset="1" stop-color="#8bffcd"/></linearGradient><linearGradient id="x43" gradientUnits="userSpaceOnUse" x1="805" y1="775" x2="677.3" y2="677"><stop offset="0" stop-color="#ffffff"/><stop offset="0.15" stop-color="#edfff6"/><stop offset="0.35" stop-color="#d6ffeb"/><stop offset="0.6" stop-color="#bcffdf"/><stop offset="1" stop-color="#96ffcc"/></linearGradient><linearGradient id="x44" gradientUnits="userSpaceOnUse" x1="805" y1="775" x2="698.1" y2="677"><stop offset="0" stop-color="#ffffff"/><stop offset="0.15" stop-color="#eefff6"/><stop offset="0.35" stop-color="#d9ffeb"/><stop offset="0.6" stop-color="#c1ffde"/><stop offset="1" stop-color="#9fffcc"/></linearGradient><linearGradient id="x45" gradientUnits="userSpaceOnUse" x1="805" y1="775" x2="715.2" y2="677"><stop offset="0" stop-color="#ffffff"/><stop offset="0.15" stop-color="#f0fff6"/><stop offset="0.35" stop-color="#dcffeb"/><stop offset="0.6" stop-color="#c6ffde"/><stop offset="1" stop-color="#a6ffcc"/></linearGradient><linearGradient id="x46" gradientUnits="userSpaceOnUse" x1="805" y1="775" x2="729.8" y2="677"><stop offset="0" stop-color="#ffffff"/><stop offset="0.15" stop-color="#f1fff6"/><stop offset="0.35" stop-color="#dfffeb"/><stop offset="0.6" stop-color="#caffde"/><stop offset="1" stop-color="#acffcc"/></linearGradient><linearGradient id="x47" gradientUnits="userSpaceOnUse" x1="805" y1="775" x2="742.6" y2="677"><stop offset="0" stop-color="#ffffff"/><stop offset="0.15" stop-color="#f2fff6"/><stop offset="0.35" stop-color="#e1ffeb"/><stop offset="0.6" stop-color="#ceffde"/><stop offset="1" stop-color="#b2ffcc"/></linearGradient><linearGradient id="x48" gradientUnits="userSpaceOnUse" x1="805" y1="775" x2="754" y2="677"><stop offset="0" stop-color="#ffffff"/><stop offset="0.15" stop-color="#f3fff6"/><stop offset="0.35" stop-color="#e3ffeb"/><stop offset="0.6" stop-color="#d1ffde"/><stop offset="1" stop-color="#b7ffcb"/></linearGradient><linearGradient id="x49" gradientUnits="userSpaceOnUse" x1="805" y1="775" x2="764.4" y2="677"><stop offset="0" stop-color="#ffffff"/><stop offset="0.15" stop-color="#f4fff6"/><stop offset="0.35" stop-color="#e5ffeb"/><stop offset="0.6" stop-color="#d4ffde"/><stop offset="1" stop-color="#bcffcb"/></linearGradient><linearGradient id="x50" gradientUnits="userSpaceOnUse" x1="805" y1="775" x2="774.1" y2="677"><stop offset="0" stop-color="#ffffff"/><stop offset="0.15" stop-color="#f4fff6"/><stop offset="0.35" stop-color="#e7ffeb"/><stop offset="0.6" stop-color="#d7ffde"/><stop offset="1" stop-color="#c0ffcb"/></linearGradient><linearGradient id="x51" gradientUnits="userSpaceOnUse" x1="805" y1="775" x2="783.3" y2="677"><stop offset="0" stop-color="#ffffff"/><stop offset="0.15" stop-color="#f5fff6"/><stop offset="0.35" stop-color="#e8ffeb"/><stop offset="0.6" stop-color="#daffde"/><stop offset="1" stop-color="#c4ffcb"/></linearGradient><linearGradient id="x52" gradientUnits="userSpaceOnUse" x1="805" y1="775" x2="792.1" y2="677"><stop offset="0" stop-color="#ffffff"/><stop offset="0.15" stop-color="#f6fff6"/><stop offset="0.35" stop-color="#eaffeb"/><stop offset="0.6" stop-color="#dcffde"/><stop offset="1" stop-color="#c8ffcb"/></linearGradient><linearGradient id="x53" gradientUnits="userSpaceOnUse" x1="805" y1="775" x2="800.7" y2="677"><stop offset="0" stop-color="#ffffff"/><stop offset="0.15" stop-color="#f6fff6"/><stop offset="0.35" stop-color="#ecffeb"/><stop offset="0.6" stop-color="#dfffde"/><stop offset="1" stop-color="#ccffcb"/></linearGradient><linearGradient id="x54" gradientUnits="userSpaceOnUse" x1="805" y1="775" x2="809.3" y2="677"><stop offset="0" stop-color="#ffffff"/><stop offset="0.15" stop-color="#f7fff6"/><stop offset="0.35" stop-color="#edffeb"/><stop offset="0.6" stop-color="#e1ffde"/><stop offset="1" stop-color="#d0ffcb"/></linearGradient><linearGradient id="x55" gradientUnits="userSpaceOnUse" x1="805" y1="775" x2="817.9" y2="677"><stop offset="0" stop-color="#ffffff"/><stop offset="0.15" stop-color="#f8fff6"/><stop offset="0.35" stop-color="#efffeb"/><stop offset="0.6" stop-color="#e4ffde"/><stop offset="1" stop-color="#d4ffca"/></linearGradient><linearGradient id="x56" gradientUnits="userSpaceOnUse" x1="805" y1="775" x2="826.7" y2="677"><stop offset="0" stop-color="#ffffff"/><stop offset="0.15" stop-color="#f9fff6"/><stop offset="0.35" stop-color="#f0ffeb"/><stop offset="0.6" stop-color="#e7ffde"/><stop offset="1" stop-color="#d8ffca"/></linearGradient><linearGradient id="x57" gradientUnits="userSpaceOnUse" x1="805" y1="775" x2="835.9" y2="677"><stop offset="0" stop-color="#ffffff"/><stop offset="0.15" stop-color="#f9fff6"/><stop offset="0.35" stop-color="#f2ffeb"/><stop offset="0.6" stop-color="#e9ffde"/><stop offset="1" stop-color="#dcffca"/></linearGradient><linearGradient id="x58" gradientUnits="userSpaceOnUse" x1="805" y1="775" x2="845.6" y2="677"><stop offset="0" stop-color="#ffffff"/><stop offset="0.15" stop-color="#fafff6"/><stop offset="0.35" stop-color="#f4ffeb"/><stop offset="0.6" stop-color="#ecffde"/><stop offset="1" stop-color="#e1ffca"/></linearGradient><linearGradient id="x59" gradientUnits="userSpaceOnUse" x1="805" y1="775" x2="856" y2="677"><stop offset="0" stop-color="#ffffff"/><stop offset="0.15" stop-color="#fbfff6"/><stop offset="0.35" stop-color="#f6ffeb"/><stop offset="0.6" stop-color="#efffde"/><stop offset="1" stop-color="#e6ffca"/></linearGradient><linearGradient id="x60" gradientUnits="userSpaceOnUse" x1="805" y1="775" x2="867.4" y2="677"><stop offset="0" stop-color="#ffffff"/><stop offset="0.15" stop-color="#fcfff6"/><stop offset="0.35" stop-color="#f8ffeb"/><stop offset="0.6" stop-color="#f3ffde"/><stop offset="1" stop-color="#ecffca"/></linearGradient><linearGradient id="x61" gradientUnits="userSpaceOnUse" x1="805" y1="775" x2="880.2" y2="677"><stop offset="0" stop-color="#ffffff"/><stop offset="0.15" stop-color="#fdfff6"/><stop offset="0.35" stop-color="#faffeb"/><stop offset="0.6" stop-color="#f7ffde"/><stop offset="1" stop-color="#f2ffc9"/></linearGradient><linearGradient id="x62" gradientUnits="userSpaceOnUse" x1="805" y1="775" x2="894.8" y2="677"><stop offset="0" stop-color="#ffffff"/><stop offset="0.15" stop-color="#fefff6"/><stop offset="0.35" stop-color="#fdffeb"/><stop offset="0.6" stop-color="#fbffdd"/><stop offset="1" stop-color="#f9ffc9"/></linearGradient><linearGradient id="x63" gradientUnits="userSpaceOnUse" x1="805" y1="775" x2="911.9" y2="677"><stop offset="0" stop-color="#ffffff"/><stop offset="0.15" stop-color="#fffff6"/><stop offset="0.35" stop-color="#fffeea"/><stop offset="0.6" stop-color="#fffddc"/><stop offset="1" stop-color="#fffcc7"/></linearGradient><linearGradient id="x64" gradientUnits="userSpaceOnUse" x1="805" y1="775" x2="932.7" y2="677"><stop offset="0" stop-color="#ffffff"/><stop offset="0.15" stop-color="#fffdf4"/><stop offset="0.35" stop-color="#fffae7"/><stop offset="0.6" stop-color="#fff7d6"/><stop offset="1" stop-color="#fff2bf"/></linearGradient><linearGradient id="x65" gradientUnits="userSpaceOnUse" x1="805" y1="775" x2="958.8" y2="677"><stop offset="0" stop-color="#ffffff"/><stop offset="0.15" stop-color="#fffbf2"/><stop offset="0.35" stop-color="#fff6e2"/><stop offset="0.6" stop-color="#fff0d0"/><stop offset="1" stop-color="#ffe7b5"/></linearGradient><linearGradient id="x66" gradientUnits="userSpaceOnUse" x1="805" y1="775" x2="977" y2="685.5"><stop offset="0" stop-color="#ffffff"/><stop offset="0.15" stop-color="#fff9f1"/><stop offset="0.35" stop-color="#fff1e0"/><stop offset="0.6" stop-color="#ffe8cc"/><stop offset="1" stop-color="#ffdbb0"/></linearGradient><linearGradient id="x67" gradientUnits="userSpaceOnUse" x1="805" y1="775" x2="977" y2="703.8"><stop offset="0" stop-color="#ffffff"/><stop offset="0.15" stop-color="#fff7f1"/><stop offset="0.35" stop-color="#ffeee0"/><stop offset="0.6" stop-color="#ffe3cc"/><stop offset="1" stop-color="#ffd3b1"/></linearGradient><linearGradient id="x68" gradientUnits="userSpaceOnUse" x1="805" y1="775" x2="977" y2="720.8"><stop offset="0" stop-color="#ffffff"/><stop offset="0.15" stop-color="#fff6f1"/><stop offset="0.35" stop-color="#ffebe0"/><stop offset="0.6" stop-color="#ffdecd"/><stop offset="1" stop-color="#ffccb3"/></linearGradient><linearGradient id="x69" gradientUnits="userSpaceOnUse" x1="805" y1="775" x2="977" y2="736.9"><stop offset="0" stop-color="#ffffff"/><stop offset="0.15" stop-color="#fff5f1"/><stop offset="0.35" stop-color="#ffe8e1"/><stop offset="0.6" stop-color="#ffd9ce"/><stop offset="1" stop-color="#ffc5b4"/></linearGradient><linearGradient id="x70" gradientUnits="userSpaceOnUse" x1="805" y1="775" x2="977" y2="752.4"><stop offset="0" stop-color="#ffffff"/><stop offset="0.15" stop-color="#fff3f1"/><stop offset="0.35" stop-color="#ffe5e1"/><stop offset="0.6" stop-color="#ffd5ce"/><stop offset="1" stop-color="#ffbfb5"/></linearGradient><linearGradient id="x71" gradientUnits="userSpaceOnUse" x1="805" y1="775" x2="977" y2="767.5"><stop offset="0" stop-color="#ffffff"/><stop offset="0.15" stop-color="#fff2f2"/><stop offset="0.35" stop-color="#ffe2e1"/><stop offset="0.6" stop-color="#ffd1cf"/><stop offset="1" stop-color="#ffb9b6"/></linearGradient></defs><g clip-path="url(#xyc)"><polygon points="805 775 1404.2 743.6 1399.2 858.5" fill="url(#x0)"/><polygon points="805 775 1404.6 795.9 1389.6 910" fill="url(#x1)"/><polygon points="805 775 1400.5 848.1 1375.6 960.4" fill="url(#x2)"/><polygon points="805 775 1391.9 899.7 1357.3 1009.4" fill="url(#x3)"/><polygon points="805 775 1378.8 950.4 1334.8 1056.7" fill="url(#x4)"/><polygon points="805 775 1361.3 999.8 1308.2 1101.8" fill="url(#x5)"/><polygon points="805 775 1339.6 1047.4 1277.8 1144.4" fill="url(#x6)"/><polygon points="805 775 1313.8 1093 1243.8 1184.2" fill="url(#x7)"/><polygon points="805 775 1284.2 1136.1 1206.5 1220.9" fill="url(#x8)"/><polygon points="805 775 1250.9 1176.5 1166.1 1254.2" fill="url(#x9)"/><polygon points="805 775 1214.2 1213.8 1123 1283.8" fill="url(#x10)"/><polygon points="805 775 1174.4 1247.8 1077.4 1309.6" fill="url(#x11)"/><polygon points="805 775 1131.8 1278.2 1029.8 1331.3" fill="url(#x12)"/><polygon points="805 775 1086.7 1304.8 980.4 1348.8" fill="url(#x13)"/><polygon points="805 775 1039.4 1327.3 929.7 1361.9" fill="url(#x14)"/><polygon points="805 775 990.4 1345.6 878.1 1370.5" fill="url(#x15)"/><polygon points="805 775 940 1359.6 825.9 1374.6" fill="url(#x16)"/><polygon points="805 775 888.5 1369.2 773.6 1374.2" fill="url(#x17)"/><polygon points="805 775 836.4 1374.2 721.5 1369.2" fill="url(#x18)"/><polygon points="805 775 784.1 1374.6 670 1359.6" fill="url(#x19)"/><polygon points="805 775 731.9 1370.5 619.6 1345.6" fill="url(#x20)"/><polygon points="805 775 680.3 1361.9 570.6 1327.3" fill="url(#x21)"/><polygon points="805 775 629.6 1348.8 523.3 1304.8" fill="url(#x22)"/><polygon points="805 775 580.2 1331.3 478.2 1278.2" fill="url(#x23)"/><polygon points="805 775 532.6 1309.6 435.6 1247.8" fill="url(#x24)"/><polygon points="805 775 487 1283.8 395.8 1213.8" fill="url(#x25)"/><polygon points="805 775 443.9 1254.2 359.1 1176.5" fill="url(#x26)"/><polygon points="805 775 403.5 1220.9 325.8 1136.1" fill="url(#x27)"/><polygon points="805 775 366.2 1184.2 296.2 1093" fill="url(#x28)"/><polygon points="805 775 332.2 1144.4 270.4 1047.4" fill="url(#x29)"/><polygon points="805 775 301.8 1101.8 248.7 999.8" fill="url(#x30)"/><polygon points="805 775 275.2 1056.7 231.2 950.4" fill="url(#x31)"/><polygon points="805 775 252.7 1009.4 218.1 899.7" fill="url(#x32)"/><polygon points="805 775 234.4 960.4 209.5 848.1" fill="url(#x33)"/><polygon points="805 775 220.4 910 205.4 795.9" fill="url(#x34)"/><polygon points="805 775 210.8 858.5 205.8 743.6" fill="url(#x35)"/><polygon points="805 775 205.8 806.4 210.8 691.5" fill="url(#x36)"/><polygon points="805 775 205.4 754.1 220.4 640" fill="url(#x37)"/><polygon points="805 775 209.5 701.9 234.4 589.6" fill="url(#x38)"/><polygon points="805 775 218.1 650.3 252.7 540.6" fill="url(#x39)"/><polygon points="805 775 231.2 599.6 275.2 493.3" fill="url(#x40)"/><polygon points="805 775 248.7 550.2 301.8 448.2" fill="url(#x41)"/><polygon points="805 775 270.4 502.6 332.2 405.6" fill="url(#x42)"/><polygon points="805 775 296.2 457 366.2 365.8" fill="url(#x43)"/><polygon points="805 775 325.8 413.9 403.5 329.1" fill="url(#x44)"/><polygon points="805 775 359.1 373.5 443.9 295.8" fill="url(#x45)"/><polygon points="805 775 395.8 336.2 487 266.2" fill="url(#x46)"/><polygon points="805 775 435.6 302.2 532.6 240.4" fill="url(#x47)"/><polygon points="805 775 478.2 271.8 580.2 218.7" fill="url(#x48)"/><polygon points="805 775 523.3 245.2 629.6 201.2" fill="url(#x49)"/><polygon points="805 775 570.6 222.7 680.3 188.1" fill="url(#x50)"/><polygon points="805 775 619.6 204.4 731.9 179.5" fill="url(#x51)"/><polygon points="805 775 670 190.4 784.1 175.4" fill="url(#x52)"/><polygon points="805 775 721.5 180.8 836.4 175.8" fill="url(#x53)"/><polygon points="805 775 773.6 175.8 888.5 180.8" fill="url(#x54)"/><polygon points="805 775 825.9 175.4 940 190.4" fill="url(#x55)"/><polygon points="805 775 878.1 179.5 990.4 204.4" fill="url(#x56)"/><polygon points="805 775 929.7 188.1 1039.4 222.7" fill="url(#x57)"/><polygon points="805 775 980.4 201.2 1086.7 245.2" fill="url(#x58)"/><polygon points="805 775 1029.8 218.7 1131.8 271.8" fill="url(#x59)"/><polygon points="805 775 1077.4 240.4 1174.4 302.2" fill="url(#x60)"/><polygon points="805 775 1123 266.2 1214.2 336.2" fill="url(#x61)"/><polygon points="805 775 1166.1 295.8 1250.9 373.5" fill="url(#x62)"/><polygon points="805 775 1206.5 329.1 1284.2 413.9" fill="url(#x63)"/><polygon points="805 775 1243.8 365.8 1313.8 457" fill="url(#x64)"/><polygon points="805 775 1277.8 405.6 1339.6 502.6" fill="url(#x65)"/><polygon points="805 775 1308.2 448.2 1361.3 550.2" fill="url(#x66)"/><polygon points="805 775 1334.8 493.3 1378.8 599.6" fill="url(#x67)"/><polygon points="805 775 1357.3 540.6 1391.9 650.3" fill="url(#x68)"/><polygon points="805 775 1375.6 589.6 1400.5 701.9" fill="url(#x69)"/><polygon points="805 775 1389.6 640 1404.6 754.1" fill="url(#x70)"/><polygon points="805 775 1399.2 691.5 1404.2 806.4" fill="url(#x71)"/></g><rect x="635.5" y="677.5" width="341" height="198.5" fill="none" stroke="rgba(160,160,160,.6)" stroke-width="1"/><text x="806" y="672" font-size="13.5" fill="#cfcfcf" text-anchor="middle">CIE 1931 xy</text><circle cx="807.5" cy="784.5" r="5" fill="#888" opacity=".5"/><rect x="798.5" y="769" width="13" height="13" fill="none" stroke="#000" stroke-width="2.2"/><circle cx="806" cy="787.5" r="5" fill="#fff" stroke="#222" stroke-width="1.2"/></svg><div class="a" style="left:993px;top:661px;width:653px;height:225px;background:#2d2d2d;border:1px solid #000;border-bottom:none"></div><div class="a" style="left:994px;top:662px;width:635px;height:17px;background:#2f2f2f"></div><div class="a" style="left:994px;top:679px;width:635px;height:17px;background:#141414"></div><div class="t" style="left:1126px;top:671.4px;width:100px;margin-left:-50px;text-align:center;font-size:18.4px;color:#f0f0f0;transform:scaleX(.865)">White</div><div class="t" style="left:1199px;top:671.4px;width:100px;margin-left:-50px;text-align:center;font-size:18.4px;color:#f0f0f0;transform:scaleX(.865)">Red</div><div class="t" style="left:1272px;top:671.4px;width:100px;margin-left:-50px;text-align:center;font-size:18.4px;color:#f0f0f0;transform:scaleX(.865)">Green</div><div class="t" style="left:1345px;top:671.4px;width:100px;margin-left:-50px;text-align:center;font-size:18.4px;color:#f0f0f0;transform:scaleX(.865)">Blue</div><div class="t" style="left:1418.5px;top:671.4px;width:100px;margin-left:-50px;text-align:center;font-size:18.4px;color:#f0f0f0;transform:scaleX(.865)">Cyan</div><div class="t" style="left:1496.5px;top:671.4px;width:100px;margin-left:-50px;text-align:center;font-size:18.4px;color:#f0f0f0;transform:scaleX(.865)">Magenta</div><div class="t" style="left:1574px;top:671.4px;width:100px;margin-left:-50px;text-align:center;font-size:18.4px;color:#f0f0f0;transform:scaleX(.865)">Yellow</div><div class="a" style="left:994px;top:696px;width:633px;height:170px;overflow:hidden"><div class="a" style="left:0;top:0px;width:635px;height:31.2px;background:linear-gradient(#3e3e3e,#353535)"></div><div class="t" style="left:13px;top:6.2px;font-size:20.3px;font-weight:bold;color:#f2f2f2;transform:scaleX(.786);transform-origin:0 0">x: CIE31</div><div class="t" style="left:98px;top:6.2px;font-size:20.3px;color:#f2f2f2;transform:scaleX(.798);transform-origin:0 0">0,3132</div><div class="t" style="left:175.5px;top:6.2px;font-size:20.3px;color:#f2f2f2;transform:scaleX(.798);transform-origin:0 0">0,6349</div><div class="t" style="left:244px;top:6.2px;font-size:20.3px;color:#f2f2f2;transform:scaleX(.798);transform-origin:0 0">0,3015</div><div class="t" style="left:322px;top:6.2px;font-size:20.3px;color:#f2f2f2;transform:scaleX(.798);transform-origin:0 0">0,1540</div><div class="t" style="left:390.5px;top:6.2px;font-size:20.3px;color:#f2f2f2;transform:scaleX(.798);transform-origin:0 0">0,2268</div><div class="t" style="left:468px;top:6.2px;font-size:20.3px;color:#f2f2f2;transform:scaleX(.798);transform-origin:0 0">0,3190</div><div class="t" style="left:546px;top:6.2px;font-size:20.3px;color:#f2f2f2;transform:scaleX(.798);transform-origin:0 0">0,4152</div><div class="t" style="left:623.5px;top:6.2px;font-size:20.3px;color:#f2f2f2;transform:scaleX(.798);transform-origin:0 0">0,3127</div><div class="a" style="left:0;top:31.1px;width:635px;height:31.2px;background:linear-gradient(#7a7a7a,#808080)"></div><div class="t" style="left:13px;top:37.2px;font-size:20.3px;font-weight:bold;color:#f2f2f2;transform:scaleX(.786);transform-origin:0 0">y: CIE31</div><div class="t" style="left:98px;top:37.2px;font-size:20.3px;color:#f2f2f2;transform:scaleX(.798);transform-origin:0 0">0,3266</div><div class="t" style="left:175.5px;top:37.2px;font-size:20.3px;color:#f2f2f2;transform:scaleX(.798);transform-origin:0 0">0,3348</div><div class="t" style="left:244px;top:37.2px;font-size:20.3px;color:#f2f2f2;transform:scaleX(.798);transform-origin:0 0">0,5934</div><div class="t" style="left:322px;top:37.2px;font-size:20.3px;color:#f2f2f2;transform:scaleX(.798);transform-origin:0 0">0,0614</div><div class="t" style="left:390.5px;top:37.2px;font-size:20.3px;color:#f2f2f2;transform:scaleX(.798);transform-origin:0 0">0,3242</div><div class="t" style="left:468px;top:37.2px;font-size:20.3px;color:#f2f2f2;transform:scaleX(.798);transform-origin:0 0">0,1551</div><div class="t" style="left:546px;top:37.2px;font-size:20.3px;color:#f2f2f2;transform:scaleX(.798);transform-origin:0 0">0,5048</div><div class="t" style="left:623.5px;top:37.2px;font-size:20.3px;color:#f2f2f2;transform:scaleX(.798);transform-origin:0 0">0,3290</div><div class="a" style="left:0;top:62.2px;width:635px;height:31.2px;background:linear-gradient(#3e3e3e,#353535)"></div><div class="t" style="left:13px;top:68.4px;font-size:20.3px;font-weight:bold;color:#f2f2f2;transform:scaleX(.786);transform-origin:0 0">Y</div><div class="t" style="left:98px;top:68.4px;font-size:20.3px;color:#f2f2f2;transform:scaleX(.798);transform-origin:0 0">394,1450</div><div class="t" style="left:175.5px;top:68.4px;font-size:20.3px;color:#f2f2f2;transform:scaleX(.798);transform-origin:0 0">87,0136</div><div class="t" style="left:244px;top:68.4px;font-size:20.3px;color:#f2f2f2;transform:scaleX(.798);transform-origin:0 0">286,7993</div><div class="t" style="left:322px;top:68.4px;font-size:20.3px;color:#f2f2f2;transform:scaleX(.798);transform-origin:0 0">30,3345</div><div class="t" style="left:390.5px;top:68.4px;font-size:20.3px;color:#f2f2f2;transform:scaleX(.798);transform-origin:0 0">313,5779</div><div class="t" style="left:468px;top:68.4px;font-size:20.3px;color:#f2f2f2;transform:scaleX(.798);transform-origin:0 0">116,3137</div><div class="t" style="left:546px;top:68.4px;font-size:20.3px;color:#f2f2f2;transform:scaleX(.798);transform-origin:0 0">375,6209</div><div class="t" style="left:623.5px;top:68.4px;font-size:20.3px;color:#f2f2f2;transform:scaleX(.798);transform-origin:0 0">752,64</div><div class="a" style="left:0;top:93.3px;width:635px;height:31.2px;background:linear-gradient(#7a7a7a,#808080)"></div><div class="t" style="left:13px;top:99.5px;font-size:20.3px;font-weight:bold;color:#f2f2f2;transform:scaleX(.786);transform-origin:0 0">Target Y</div><div class="t" style="left:98px;top:99.5px;font-size:20.3px;color:#f2f2f2;transform:scaleX(.798);transform-origin:0 0">392,1205</div><div class="t" style="left:175.5px;top:99.5px;font-size:20.3px;color:#f2f2f2;transform:scaleX(.798);transform-origin:0 0">83,3868</div><div class="t" style="left:244px;top:99.5px;font-size:20.3px;color:#f2f2f2;transform:scaleX(.798);transform-origin:0 0">280,4283</div><div class="t" style="left:322px;top:99.5px;font-size:20.3px;color:#f2f2f2;transform:scaleX(.798);transform-origin:0 0">28,3055</div><div class="t" style="left:390.5px;top:99.5px;font-size:20.3px;color:#f2f2f2;transform:scaleX(.798);transform-origin:0 0">308,7338</div><div class="t" style="left:468px;top:99.5px;font-size:20.3px;color:#f2f2f2;transform:scaleX(.798);transform-origin:0 0">111,6922</div><div class="t" style="left:546px;top:99.5px;font-size:20.3px;color:#f2f2f2;transform:scaleX(.798);transform-origin:0 0">363,8151</div><div class="t" style="left:623.5px;top:99.5px;font-size:20.3px;color:#f2f2f2;transform:scaleX(.798);transform-origin:0 0">752,64</div><div class="a" style="left:0;top:124.4px;width:635px;height:31.2px;background:linear-gradient(#3e3e3e,#353535)"></div><div class="t" style="left:13px;top:130.6px;font-size:20.3px;font-weight:bold;color:#f2f2f2;transform:scaleX(.786);transform-origin:0 0">ΔE 2000</div><div class="t" style="left:98px;top:130.6px;font-size:20.3px;color:#f2f2f2;transform:scaleX(.798);transform-origin:0 0">1,8855</div><div class="t" style="left:175.5px;top:130.6px;font-size:20.3px;color:#f2f2f2;transform:scaleX(.798);transform-origin:0 0">1,0772</div><div class="t" style="left:244px;top:130.6px;font-size:20.3px;color:#f2f2f2;transform:scaleX(.798);transform-origin:0 0">0,5729</div><div class="t" style="left:322px;top:130.6px;font-size:20.3px;color:#f2f2f2;transform:scaleX(.798);transform-origin:0 0">0,8763</div><div class="t" style="left:390.5px;top:130.6px;font-size:20.3px;color:#f2f2f2;transform:scaleX(.798);transform-origin:0 0">1,3698</div><div class="t" style="left:468px;top:130.6px;font-size:20.3px;color:#f2f2f2;transform:scaleX(.798);transform-origin:0 0">0,8262</div><div class="t" style="left:546px;top:130.6px;font-size:20.3px;color:#f2f2f2;transform:scaleX(.798);transform-origin:0 0">1,0581</div><div class="t" style="left:623.5px;top:130.6px;font-size:20.3px;color:#f2f2f2;transform:scaleX(.798);transform-origin:0 0">2,5</div><div class="a" style="left:0;top:155.5px;width:635px;height:31.2px;background:linear-gradient(#7a7a7a,#808080)"></div><div class="t" style="left:13px;top:161.7px;font-size:20.3px;font-weight:bold;color:#f2f2f2;transform:scaleX(.786);transform-origin:0 0">ΔE ITP</div><div class="t" style="left:98px;top:161.7px;font-size:20.3px;color:#f2f2f2;transform:scaleX(.798);transform-origin:0 0">1,4848</div><div class="t" style="left:175.5px;top:161.7px;font-size:20.3px;color:#f2f2f2;transform:scaleX(.798);transform-origin:0 0">7,3282</div><div class="t" style="left:244px;top:161.7px;font-size:20.3px;color:#f2f2f2;transform:scaleX(.798);transform-origin:0 0">3,1761</div><div class="t" style="left:322px;top:161.7px;font-size:20.3px;color:#f2f2f2;transform:scaleX(.798);transform-origin:0 0">10,6117</div><div class="t" style="left:390.5px;top:161.7px;font-size:20.3px;color:#f2f2f2;transform:scaleX(.798);transform-origin:0 0">2,8081</div><div class="t" style="left:468px;top:161.7px;font-size:20.3px;color:#f2f2f2;transform:scaleX(.798);transform-origin:0 0">4,2156</div><div class="t" style="left:546px;top:161.7px;font-size:20.3px;color:#f2f2f2;transform:scaleX(.798);transform-origin:0 0">3,5717</div><div class="t" style="left:623.5px;top:161.7px;font-size:20.3px;color:#f2f2f2;transform:scaleX(.798);transform-origin:0 0">1,2</div></div><div class="a" style="left:1629px;top:698px;width:16px;height:166px;background:#5c5c5c;border-radius:3px"></div><div class="a" style="left:1630px;top:699px;width:14px;height:16px;background:linear-gradient(#909090,#6e6e6e);border-radius:3px"></div><div class="a" style="left:1632px;top:703px;width:0;height:0;border-left:5px solid transparent;border-right:5px solid transparent;border-bottom:6px solid #3a3a3a"></div><div class="a" style="left:1630px;top:847px;width:14px;height:16px;background:linear-gradient(#909090,#6e6e6e);border-radius:3px"></div><div class="a" style="left:1632px;top:852px;width:0;height:0;border-left:5px solid transparent;border-right:5px solid transparent;border-top:6px solid #3a3a3a"></div><div class="a" style="left:1631px;top:718px;width:12px;height:108px;background:#484848;border-radius:6px"></div><div class="a" style="left:994px;top:866px;width:635px;height:17px;background:#3a3a3a"></div><div class="a" style="left:995px;top:867px;width:14px;height:15px;background:linear-gradient(#777,#5a5a5a);border-radius:2px"></div><div class="a" style="left:999px;top:870px;width:0;height:0;border-top:4px solid transparent;border-bottom:4px solid transparent;border-right:5px solid #333"></div><div class="a" style="left:1613px;top:867px;width:14px;height:15px;background:linear-gradient(#777,#5a5a5a);border-radius:2px"></div><div class="a" style="left:1618px;top:870px;width:0;height:0;border-top:4px solid transparent;border-bottom:4px solid transparent;border-left:5px solid #333"></div><div class="a" style="left:1013px;top:868px;width:542px;height:13px;background:#474747;border-radius:6px"></div><div class="a" style="left:0px;top:930px;width:155px;height:80px;border-radius:6px 6px 0 0;background:linear-gradient(#aaa,#8a8a8a 40%,#5e5e5e)"></div><div class="a" style="left:6px;top:936px;width:143px;height:45px;border-radius:5px;background:#c0c0c0;box-shadow:inset 0 1px 2px rgba(0,0,0,.5),0 1px 0 rgba(255,255,255,.25)"></div><div class="t" style="left:0px;top:988.6px;width:155px;text-align:center;font-size:14px;font-weight:bold;color:#2a2a2a">White</div><div class="a" style="left:158px;top:930px;width:155px;height:80px;border-radius:6px 6px 0 0;background:linear-gradient(#aaa,#8a8a8a 40%,#5e5e5e)"></div><div class="a" style="left:164px;top:936px;width:143px;height:45px;border-radius:5px;background:#c00000;box-shadow:inset 0 1px 2px rgba(0,0,0,.5),0 1px 0 rgba(255,255,255,.25)"></div><div class="t" style="left:158px;top:988.6px;width:155px;text-align:center;font-size:14px;font-weight:bold;color:#2a2a2a">Red</div><div class="a" style="left:316px;top:930px;width:155px;height:80px;border-radius:6px 6px 0 0;background:linear-gradient(#aaa,#8a8a8a 40%,#5e5e5e)"></div><div class="a" style="left:322px;top:936px;width:143px;height:45px;border-radius:5px;background:#00c000;box-shadow:inset 0 1px 2px rgba(0,0,0,.5),0 1px 0 rgba(255,255,255,.25)"></div><div class="t" style="left:316px;top:988.6px;width:155px;text-align:center;font-size:14px;font-weight:bold;color:#2a2a2a">Green</div><div class="a" style="left:473px;top:930px;width:155px;height:80px;border-radius:6px 6px 0 0;background:linear-gradient(#aaa,#8a8a8a 40%,#5e5e5e)"></div><div class="a" style="left:479px;top:936px;width:143px;height:45px;border-radius:5px;background:#0000c0;box-shadow:inset 0 1px 2px rgba(0,0,0,.5),0 1px 0 rgba(255,255,255,.25)"></div><div class="t" style="left:473px;top:988.6px;width:155px;text-align:center;font-size:14px;font-weight:bold;color:#2a2a2a">Blue</div><div class="a" style="left:631px;top:930px;width:155px;height:80px;border-radius:6px 6px 0 0;background:linear-gradient(#aaa,#8a8a8a 40%,#5e5e5e)"></div><div class="a" style="left:637px;top:936px;width:143px;height:45px;border-radius:5px;background:#00c0c0;box-shadow:inset 0 1px 2px rgba(0,0,0,.5),0 1px 0 rgba(255,255,255,.25)"></div><div class="t" style="left:631px;top:988.6px;width:155px;text-align:center;font-size:14px;font-weight:bold;color:#2a2a2a">Cyan</div><div class="a" style="left:789px;top:930px;width:155px;height:80px;border-radius:6px 6px 0 0;background:linear-gradient(#aaa,#8a8a8a 40%,#5e5e5e)"></div><div class="a" style="left:795px;top:936px;width:143px;height:45px;border-radius:5px;background:#c000c0;box-shadow:inset 0 1px 2px rgba(0,0,0,.5),0 1px 0 rgba(255,255,255,.25)"></div><div class="t" style="left:789px;top:988.6px;width:155px;text-align:center;font-size:14px;font-weight:bold;color:#2a2a2a">Magenta</div><div class="a" style="left:947px;top:930px;width:155px;height:80px;border-radius:6px 6px 0 0;background:linear-gradient(#aaa,#8a8a8a 40%,#5e5e5e)"></div><div class="a" style="left:953px;top:936px;width:143px;height:45px;border-radius:5px;background:#c0c000;box-shadow:inset 0 1px 2px rgba(0,0,0,.5),0 1px 0 rgba(255,255,255,.25)"></div><div class="t" style="left:947px;top:988.6px;width:155px;text-align:center;font-size:14px;font-weight:bold;color:#2a2a2a">Yellow</div><div class="a" style="left:1105px;top:930px;width:156px;height:80px;border-radius:6px 6px 0 0;background:linear-gradient(#1e1e1e,#282828 20%,#323232)"></div><div class="a" style="left:1111px;top:936px;width:143px;height:45px;border-radius:6px;background:#fff;box-shadow:inset 1px 1px 1px rgba(0,0,0,.3)"></div><div class="t" style="left:1105px;top:988.6px;width:156px;text-align:center;font-size:14px;font-weight:bold;color:#f4f4f4">100W</div><div class="a" style="left:1264px;top:929px;width:60px;height:23px;border-radius:6px 6px 0 0;background:linear-gradient(#aaa,#7c7c7c)"></div><div class="a" style="left:1264px;top:952px;width:60px;height:60px;background:linear-gradient(#8e8e8e,#666);border-top:1px solid #3a3a3a"></div><div class="a" style="left:1285px;top:932px;width:19px;height:19px;border-radius:50%;background:linear-gradient(#6e6e6e,#9a9a9a)"></div><div class="a" style="left:1289px;top:937px;width:0;height:0;border-left:5.5px solid transparent;border-right:5.5px solid transparent;border-bottom:6px solid #333"></div><div class="a" style="left:1274px;top:960px;width:40px;height:39px;border-radius:6px;border:2.5px solid #2a2a2a;background:linear-gradient(#a8a8a8,#909090)"></div><div class="a" style="left:1285px;top:971px;width:18px;height:17px;background:linear-gradient(#222,#111 50%,#000)"></div><div class="a" style="left:1325px;top:929px;width:58px;height:38px;background:linear-gradient(#b4b4b4,#7a7a7a)"></div><div class="a" style="left:1384px;top:929px;width:55px;height:38px;background:linear-gradient(#b4b4b4,#7a7a7a)"></div><div class="a" style="left:1440px;top:929px;width:55px;height:38px;background:linear-gradient(#8a8a8a,#555)"></div><div class="a" style="left:1497px;top:929px;width:55px;height:38px;background:linear-gradient(#b4b4b4,#7a7a7a)"></div><div class="a" style="left:1553px;top:929px;width:55px;height:38px;background:linear-gradient(#b4b4b4,#7a7a7a)"></div><div class="a" style="left:1342px;top:936px;width:25px;height:25px;border-radius:50%;background:linear-gradient(#7a7a7a,#a4a4a4)"></div><div class="a" style="left:1399px;top:936px;width:25px;height:25px;border-radius:50%;background:linear-gradient(#7a7a7a,#a4a4a4)"></div><div class="a" style="left:1455.5px;top:936px;width:25px;height:25px;border-radius:50%;background:linear-gradient(#555,#7a7a7a)"></div><div class="a" style="left:1512px;top:936px;width:25px;height:25px;border-radius:50%;background:linear-gradient(#7a7a7a,#a4a4a4)"></div><div class="a" style="left:1568px;top:936px;width:25px;height:25px;border-radius:50%;background:linear-gradient(#7a7a7a,#a4a4a4)"></div><div class="a" style="left:1325px;top:968px;width:170px;height:40px;background:linear-gradient(#b8b8b8,#8e8e8e)"></div><div class="a" style="left:1497px;top:968px;width:167px;height:40px;background:linear-gradient(#b8b8b8,#8e8e8e)"></div><div class="a" style="left:1352px;top:975px;width:24px;height:24px;border-radius:50%;background:linear-gradient(#888,#b0b0b0)"></div><div class="a" style="left:1619px;top:975px;width:24px;height:24px;border-radius:50%;background:linear-gradient(#888,#b0b0b0)"></div><svg class="a" style="left:0;top:0" width="1667" height="1001"><rect x="1349.5" y="943.5" width="10" height="10" fill="#333"/><path d="M1408 942 L1418 948.5 L1408 955Z" fill="#333"/><path d="M1463 942.5h-2v12h2 M1473 942.5h2v12h-2" fill="none" stroke="#333" stroke-width="2"/><circle cx="1466" cy="948.5" r="1" fill="#333"/><circle cx="1470" cy="948.5" r="1" fill="#333"/><path d="M1524.5 948 c-2.5 -3.5 -7 -3.5 -7 0 c0 3.5 4.5 3.5 7 0 c2.5 -3.5 7 -3.5 7 0 c0 3.5 -4.5 3.5 -7 0z" fill="none" stroke="#333" stroke-width="2"/><path d="M1575 946 a6 6 0 0 1 10.5 -2.5 M1586 951 a6 6 0 0 1 -10.5 2.5" fill="none" stroke="#333" stroke-width="2.2"/><path d="M1583 941l4.5 0.5l-0.5 4.5z M1578 956l-4.5 -0.5l0.5 -4.5z" fill="#333"/><path d="M1365 982l-5 5l5 5 M1370 982l-5 5l5 5" fill="none" stroke="#333" stroke-width="1.8"/><path d="M1626 981.5l5 5l-5 5 M1631 981.5l5 5l-5 5" fill="none" stroke="#333" stroke-width="1.8"/><g transform="translate(1635,947)" fill="#e00"><g transform="translate(1,1)" fill="#000" opacity=".35"><rect x="-3.4" y="-16.5" width="6.8" height="33" rx="3" transform="rotate(0)"/><rect x="-3.4" y="-16.5" width="6.8" height="33" rx="3" transform="rotate(60)"/><rect x="-3.4" y="-16.5" width="6.8" height="33" rx="3" transform="rotate(120)"/></g><rect x="-3.4" y="-16.5" width="6.8" height="33" rx="3" transform="rotate(0)"/><rect x="-3.4" y="-16.5" width="6.8" height="33" rx="3" transform="rotate(60)"/><rect x="-3.4" y="-16.5" width="6.8" height="33" rx="3" transform="rotate(120)"/></g></svg><div class="t" style="left:1398px;top:974.5px;font-size:27.5px;color:#333;-webkit-text-stroke:.6px #333;transform:scaleX(1.04);transform-origin:0 0">Back</div><div class="t" style="left:1531px;top:974px;font-size:27.5px;color:#333;-webkit-text-stroke:.6px #333;transform:scaleX(1.15);transform-origin:0 0">Next</div><div class="a" style="left:1655px;top:38px;width:12px;height:963px;background:linear-gradient(90deg,rgba(0,0,0,0),rgba(0,0,0,.12) 50%,rgba(0,0,0,.5))"></div></body></html>
